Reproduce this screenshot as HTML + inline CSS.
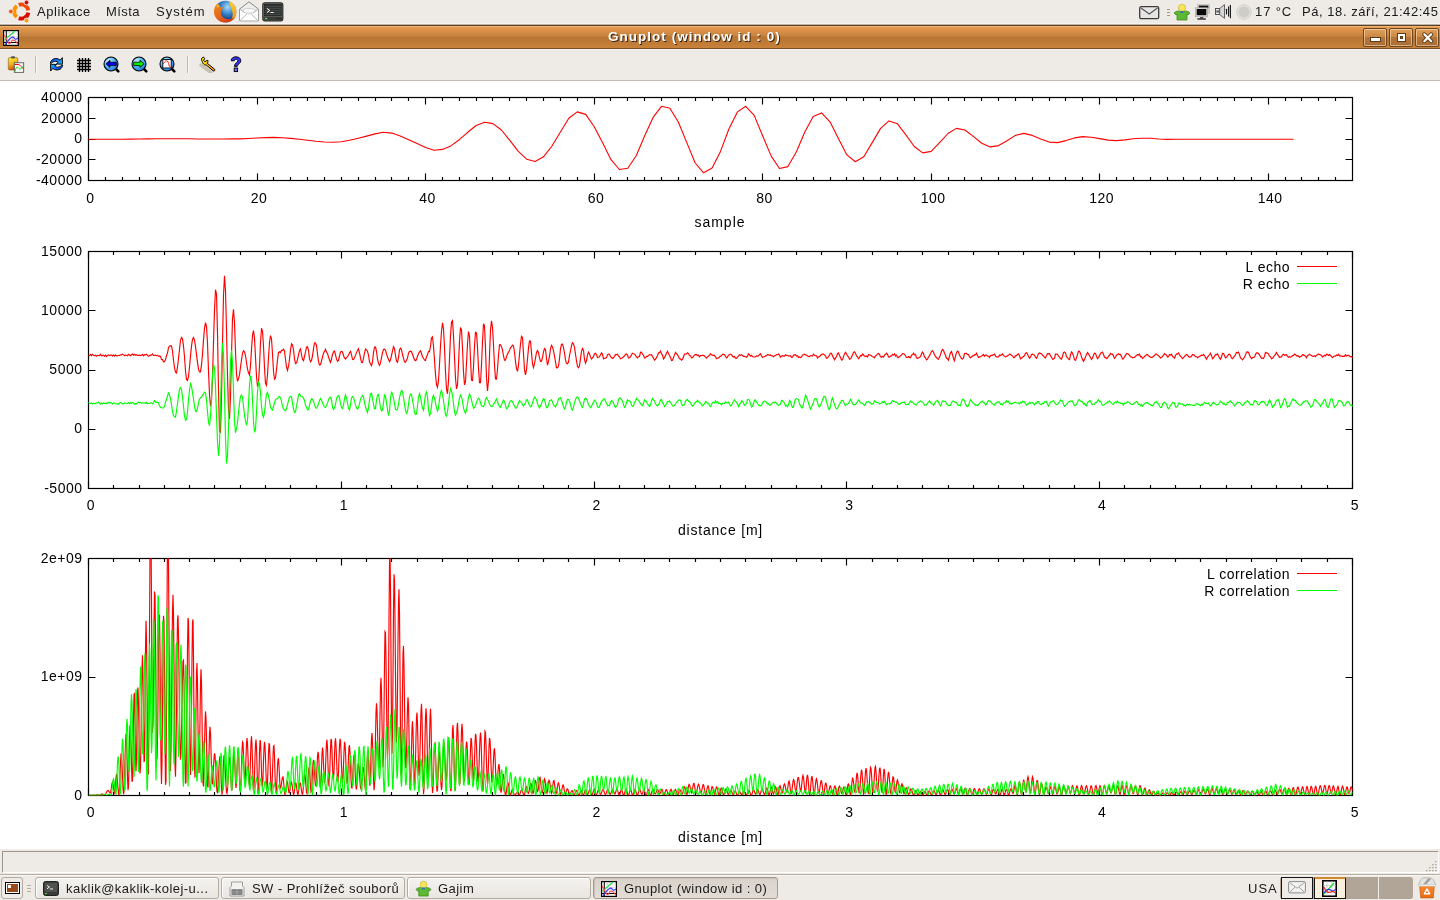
<!DOCTYPE html>
<html><head><meta charset="utf-8"><title>Gnuplot</title>
<style>html,body{margin:0;padding:0;} body{width:1440px;height:900px;overflow:hidden;position:relative;background:#fff;font-family:'Liberation Sans',sans-serif;-webkit-font-smoothing:antialiased;} #toppanel,#titlebar,#toolbar,#statusbar,#bottompanel{will-change:transform;}</style>
</head><body>
<div style="position:absolute;left:0;top:81px;width:1440px;height:768px;background:#fff"></div>
<svg style="position:absolute;left:0;top:0;will-change:transform" width="1440" height="900" viewBox="0 0 1440 900" font-family="Liberation Sans" font-size="14" letter-spacing="0.5" fill="#000">
<defs><clipPath id="clip3"><rect x="88.5" y="558.5" width="1264" height="237"/></clipPath></defs>
<rect x="88.5" y="97.5" width="1264.0" height="83.0" fill="none" stroke="#000" stroke-width="1.2"/>
<path d="M88.5 97.5v7M88.5 180.5v-7M257.5 97.5v7M257.5 180.5v-7M425.5 97.5v7M425.5 180.5v-7M594.5 97.5v7M594.5 180.5v-7M762.5 97.5v7M762.5 180.5v-7M931.5 97.5v7M931.5 180.5v-7M1099.5 97.5v7M1099.5 180.5v-7M1268.5 97.5v7M1268.5 180.5v-7M105.5 97.5v3.5M105.5 180.5v-3.5M122.5 97.5v3.5M122.5 180.5v-3.5M139.5 97.5v3.5M139.5 180.5v-3.5M155.5 97.5v3.5M155.5 180.5v-3.5M172.5 97.5v3.5M172.5 180.5v-3.5M189.5 97.5v3.5M189.5 180.5v-3.5M206.5 97.5v3.5M206.5 180.5v-3.5M223.5 97.5v3.5M223.5 180.5v-3.5M240.5 97.5v3.5M240.5 180.5v-3.5M273.5 97.5v3.5M273.5 180.5v-3.5M290.5 97.5v3.5M290.5 180.5v-3.5M307.5 97.5v3.5M307.5 180.5v-3.5M324.5 97.5v3.5M324.5 180.5v-3.5M341.5 97.5v3.5M341.5 180.5v-3.5M358.5 97.5v3.5M358.5 180.5v-3.5M375.5 97.5v3.5M375.5 180.5v-3.5M391.5 97.5v3.5M391.5 180.5v-3.5M408.5 97.5v3.5M408.5 180.5v-3.5M442.5 97.5v3.5M442.5 180.5v-3.5M459.5 97.5v3.5M459.5 180.5v-3.5M476.5 97.5v3.5M476.5 180.5v-3.5M492.5 97.5v3.5M492.5 180.5v-3.5M509.5 97.5v3.5M509.5 180.5v-3.5M526.5 97.5v3.5M526.5 180.5v-3.5M543.5 97.5v3.5M543.5 180.5v-3.5M560.5 97.5v3.5M560.5 180.5v-3.5M577.5 97.5v3.5M577.5 180.5v-3.5M610.5 97.5v3.5M610.5 180.5v-3.5M627.5 97.5v3.5M627.5 180.5v-3.5M644.5 97.5v3.5M644.5 180.5v-3.5M661.5 97.5v3.5M661.5 180.5v-3.5M678.5 97.5v3.5M678.5 180.5v-3.5M695.5 97.5v3.5M695.5 180.5v-3.5M712.5 97.5v3.5M712.5 180.5v-3.5M728.5 97.5v3.5M728.5 180.5v-3.5M745.5 97.5v3.5M745.5 180.5v-3.5M779.5 97.5v3.5M779.5 180.5v-3.5M796.5 97.5v3.5M796.5 180.5v-3.5M813.5 97.5v3.5M813.5 180.5v-3.5M830.5 97.5v3.5M830.5 180.5v-3.5M846.5 97.5v3.5M846.5 180.5v-3.5M863.5 97.5v3.5M863.5 180.5v-3.5M880.5 97.5v3.5M880.5 180.5v-3.5M897.5 97.5v3.5M897.5 180.5v-3.5M914.5 97.5v3.5M914.5 180.5v-3.5M948.5 97.5v3.5M948.5 180.5v-3.5M964.5 97.5v3.5M964.5 180.5v-3.5M981.5 97.5v3.5M981.5 180.5v-3.5M998.5 97.5v3.5M998.5 180.5v-3.5M1015.5 97.5v3.5M1015.5 180.5v-3.5M1032.5 97.5v3.5M1032.5 180.5v-3.5M1049.5 97.5v3.5M1049.5 180.5v-3.5M1065.5 97.5v3.5M1065.5 180.5v-3.5M1082.5 97.5v3.5M1082.5 180.5v-3.5M1116.5 97.5v3.5M1116.5 180.5v-3.5M1133.5 97.5v3.5M1133.5 180.5v-3.5M1150.5 97.5v3.5M1150.5 180.5v-3.5M1167.5 97.5v3.5M1167.5 180.5v-3.5M1183.5 97.5v3.5M1183.5 180.5v-3.5M1200.5 97.5v3.5M1200.5 180.5v-3.5M1217.5 97.5v3.5M1217.5 180.5v-3.5M1234.5 97.5v3.5M1234.5 180.5v-3.5M1251.5 97.5v3.5M1251.5 180.5v-3.5M1285.5 97.5v3.5M1285.5 180.5v-3.5M1301.5 97.5v3.5M1301.5 180.5v-3.5M1318.5 97.5v3.5M1318.5 180.5v-3.5M1335.5 97.5v3.5M1335.5 180.5v-3.5M88.5 97.5h7M1352.5 97.5h-7M88.5 118.5h7M1352.5 118.5h-7M88.5 139.5h7M1352.5 139.5h-7M88.5 159.5h7M1352.5 159.5h-7M88.5 180.5h7M1352.5 180.5h-7" stroke="#000" stroke-width="1.15" fill="none"/>
<text x="90.5" y="203" text-anchor="middle">0</text>
<text x="259" y="203" text-anchor="middle">20</text>
<text x="427.6" y="203" text-anchor="middle">40</text>
<text x="596.1" y="203" text-anchor="middle">60</text>
<text x="764.6" y="203" text-anchor="middle">80</text>
<text x="933.2" y="203" text-anchor="middle">100</text>
<text x="1101.7" y="203" text-anchor="middle">120</text>
<text x="1270.2" y="203" text-anchor="middle">140</text>
<text x="82.5" y="101.7" text-anchor="end">40000</text>
<text x="82.5" y="122.5" text-anchor="end">20000</text>
<text x="82.5" y="143.2" text-anchor="end">0</text>
<text x="82.5" y="163.9" text-anchor="end">-20000</text>
<text x="82.5" y="184.7" text-anchor="end">-40000</text>
<text x="720" y="227" text-anchor="middle" letter-spacing="1">sample</text>
<path d="M88.5 139.2 L96.9 139.2 L105.4 139.2 L113.8 139.2 L122.2 139.2 L130.6 139.1 L139.1 139 L147.5 138.9 L155.9 138.8 L164.3 138.7 L172.8 138.7 L181.2 138.7 L189.6 138.8 L198 139 L206.5 139 L214.9 139 L223.3 139 L231.8 138.9 L240.2 138.9 L248.6 138.5 L257 138 L265.5 137.6 L273.9 137.4 L282.3 137.7 L290.7 138.4 L299.2 139.3 L307.6 140.3 L316 141.3 L324.4 142 L332.9 142.2 L341.3 141.7 L349.7 140.2 L358.2 138.2 L366.6 136.1 L375 133.9 L383.4 132.3 L391.9 133.1 L400.3 136.1 L408.7 139.7 L417.1 143.6 L425.6 147.5 L434 150.2 L442.4 149.4 L450.8 145.9 L459.3 139.7 L467.7 132.3 L476.1 125.5 L484.6 122.2 L493 123.6 L501.4 130 L509.8 140.3 L518.3 151.4 L526.7 159.2 L535.1 161.5 L543.5 156.8 L552 146 L560.4 132 L568.8 118.3 L577.2 111.9 L585.7 114.4 L594.1 126.5 L602.5 142.6 L611 159.7 L619.4 169.5 L627.8 168.3 L636.2 155.7 L644.7 135.8 L653.1 117.4 L661.5 106.3 L669.9 108.2 L678.4 122.2 L686.8 142.6 L695.2 163 L703.6 172.8 L712.1 168.1 L720.5 151.4 L728.9 129 L737.4 111.9 L745.8 106.3 L754.2 115.4 L762.6 135.8 L771.1 155.9 L779.5 168.5 L787.9 166.6 L796.3 152 L804.8 132 L813.2 116.4 L821.6 112.9 L830 121.8 L838.5 138.7 L846.9 154.9 L855.3 161.7 L863.8 156.8 L872.2 142.6 L880.6 128.4 L889 120.9 L897.5 123.8 L905.9 134.9 L914.3 146.5 L922.7 152.9 L931.2 151.4 L939.6 142.6 L948 133.5 L956.4 128.4 L964.9 130 L973.3 136.4 L981.7 143.2 L990.2 146.9 L998.6 145.6 L1007 140.7 L1015.4 135.4 L1023.9 133.4 L1032.3 135.4 L1040.7 139 L1049.1 142.1 L1057.6 142.6 L1066 140.6 L1074.4 137.9 L1082.8 136.6 L1091.3 137.2 L1099.7 138.6 L1108.1 140.1 L1116.6 140.6 L1125 139.9 L1133.4 138.8 L1141.8 138.3 L1150.3 138.3 L1158.7 139 L1167.1 139.4 L1175.5 139.3 L1184 139.2 L1192.4 139.2 L1200.8 139.2 L1209.2 139.2 L1217.7 139.2 L1226.1 139.2 L1234.5 139.2 L1243 139.2 L1251.4 139.2 L1259.8 139.2 L1268.2 139.2 L1276.7 139.2 L1285.1 139.2 L1293.5 139.2" stroke="#FF0000" stroke-width="1.1" fill="none" stroke-linejoin="round"/>
<rect x="88.5" y="251.5" width="1264.0" height="237.0" fill="none" stroke="#000" stroke-width="1.2"/>
<path d="M88.5 251.5v7M88.5 488.5v-7M341.5 251.5v7M341.5 488.5v-7M594.5 251.5v7M594.5 488.5v-7M846.5 251.5v7M846.5 488.5v-7M1099.5 251.5v7M1099.5 488.5v-7M1352.5 251.5v7M1352.5 488.5v-7M113.5 251.5v3.5M113.5 488.5v-3.5M139.5 251.5v3.5M139.5 488.5v-3.5M164.5 251.5v3.5M164.5 488.5v-3.5M189.5 251.5v3.5M189.5 488.5v-3.5M214.5 251.5v3.5M214.5 488.5v-3.5M240.5 251.5v3.5M240.5 488.5v-3.5M265.5 251.5v3.5M265.5 488.5v-3.5M290.5 251.5v3.5M290.5 488.5v-3.5M316.5 251.5v3.5M316.5 488.5v-3.5M366.5 251.5v3.5M366.5 488.5v-3.5M391.5 251.5v3.5M391.5 488.5v-3.5M417.5 251.5v3.5M417.5 488.5v-3.5M442.5 251.5v3.5M442.5 488.5v-3.5M467.5 251.5v3.5M467.5 488.5v-3.5M492.5 251.5v3.5M492.5 488.5v-3.5M518.5 251.5v3.5M518.5 488.5v-3.5M543.5 251.5v3.5M543.5 488.5v-3.5M568.5 251.5v3.5M568.5 488.5v-3.5M619.5 251.5v3.5M619.5 488.5v-3.5M644.5 251.5v3.5M644.5 488.5v-3.5M669.5 251.5v3.5M669.5 488.5v-3.5M695.5 251.5v3.5M695.5 488.5v-3.5M720.5 251.5v3.5M720.5 488.5v-3.5M745.5 251.5v3.5M745.5 488.5v-3.5M771.5 251.5v3.5M771.5 488.5v-3.5M796.5 251.5v3.5M796.5 488.5v-3.5M821.5 251.5v3.5M821.5 488.5v-3.5M872.5 251.5v3.5M872.5 488.5v-3.5M897.5 251.5v3.5M897.5 488.5v-3.5M922.5 251.5v3.5M922.5 488.5v-3.5M948.5 251.5v3.5M948.5 488.5v-3.5M973.5 251.5v3.5M973.5 488.5v-3.5M998.5 251.5v3.5M998.5 488.5v-3.5M1023.5 251.5v3.5M1023.5 488.5v-3.5M1049.5 251.5v3.5M1049.5 488.5v-3.5M1074.5 251.5v3.5M1074.5 488.5v-3.5M1124.5 251.5v3.5M1124.5 488.5v-3.5M1150.5 251.5v3.5M1150.5 488.5v-3.5M1175.5 251.5v3.5M1175.5 488.5v-3.5M1200.5 251.5v3.5M1200.5 488.5v-3.5M1226.5 251.5v3.5M1226.5 488.5v-3.5M1251.5 251.5v3.5M1251.5 488.5v-3.5M1276.5 251.5v3.5M1276.5 488.5v-3.5M1301.5 251.5v3.5M1301.5 488.5v-3.5M1327.5 251.5v3.5M1327.5 488.5v-3.5M88.5 251.5h7M1352.5 251.5h-7M88.5 310.5h7M1352.5 310.5h-7M88.5 370.5h7M1352.5 370.5h-7M88.5 429.5h7M1352.5 429.5h-7M88.5 488.5h7M1352.5 488.5h-7" stroke="#000" stroke-width="1.15" fill="none"/>
<text x="91" y="510" text-anchor="middle">0</text>
<text x="343.8" y="510" text-anchor="middle">1</text>
<text x="596.6" y="510" text-anchor="middle">2</text>
<text x="849.4" y="510" text-anchor="middle">3</text>
<text x="1102.2" y="510" text-anchor="middle">4</text>
<text x="1355" y="510" text-anchor="middle">5</text>
<text x="82.5" y="255.7" text-anchor="end">15000</text>
<text x="82.5" y="314.9" text-anchor="end">10000</text>
<text x="82.5" y="374.2" text-anchor="end">5000</text>
<text x="82.5" y="433.4" text-anchor="end">0</text>
<text x="82.5" y="492.7" text-anchor="end">-5000</text>
<text x="720.5" y="535" text-anchor="middle" letter-spacing="0.8">distance [m]</text>
<text x="1290" y="272" text-anchor="end">L echo</text><path d="M1297 266.5h40" stroke="#FF0000" stroke-width="1.1"/>
<text x="1290" y="289" text-anchor="end">R echo</text><path d="M1297 283.5h40" stroke="#00FF00" stroke-width="1.1"/>
<path d="M88.5 355.8 L89.5 355.7 L90.5 354.4 L91.5 355.6 L92.5 354.3 L93.5 355.3 L94.5 355.7 L95.5 355.2 L96.5 356.3 L97.5 355.4 L98.5 355.5 L99.5 355.7 L100.5 354.3 L101.5 355.8 L102.5 355.6 L103.5 355.2 L104.5 356.1 L105.5 355.1 L106.5 356.6 L107.5 355.4 L108.5 354.9 L109.5 355.6 L110.5 355.1 L111.5 355 L112.5 355.9 L113.5 354.8 L114.5 356.1 L115.5 355 L116.5 355.7 L117.5 355.8 L118.5 355.5 L119.5 355.5 L120.5 354.8 L121.5 354.8 L122.5 354.1 L123.5 354.9 L124.5 355.6 L125.5 355.2 L126.5 355.3 L127.5 355.7 L128.5 354.3 L129.5 355 L130.5 355.7 L131.5 354.8 L132.5 354 L133.5 355.1 L134.5 354.3 L135.5 355.2 L136.5 354.6 L137.5 355.4 L138.5 355.5 L139.5 355 L140.5 355.6 L141.5 355.3 L142.5 354.4 L143.5 355.8 L144.5 354.6 L145.5 354.9 L146.5 354.2 L147.5 355.4 L148.5 356.3 L149.5 355.6 L150.5 355 L151.5 355.1 L152.5 354 L153.5 355.5 L154.5 355.5 L155.5 355.1 L156.5 355.7 L157.5 355.2 L158.5 356.4 L159.5 355.9 L160.5 356.4 L161.5 359.4 L162.5 359.6 L163.5 361.9 L164.5 361.5 L165.5 359.7 L166.5 355.6 L167.5 353 L168.5 347.6 L169.5 346.1 L170.5 345.9 L171.5 345.9 L172.5 351.2 L173.5 360.1 L174.5 367.5 L175.5 372.2 L176.5 372.9 L177.5 366.9 L178.5 358.5 L179.5 349.3 L180.5 340.3 L181.5 337.5 L182.5 338.8 L183.5 346.1 L184.5 356.8 L185.5 370.8 L186.5 379.5 L187.5 380.4 L188.5 376.7 L189.5 367.3 L190.5 355.9 L191.5 346.1 L192.5 339.1 L193.5 337.6 L194.5 340.2 L195.5 346.7 L196.5 354.6 L197.5 362.4 L198.5 369.1 L199.5 372 L200.5 371.9 L201.5 365 L202.5 354.1 L203.5 340.1 L204.5 328.1 L205.5 322.7 L206.5 326.5 L207.5 343 L208.5 371.2 L209.5 394.3 L210.5 406.3 L211.5 400.4 L212.5 376.9 L213.5 342.4 L214.5 310.1 L215.5 289.7 L216.5 294 L217.5 333.2 L218.5 389.9 L219.5 431.4 L220.5 432.2 L221.5 396.7 L222.5 342.8 L223.5 295.3 L224.5 275.9 L225.5 291.2 L226.5 329.6 L227.5 375.4 L228.5 409.5 L229.5 418.9 L230.5 396.7 L231.5 355.1 L232.5 318.5 L233.5 309.3 L234.5 322.7 L235.5 351.5 L236.5 374.1 L237.5 381.4 L238.5 378.6 L239.5 374.9 L240.5 367.1 L241.5 360 L242.5 353.3 L243.5 350.8 L244.5 351.8 L245.5 355.5 L246.5 362.5 L247.5 369.2 L248.5 372.8 L249.5 375.1 L250.5 365.6 L251.5 349.4 L252.5 335.2 L253.5 330.7 L254.5 338 L255.5 357.1 L256.5 376.2 L257.5 386.7 L258.5 383 L259.5 366.3 L260.5 342.7 L261.5 328.3 L262.5 331.1 L263.5 346.3 L264.5 367.7 L265.5 383.4 L266.5 385.4 L267.5 374.9 L268.5 357.6 L269.5 342.5 L270.5 335.7 L271.5 338.9 L272.5 353.7 L273.5 371.2 L274.5 379.2 L275.5 378.1 L276.5 369.4 L277.5 360 L278.5 352.6 L279.5 351.7 L280.5 352.5 L281.5 350.4 L282.5 350.4 L283.5 349.3 L284.5 351 L285.5 359.5 L286.5 366.8 L287.5 370.3 L288.5 366.5 L289.5 359.2 L290.5 350.1 L291.5 343.8 L292.5 345.1 L293.5 349.5 L294.5 358.9 L295.5 363.5 L296.5 362.8 L297.5 359.7 L298.5 354.9 L299.5 350.6 L300.5 348.9 L301.5 354.5 L302.5 359.3 L303.5 360.7 L304.5 356.5 L305.5 352 L306.5 347.2 L307.5 346.8 L308.5 350.3 L309.5 358.7 L310.5 361.8 L311.5 360.4 L312.5 356 L313.5 348.9 L314.5 342.9 L315.5 343 L316.5 345.5 L317.5 354 L318.5 361.4 L319.5 365 L320.5 364.5 L321.5 361.2 L322.5 357 L323.5 353.1 L324.5 351.4 L325.5 349.2 L326.5 352.1 L327.5 353.6 L328.5 356.8 L329.5 360 L330.5 362.3 L331.5 359.3 L332.5 354.5 L333.5 351.9 L334.5 351.1 L335.5 354.9 L336.5 358.9 L337.5 361.3 L338.5 360.5 L339.5 356.1 L340.5 351.9 L341.5 351.4 L342.5 352 L343.5 355.5 L344.5 357.9 L345.5 359 L346.5 357.6 L347.5 356.7 L348.5 355.2 L349.5 352.8 L350.5 351.4 L351.5 354.7 L352.5 359.3 L353.5 359.5 L354.5 357.7 L355.5 355.4 L356.5 352.9 L357.5 350.4 L358.5 348.8 L359.5 352.8 L360.5 357.9 L361.5 362.3 L362.5 362.6 L363.5 358.5 L364.5 353 L365.5 349 L366.5 349.8 L367.5 351.4 L368.5 355 L369.5 361.8 L370.5 364 L371.5 365.6 L372.5 361.9 L373.5 352.7 L374.5 347.2 L375.5 347 L376.5 351.3 L377.5 359.2 L378.5 363.4 L379.5 365.4 L380.5 362.9 L381.5 357.7 L382.5 352.6 L383.5 349.5 L384.5 349.1 L385.5 350.3 L386.5 353.8 L387.5 357.1 L388.5 359.2 L389.5 361.6 L390.5 359.8 L391.5 355.5 L392.5 350.9 L393.5 346.6 L394.5 348.6 L395.5 355.3 L396.5 361.3 L397.5 362.3 L398.5 357.5 L399.5 350 L400.5 348.1 L401.5 349.7 L402.5 354.5 L403.5 358.4 L404.5 361.9 L405.5 362.3 L406.5 360.3 L407.5 357.9 L408.5 353.3 L409.5 351.4 L410.5 351.2 L411.5 351.7 L412.5 354.5 L413.5 357.2 L414.5 359.8 L415.5 360.7 L416.5 359.6 L417.5 356.2 L418.5 353.7 L419.5 351.9 L420.5 350.8 L421.5 353.5 L422.5 356.7 L423.5 358.3 L424.5 360 L425.5 360.4 L426.5 356.6 L427.5 354.8 L428.5 351.4 L429.5 351.6 L430.5 346.4 L431.5 337.9 L432.5 336.8 L433.5 346.1 L434.5 359.9 L435.5 374.4 L436.5 384.5 L437.5 387.2 L438.5 380.7 L439.5 364.5 L440.5 345.9 L441.5 331.3 L442.5 322.8 L443.5 328.9 L444.5 347.4 L445.5 372.2 L446.5 388.9 L447.5 393.8 L448.5 381 L449.5 359 L450.5 335.9 L451.5 321.9 L452.5 320.6 L453.5 335.5 L454.5 357.1 L455.5 378.3 L456.5 388.9 L457.5 385 L458.5 364.6 L459.5 341.2 L460.5 327.5 L461.5 330 L462.5 348 L463.5 371.9 L464.5 384.9 L465.5 381.6 L466.5 363.6 L467.5 343.7 L468.5 331.6 L469.5 336.2 L470.5 359.2 L471.5 380.2 L472.5 380.6 L473.5 367.3 L474.5 346.1 L475.5 332.2 L476.5 332.9 L477.5 347.3 L478.5 367.9 L479.5 382.7 L480.5 382.7 L481.5 365 L482.5 342 L483.5 323.8 L484.5 325.9 L485.5 348.4 L486.5 377.8 L487.5 391 L488.5 380.8 L489.5 355.7 L490.5 329.7 L491.5 320.9 L492.5 327.1 L493.5 345.2 L494.5 365.2 L495.5 378.9 L496.5 379.1 L497.5 369.3 L498.5 355.3 L499.5 344.6 L500.5 344.8 L501.5 346.8 L502.5 349.8 L503.5 356 L504.5 360.1 L505.5 360.2 L506.5 356.6 L507.5 354.1 L508.5 352.3 L509.5 350.6 L510.5 347.5 L511.5 346.7 L512.5 345.2 L513.5 346 L514.5 352 L515.5 361.7 L516.5 368.6 L517.5 371.4 L518.5 365.2 L519.5 354.2 L520.5 344 L521.5 336.3 L522.5 337.4 L523.5 353.6 L524.5 369.9 L525.5 374.9 L526.5 369.7 L527.5 359 L528.5 348.1 L529.5 341 L530.5 341.3 L531.5 352.6 L532.5 363.8 L533.5 367.5 L534.5 363.7 L535.5 358.2 L536.5 352.5 L537.5 350.6 L538.5 352.8 L539.5 357.7 L540.5 361.5 L541.5 361 L542.5 357.6 L543.5 352 L544.5 348.6 L545.5 349.5 L546.5 358.3 L547.5 365.1 L548.5 361.4 L549.5 356.3 L550.5 348.6 L551.5 345.3 L552.5 346.9 L553.5 350.9 L554.5 355.9 L555.5 362 L556.5 367.7 L557.5 367.9 L558.5 366.2 L559.5 358.7 L560.5 348.8 L561.5 344.3 L562.5 344.1 L563.5 347.7 L564.5 352.8 L565.5 359.9 L566.5 363.4 L567.5 363.7 L568.5 362 L569.5 355.6 L570.5 351 L571.5 345.7 L572.5 342.6 L573.5 343.9 L574.5 347.3 L575.5 354 L576.5 361 L577.5 366.6 L578.5 367.7 L579.5 365.9 L580.5 358.6 L581.5 351.3 L582.5 348.4 L583.5 350.5 L584.5 359.3 L585.5 363 L586.5 360.8 L587.5 354.8 L588.5 352.2 L589.5 354.1 L590.5 356.9 L591.5 359 L592.5 358 L593.5 356.4 L594.5 353.9 L595.5 353.3 L596.5 354.7 L597.5 357.6 L598.5 357.3 L599.5 356.8 L600.5 354.8 L601.5 352.9 L602.5 354.3 L603.5 358.8 L604.5 358.2 L605.5 358.1 L606.5 357.6 L607.5 354.9 L608.5 354.1 L609.5 354.3 L610.5 356.7 L611.5 357.5 L612.5 358.4 L613.5 357.5 L614.5 356.3 L615.5 354.6 L616.5 354.6 L617.5 354.3 L618.5 356.1 L619.5 356.9 L620.5 358.8 L621.5 358.3 L622.5 357.7 L623.5 356.7 L624.5 356 L625.5 354.3 L626.5 354 L627.5 355 L628.5 358 L629.5 357.8 L630.5 356.7 L631.5 354.7 L632.5 353.3 L633.5 353.7 L634.5 353.9 L635.5 355.4 L636.5 356.9 L637.5 357.9 L638.5 356.7 L639.5 356.5 L640.5 352.3 L641.5 352.1 L642.5 354.2 L643.5 355.2 L644.5 358 L645.5 357.8 L646.5 356.4 L647.5 356.5 L648.5 355.4 L649.5 354.6 L650.5 355 L651.5 354.7 L652.5 356.4 L653.5 358.2 L654.5 360.1 L655.5 359.3 L656.5 357.4 L657.5 355.8 L658.5 352.9 L659.5 352.8 L660.5 351.1 L661.5 353.8 L662.5 355.1 L663.5 359 L664.5 357.7 L665.5 355.4 L666.5 353.2 L667.5 351.3 L668.5 353.6 L669.5 355.4 L670.5 357.4 L671.5 360.5 L672.5 360.3 L673.5 357.6 L674.5 354.9 L675.5 352.4 L676.5 353.6 L677.5 354.9 L678.5 356.5 L679.5 358.8 L680.5 358.9 L681.5 360.2 L682.5 359.4 L683.5 356.7 L684.5 354.1 L685.5 354 L686.5 353.9 L687.5 352.8 L688.5 353.6 L689.5 355.6 L690.5 355.8 L691.5 357.9 L692.5 357.7 L693.5 356.4 L694.5 355 L695.5 354.6 L696.5 354.5 L697.5 355.5 L698.5 355.2 L699.5 356.8 L700.5 355.8 L701.5 355.5 L702.5 355.4 L703.5 355.4 L704.5 356 L705.5 357.2 L706.5 358.1 L707.5 356.9 L708.5 356.2 L709.5 355.2 L710.5 353.7 L711.5 355 L712.5 355.1 L713.5 355.4 L714.5 355.4 L715.5 356.8 L716.5 358.7 L717.5 358.1 L718.5 358 L719.5 357 L720.5 356.1 L721.5 355.8 L722.5 354.3 L723.5 354.4 L724.5 354.7 L725.5 356.1 L726.5 357.8 L727.5 357.1 L728.5 355.1 L729.5 354.8 L730.5 354.1 L731.5 354.7 L732.5 356.3 L733.5 357 L734.5 356.4 L735.5 358.2 L736.5 358.4 L737.5 357.2 L738.5 356 L739.5 354.8 L740.5 355.4 L741.5 354.8 L742.5 355.5 L743.5 356.3 L744.5 356.3 L745.5 356.8 L746.5 357.2 L747.5 356.1 L748.5 353.8 L749.5 354.8 L750.5 356.1 L751.5 355.3 L752.5 356.6 L753.5 357 L754.5 357 L755.5 356.7 L756.5 355.9 L757.5 356.1 L758.5 355.9 L759.5 354.7 L760.5 353.7 L761.5 356 L762.5 357.4 L763.5 356.8 L764.5 356.7 L765.5 355.9 L766.5 355.7 L767.5 354.6 L768.5 354.8 L769.5 355.4 L770.5 355 L771.5 356 L772.5 355.8 L773.5 356.8 L774.5 355.8 L775.5 355.5 L776.5 354.6 L777.5 354.7 L778.5 354 L779.5 355 L780.5 357.3 L781.5 356.2 L782.5 355.5 L783.5 356.2 L784.5 356.2 L785.5 354.8 L786.5 355.5 L787.5 355.4 L788.5 356.1 L789.5 356 L790.5 355.6 L791.5 357.4 L792.5 357.2 L793.5 355.2 L794.5 354.9 L795.5 354.6 L796.5 356 L797.5 355.7 L798.5 357.4 L799.5 356.9 L800.5 357.6 L801.5 357 L802.5 355.2 L803.5 354.7 L804.5 354.1 L805.5 355 L806.5 355 L807.5 356 L808.5 356.5 L809.5 356.4 L810.5 355.5 L811.5 355.7 L812.5 356 L813.5 354.3 L814.5 355.3 L815.5 355.7 L816.5 355.8 L817.5 357.9 L818.5 356.8 L819.5 356.6 L820.5 355.5 L821.5 354.4 L822.5 354.1 L823.5 354 L824.5 354.9 L825.5 355.8 L826.5 358.3 L827.5 358.1 L828.5 356.5 L829.5 355.2 L830.5 353.4 L831.5 353.4 L832.5 355.9 L833.5 357.7 L834.5 359.7 L835.5 357.9 L836.5 356.8 L837.5 353.7 L838.5 353 L839.5 355.4 L840.5 357.5 L841.5 360 L842.5 359.8 L843.5 356.6 L844.5 353.9 L845.5 352.3 L846.5 353.7 L847.5 355.8 L848.5 356.8 L849.5 359.2 L850.5 358.8 L851.5 357.2 L852.5 354.9 L853.5 352.5 L854.5 351.8 L855.5 353.2 L856.5 356 L857.5 356.8 L858.5 358.7 L859.5 357.4 L860.5 355.5 L861.5 355.9 L862.5 353.9 L863.5 355 L864.5 356.1 L865.5 356.5 L866.5 355.9 L867.5 356.9 L868.5 354.7 L869.5 354.8 L870.5 355.3 L871.5 355.8 L872.5 356.8 L873.5 357 L874.5 357.6 L875.5 355.9 L876.5 355.4 L877.5 354 L878.5 353.5 L879.5 354.4 L880.5 356.7 L881.5 357.2 L882.5 356.4 L883.5 357.1 L884.5 355 L885.5 354.5 L886.5 353.1 L887.5 354.3 L888.5 357 L889.5 357.1 L890.5 356.1 L891.5 355.9 L892.5 354.4 L893.5 355.1 L894.5 353.9 L895.5 356 L896.5 355.1 L897.5 357.2 L898.5 357.5 L899.5 356.5 L900.5 355.9 L901.5 354.8 L902.5 353.7 L903.5 353.8 L904.5 354.2 L905.5 355.8 L906.5 357.5 L907.5 357.5 L908.5 356.5 L909.5 357.4 L910.5 357.8 L911.5 355 L912.5 354.8 L913.5 353.2 L914.5 354.9 L915.5 354.5 L916.5 357.8 L917.5 358.3 L918.5 358 L919.5 357.3 L920.5 356.6 L921.5 353.7 L922.5 352 L923.5 353.6 L924.5 356.9 L925.5 357.9 L926.5 359.9 L927.5 359.1 L928.5 357 L929.5 355.7 L930.5 353.6 L931.5 351.3 L932.5 350.5 L933.5 352.2 L934.5 354.7 L935.5 356.4 L936.5 357.6 L937.5 358.8 L938.5 359.2 L939.5 357.1 L940.5 354.7 L941.5 351.3 L942.5 349.4 L943.5 350.4 L944.5 353.3 L945.5 355.2 L946.5 358.3 L947.5 358.8 L948.5 360.1 L949.5 355.8 L950.5 352.8 L951.5 351.5 L952.5 354.6 L953.5 358.5 L954.5 360.6 L955.5 355.8 L956.5 352.8 L957.5 351.1 L958.5 351.8 L959.5 355.2 L960.5 356.8 L961.5 358.5 L962.5 359.1 L963.5 357.9 L964.5 353.5 L965.5 353.3 L966.5 353.4 L967.5 354.5 L968.5 354.6 L969.5 356.8 L970.5 357.7 L971.5 357.1 L972.5 355.8 L973.5 355.8 L974.5 354.7 L975.5 354.8 L976.5 353.3 L977.5 355.5 L978.5 357.4 L979.5 356.9 L980.5 356.7 L981.5 356.1 L982.5 355.5 L983.5 354.5 L984.5 356.2 L985.5 355.1 L986.5 355 L987.5 356 L988.5 356.2 L989.5 357.4 L990.5 355.6 L991.5 355.4 L992.5 355.4 L993.5 354.4 L994.5 354 L995.5 356.1 L996.5 356.9 L997.5 357 L998.5 357 L999.5 355 L1000.5 355.5 L1001.5 354.8 L1002.5 353.9 L1003.5 355.4 L1004.5 356.4 L1005.5 356.9 L1006.5 356.3 L1007.5 355.9 L1008.5 355.1 L1009.5 354.1 L1010.5 354.3 L1011.5 355.2 L1012.5 355.8 L1013.5 357.5 L1014.5 357.6 L1015.5 355.6 L1016.5 355.7 L1017.5 354.5 L1018.5 353.8 L1019.5 355.8 L1020.5 358.8 L1021.5 358.2 L1022.5 357.2 L1023.5 356.6 L1024.5 355.4 L1025.5 353.4 L1026.5 352.6 L1027.5 354.2 L1028.5 356.4 L1029.5 358 L1030.5 357.1 L1031.5 354.5 L1032.5 354.2 L1033.5 354.8 L1034.5 355 L1035.5 357.4 L1036.5 358.3 L1037.5 356.3 L1038.5 353.6 L1039.5 353 L1040.5 353.4 L1041.5 353.7 L1042.5 355.2 L1043.5 356 L1044.5 357.3 L1045.5 357.9 L1046.5 355.4 L1047.5 353.7 L1048.5 353.8 L1049.5 353.4 L1050.5 355.9 L1051.5 357 L1052.5 359.2 L1053.5 359.2 L1054.5 358.1 L1055.5 354 L1056.5 354.1 L1057.5 354.2 L1058.5 356.2 L1059.5 357.1 L1060.5 358.5 L1061.5 359.1 L1062.5 356.5 L1063.5 352.5 L1064.5 351.9 L1065.5 353 L1066.5 356.6 L1067.5 357.7 L1068.5 359.1 L1069.5 359.6 L1070.5 354.8 L1071.5 351.9 L1072.5 353 L1073.5 356.2 L1074.5 359.8 L1075.5 360.3 L1076.5 358 L1077.5 354.3 L1078.5 351.2 L1079.5 351.5 L1080.5 353.2 L1081.5 356.8 L1082.5 359.4 L1083.5 361.2 L1084.5 359.4 L1085.5 357.1 L1086.5 354.4 L1087.5 352.6 L1088.5 353.8 L1089.5 355.9 L1090.5 357.2 L1091.5 359.4 L1092.5 358.3 L1093.5 355.3 L1094.5 353.1 L1095.5 353.4 L1096.5 356.2 L1097.5 358.6 L1098.5 357.4 L1099.5 355.9 L1100.5 353.2 L1101.5 352.8 L1102.5 352.1 L1103.5 354.5 L1104.5 357.2 L1105.5 357.4 L1106.5 358.5 L1107.5 358 L1108.5 356.1 L1109.5 355.6 L1110.5 353.4 L1111.5 354.1 L1112.5 354 L1113.5 356 L1114.5 358.5 L1115.5 357.3 L1116.5 355 L1117.5 354.5 L1118.5 353.8 L1119.5 354.6 L1120.5 354.4 L1121.5 356.5 L1122.5 359.1 L1123.5 358.7 L1124.5 356.8 L1125.5 355.4 L1126.5 353.4 L1127.5 353.7 L1128.5 354.3 L1129.5 355.3 L1130.5 356.8 L1131.5 356.9 L1132.5 357.9 L1133.5 357.5 L1134.5 357.4 L1135.5 355.9 L1136.5 355.7 L1137.5 354.5 L1138.5 355.1 L1139.5 354.2 L1140.5 356.7 L1141.5 356.4 L1142.5 358.4 L1143.5 357.6 L1144.5 356.5 L1145.5 355.7 L1146.5 354.7 L1147.5 354.4 L1148.5 355.9 L1149.5 356.5 L1150.5 357.2 L1151.5 357.3 L1152.5 357.2 L1153.5 356.3 L1154.5 355.5 L1155.5 354 L1156.5 354 L1157.5 355 L1158.5 355.6 L1159.5 356.6 L1160.5 358.1 L1161.5 357.6 L1162.5 356.4 L1163.5 355.2 L1164.5 353.7 L1165.5 354.5 L1166.5 355 L1167.5 357 L1168.5 356.8 L1169.5 354.6 L1170.5 355.1 L1171.5 354.2 L1172.5 356.5 L1173.5 357.1 L1174.5 358.2 L1175.5 355.5 L1176.5 354 L1177.5 354.2 L1178.5 353 L1179.5 354.7 L1180.5 356.4 L1181.5 357.1 L1182.5 358.7 L1183.5 357.7 L1184.5 356.4 L1185.5 355.5 L1186.5 354.5 L1187.5 354.9 L1188.5 356.6 L1189.5 357.1 L1190.5 357 L1191.5 356.3 L1192.5 354.4 L1193.5 354.7 L1194.5 355.5 L1195.5 356.7 L1196.5 356.7 L1197.5 357.7 L1198.5 357.1 L1199.5 356.5 L1200.5 355.7 L1201.5 355.1 L1202.5 355.4 L1203.5 354.3 L1204.5 355.5 L1205.5 357.4 L1206.5 359.3 L1207.5 357.1 L1208.5 355.9 L1209.5 354.8 L1210.5 353.3 L1211.5 355.6 L1212.5 358.7 L1213.5 357.8 L1214.5 356.4 L1215.5 354.5 L1216.5 354.8 L1217.5 353.8 L1218.5 356 L1219.5 357.8 L1220.5 359.3 L1221.5 356.8 L1222.5 353.4 L1223.5 353.5 L1224.5 355.6 L1225.5 357.9 L1226.5 357.4 L1227.5 355.8 L1228.5 354.4 L1229.5 354.1 L1230.5 355.2 L1231.5 357.9 L1232.5 358.7 L1233.5 357.4 L1234.5 356.2 L1235.5 354.8 L1236.5 352.5 L1237.5 352.8 L1238.5 352.1 L1239.5 354.8 L1240.5 357.9 L1241.5 358.7 L1242.5 359.8 L1243.5 358.5 L1244.5 357.1 L1245.5 354.9 L1246.5 352.2 L1247.5 351.9 L1248.5 352.3 L1249.5 355 L1250.5 357.3 L1251.5 358.6 L1252.5 357.6 L1253.5 357.4 L1254.5 357.1 L1255.5 354.6 L1256.5 352.8 L1257.5 352.9 L1258.5 353.4 L1259.5 354.8 L1260.5 356.6 L1261.5 358.3 L1262.5 358 L1263.5 358.4 L1264.5 356.4 L1265.5 352.3 L1266.5 352.9 L1267.5 353.1 L1268.5 354 L1269.5 356.2 L1270.5 356.7 L1271.5 358.8 L1272.5 358.3 L1273.5 356.9 L1274.5 355.5 L1275.5 354.3 L1276.5 352.5 L1277.5 354.4 L1278.5 355.8 L1279.5 357.6 L1280.5 357.1 L1281.5 356.7 L1282.5 354.9 L1283.5 354.2 L1284.5 355.4 L1285.5 354.9 L1286.5 354.6 L1287.5 356.3 L1288.5 357.3 L1289.5 356.7 L1290.5 357.1 L1291.5 356.8 L1292.5 355.6 L1293.5 355.4 L1294.5 354 L1295.5 354.7 L1296.5 355.9 L1297.5 355.7 L1298.5 356.1 L1299.5 357.2 L1300.5 356.6 L1301.5 356.2 L1302.5 354.6 L1303.5 354.9 L1304.5 355.4 L1305.5 356.2 L1306.5 357.8 L1307.5 355.6 L1308.5 355.1 L1309.5 354.3 L1310.5 355.1 L1311.5 355.6 L1312.5 356.2 L1313.5 356.4 L1314.5 355.8 L1315.5 356.6 L1316.5 355.2 L1317.5 354.7 L1318.5 353.9 L1319.5 354.6 L1320.5 354.7 L1321.5 355.5 L1322.5 356.9 L1323.5 356.3 L1324.5 355.3 L1325.5 355.9 L1326.5 354.1 L1327.5 354.5 L1328.5 355.5 L1329.5 354.5 L1330.5 355.5 L1331.5 356.7 L1332.5 357.6 L1333.5 356.4 L1334.5 356 L1335.5 356.1 L1336.5 355 L1337.5 355.5 L1338.5 354.3 L1339.5 355.9 L1340.5 355.9 L1341.5 356.1 L1342.5 356.6 L1343.5 356.2 L1344.5 356.3 L1345.5 354.7 L1346.5 355.9 L1347.5 355.3 L1348.5 355.4 L1349.5 356 L1350.5 356.9 L1351.5 356.4 L1352.5 357.7" stroke="#FF0000" stroke-width="1.15" fill="none"/>
<path d="M88.5 402.3 L89.5 403.3 L90.5 403.4 L91.5 403.1 L92.5 404 L93.5 403.2 L94.5 403.7 L95.5 403.4 L96.5 402.8 L97.5 403.2 L98.5 402.2 L99.5 403 L100.5 404.2 L101.5 403.1 L102.5 403.7 L103.5 402.9 L104.5 403.5 L105.5 403.2 L106.5 403.3 L107.5 403.1 L108.5 402.2 L109.5 403.1 L110.5 402.6 L111.5 402.9 L112.5 403.9 L113.5 403.1 L114.5 403 L115.5 403.7 L116.5 404 L117.5 403.7 L118.5 404.2 L119.5 402.9 L120.5 402.7 L121.5 402.8 L122.5 403.8 L123.5 403.5 L124.5 402.9 L125.5 403.2 L126.5 403.7 L127.5 403.5 L128.5 402.6 L129.5 403.7 L130.5 402.9 L131.5 403.4 L132.5 402.5 L133.5 402.9 L134.5 404.4 L135.5 403.5 L136.5 403.9 L137.5 402.8 L138.5 402.1 L139.5 402.9 L140.5 402.5 L141.5 403.1 L142.5 403 L143.5 402.8 L144.5 402.8 L145.5 403.4 L146.5 402.5 L147.5 403.7 L148.5 403.5 L149.5 403.5 L150.5 402.7 L151.5 403.2 L152.5 403.7 L153.5 402.6 L154.5 400.8 L155.5 401.9 L156.5 402.3 L157.5 402.1 L158.5 402.5 L159.5 405.7 L160.5 407.2 L161.5 407.7 L162.5 408 L163.5 407.7 L164.5 406.5 L165.5 402 L166.5 399.7 L167.5 395.8 L168.5 393 L169.5 395 L170.5 398.3 L171.5 404.7 L172.5 411.5 L173.5 415.4 L174.5 416.9 L175.5 417 L176.5 411 L177.5 403.7 L178.5 395.6 L179.5 389.3 L180.5 387.7 L181.5 389.7 L182.5 396.9 L183.5 406.2 L184.5 415.9 L185.5 420.2 L186.5 419.4 L187.5 412.1 L188.5 399.4 L189.5 390.2 L190.5 383.7 L191.5 386.4 L192.5 392.4 L193.5 398.9 L194.5 406.5 L195.5 411.2 L196.5 411.3 L197.5 408 L198.5 402.8 L199.5 399.1 L200.5 397.6 L201.5 397.4 L202.5 395.3 L203.5 394.1 L204.5 392.1 L205.5 393.1 L206.5 400 L207.5 411.7 L208.5 422.1 L209.5 425.7 L210.5 415.9 L211.5 397.2 L212.5 376.2 L213.5 364.3 L214.5 367.8 L215.5 385.9 L216.5 415.5 L217.5 441.7 L218.5 455.7 L219.5 444.5 L220.5 408.2 L221.5 365 L222.5 343.1 L223.5 353.7 L224.5 393.1 L225.5 438.6 L226.5 463.4 L227.5 455.4 L228.5 428 L229.5 392.3 L230.5 361.7 L231.5 350.3 L232.5 362.2 L233.5 391.4 L234.5 421.2 L235.5 432.6 L236.5 429 L237.5 422.6 L238.5 412.9 L239.5 403.4 L240.5 396.2 L241.5 395 L242.5 397.5 L243.5 406.3 L244.5 414.9 L245.5 420.8 L246.5 425.2 L247.5 420.5 L248.5 404 L249.5 385.1 L250.5 375.6 L251.5 380.8 L252.5 399.3 L253.5 421.9 L254.5 432.4 L255.5 429.3 L256.5 411.9 L257.5 391.8 L258.5 382.2 L259.5 383.7 L260.5 392.9 L261.5 406.1 L262.5 414.9 L263.5 417.2 L264.5 412.7 L265.5 402.8 L266.5 394 L267.5 392.5 L268.5 396 L269.5 401.1 L270.5 407.3 L271.5 409.2 L272.5 410.2 L273.5 406.5 L274.5 402.5 L275.5 399.8 L276.5 398.7 L277.5 398.7 L278.5 396.7 L279.5 396.6 L280.5 398.1 L281.5 401.1 L282.5 406.4 L283.5 409 L284.5 410 L285.5 410.8 L286.5 408.6 L287.5 404.7 L288.5 400.7 L289.5 397.3 L290.5 396.5 L291.5 397 L292.5 402.8 L293.5 409 L294.5 412.4 L295.5 411.8 L296.5 406 L297.5 401.2 L298.5 395.1 L299.5 393.9 L300.5 396 L301.5 396.2 L302.5 396.9 L303.5 398.6 L304.5 400.3 L305.5 405.2 L306.5 407 L307.5 410 L308.5 409.4 L309.5 405.5 L310.5 401.3 L311.5 398.7 L312.5 399.2 L313.5 401.2 L314.5 404.7 L315.5 407.7 L316.5 408.3 L317.5 406.5 L318.5 403.7 L319.5 400.4 L320.5 398.5 L321.5 400.3 L322.5 402.7 L323.5 405.5 L324.5 406.9 L325.5 407.4 L326.5 405.2 L327.5 403.2 L328.5 399.9 L329.5 397.7 L330.5 397.2 L331.5 399.5 L332.5 407 L333.5 409.4 L334.5 407.8 L335.5 404.3 L336.5 398.6 L337.5 396.7 L338.5 395.8 L339.5 397.8 L340.5 403 L341.5 407.7 L342.5 408.5 L343.5 405.2 L344.5 398.4 L345.5 395 L346.5 398 L347.5 402.8 L348.5 408.3 L349.5 410 L350.5 404.6 L351.5 398 L352.5 396.7 L353.5 397.6 L354.5 401.2 L355.5 404.7 L356.5 407.9 L357.5 409.1 L358.5 407.5 L359.5 403.9 L360.5 399.2 L361.5 397 L362.5 395.5 L363.5 396.8 L364.5 402.5 L365.5 406.6 L366.5 410 L367.5 412.6 L368.5 407.9 L369.5 399.9 L370.5 393.6 L371.5 393.2 L372.5 398.4 L373.5 404.1 L374.5 408.9 L375.5 408.4 L376.5 400.3 L377.5 395 L378.5 394.4 L379.5 400.5 L380.5 407.9 L381.5 411 L382.5 410.2 L383.5 402.9 L384.5 395.1 L385.5 396.1 L386.5 402.3 L387.5 409.6 L388.5 415.7 L389.5 410.8 L390.5 398.2 L391.5 392.3 L392.5 393.6 L393.5 398.5 L394.5 403.3 L395.5 409.5 L396.5 410.1 L397.5 409.1 L398.5 404.2 L399.5 397.9 L400.5 393.4 L401.5 390.4 L402.5 391.6 L403.5 397.3 L404.5 403.7 L405.5 410.3 L406.5 413.2 L407.5 411.6 L408.5 404.4 L409.5 396.9 L410.5 394 L411.5 394.4 L412.5 400.1 L413.5 405.5 L414.5 412 L415.5 414.5 L416.5 414 L417.5 405.7 L418.5 397.3 L419.5 393.6 L420.5 397 L421.5 403 L422.5 408 L423.5 410.2 L424.5 402.1 L425.5 394.1 L426.5 392.1 L427.5 397.1 L428.5 409.1 L429.5 415.4 L430.5 413.5 L431.5 406 L432.5 397.7 L433.5 395.4 L434.5 398.1 L435.5 403.2 L436.5 407.8 L437.5 410.8 L438.5 408.4 L439.5 399.4 L440.5 392.6 L441.5 390.4 L442.5 394.5 L443.5 400.8 L444.5 407.7 L445.5 414.7 L446.5 415.9 L447.5 411.6 L448.5 403.6 L449.5 394.6 L450.5 388.3 L451.5 390.7 L452.5 395.3 L453.5 403.7 L454.5 411.8 L455.5 415.1 L456.5 413.2 L457.5 409.7 L458.5 404.2 L459.5 397.8 L460.5 394.9 L461.5 396.9 L462.5 400.9 L463.5 408 L464.5 411.6 L465.5 413.2 L466.5 410 L467.5 403.5 L468.5 397.6 L469.5 394.1 L470.5 395.9 L471.5 399.9 L472.5 404.7 L473.5 408.3 L474.5 407.4 L475.5 405.4 L476.5 402.6 L477.5 399.8 L478.5 398.3 L479.5 399.1 L480.5 402.8 L481.5 405.7 L482.5 406.4 L483.5 406.6 L484.5 404.4 L485.5 399.2 L486.5 397.7 L487.5 399.8 L488.5 401 L489.5 403.8 L490.5 405.9 L491.5 406.5 L492.5 406.2 L493.5 404.1 L494.5 403 L495.5 400.7 L496.5 398.9 L497.5 401.8 L498.5 404.8 L499.5 406.5 L500.5 407.3 L501.5 404.9 L502.5 402.3 L503.5 400.3 L504.5 401.2 L505.5 405.3 L506.5 408.6 L507.5 408.1 L508.5 406 L509.5 402.4 L510.5 401.2 L511.5 400.6 L512.5 401.7 L513.5 404.2 L514.5 406 L515.5 408.1 L516.5 408 L517.5 405.8 L518.5 402.7 L519.5 400.6 L520.5 401.7 L521.5 402.4 L522.5 404.8 L523.5 406 L524.5 404.5 L525.5 402.7 L526.5 399.8 L527.5 399.8 L528.5 403.3 L529.5 405.2 L530.5 406.7 L531.5 406.1 L532.5 402.8 L533.5 399.8 L534.5 397 L535.5 398.1 L536.5 399.8 L537.5 403.6 L538.5 406.2 L539.5 407.8 L540.5 405.9 L541.5 403.8 L542.5 400.5 L543.5 398.6 L544.5 399.5 L545.5 403.6 L546.5 407.7 L547.5 407.2 L548.5 405.4 L549.5 400.6 L550.5 400.2 L551.5 399.7 L552.5 402.1 L553.5 404.9 L554.5 405.8 L555.5 406.9 L556.5 404.8 L557.5 402.6 L558.5 398.9 L559.5 397.9 L560.5 397.6 L561.5 400.5 L562.5 403 L563.5 406.7 L564.5 408.9 L565.5 406.9 L566.5 402.1 L567.5 399.4 L568.5 399.5 L569.5 401 L570.5 404.2 L571.5 409 L572.5 410.1 L573.5 406.9 L574.5 402.7 L575.5 399.6 L576.5 397.3 L577.5 396.9 L578.5 398.2 L579.5 401.1 L580.5 403.1 L581.5 406 L582.5 407.4 L583.5 403.9 L584.5 399.1 L585.5 398.2 L586.5 398.9 L587.5 401.4 L588.5 404.4 L589.5 406.3 L590.5 407.7 L591.5 406.1 L592.5 404 L593.5 402 L594.5 400.2 L595.5 401.5 L596.5 402.7 L597.5 406.8 L598.5 407.6 L599.5 407.1 L600.5 403.3 L601.5 401.9 L602.5 400.4 L603.5 399 L604.5 398.9 L605.5 401.3 L606.5 402.9 L607.5 405.8 L608.5 405.3 L609.5 405.7 L610.5 402.3 L611.5 400.5 L612.5 401.1 L613.5 403 L614.5 405.9 L615.5 407.3 L616.5 406.4 L617.5 404.4 L618.5 399.7 L619.5 398 L620.5 398.3 L621.5 399.4 L622.5 401.2 L623.5 404.6 L624.5 407.3 L625.5 406 L626.5 402.3 L627.5 399.8 L628.5 400.9 L629.5 400.8 L630.5 401.9 L631.5 405 L632.5 406.5 L633.5 405.9 L634.5 402.7 L635.5 400.8 L636.5 398.5 L637.5 400 L638.5 400 L639.5 402.2 L640.5 403.4 L641.5 405 L642.5 405.6 L643.5 403.5 L644.5 399.8 L645.5 400.8 L646.5 401.5 L647.5 403.8 L648.5 405.2 L649.5 406.5 L650.5 405.1 L651.5 400.6 L652.5 398.3 L653.5 400.3 L654.5 400.8 L655.5 403.8 L656.5 405 L657.5 405.9 L658.5 404.7 L659.5 402.8 L660.5 399.9 L661.5 399.5 L662.5 402.6 L663.5 403.8 L664.5 406.6 L665.5 405.2 L666.5 404 L667.5 401.4 L668.5 401.7 L669.5 400.9 L670.5 402.6 L671.5 403.7 L672.5 406 L673.5 405.9 L674.5 405.5 L675.5 404 L676.5 402.3 L677.5 401.3 L678.5 400.3 L679.5 399.8 L680.5 400.2 L681.5 403.7 L682.5 405.7 L683.5 405 L684.5 404.8 L685.5 401 L686.5 400 L687.5 399.3 L688.5 401.3 L689.5 402.1 L690.5 402.7 L691.5 404.9 L692.5 406.2 L693.5 405.1 L694.5 403.6 L695.5 402.1 L696.5 401.8 L697.5 400.3 L698.5 401.7 L699.5 402.3 L700.5 403.1 L701.5 404.3 L702.5 405.8 L703.5 404.4 L704.5 404.1 L705.5 401.4 L706.5 402.3 L707.5 403.1 L708.5 403.5 L709.5 405.7 L710.5 406.6 L711.5 404.5 L712.5 402.5 L713.5 402.2 L714.5 402.9 L715.5 400.8 L716.5 402.5 L717.5 401.6 L718.5 403.4 L719.5 403.2 L720.5 403.5 L721.5 404.9 L722.5 403.4 L723.5 403.3 L724.5 403.3 L725.5 401.9 L726.5 402.8 L727.5 403 L728.5 402.2 L729.5 404.1 L730.5 405.9 L731.5 405.6 L732.5 403 L733.5 401.5 L734.5 399.8 L735.5 401.4 L736.5 402.2 L737.5 404.3 L738.5 406.5 L739.5 404 L740.5 403.5 L741.5 400.7 L742.5 401.1 L743.5 403 L744.5 405.3 L745.5 404.6 L746.5 403.2 L747.5 399.7 L748.5 399.3 L749.5 400.3 L750.5 403.3 L751.5 406.9 L752.5 406.3 L753.5 403.8 L754.5 400.3 L755.5 400 L756.5 402.4 L757.5 403.1 L758.5 405 L759.5 405.6 L760.5 405.6 L761.5 405.6 L762.5 403 L763.5 401.8 L764.5 401.2 L765.5 401.3 L766.5 402.7 L767.5 403.8 L768.5 403.7 L769.5 405.3 L770.5 405.1 L771.5 403.8 L772.5 402.9 L773.5 402.1 L774.5 402.7 L775.5 402 L776.5 403.4 L777.5 404.5 L778.5 405.3 L779.5 405.1 L780.5 403.7 L781.5 400.4 L782.5 400.6 L783.5 402.1 L784.5 403 L785.5 406.1 L786.5 405.4 L787.5 406.7 L788.5 404.8 L789.5 400.5 L790.5 401.5 L791.5 404.9 L792.5 407.4 L793.5 406.8 L794.5 402.1 L795.5 399.3 L796.5 398.4 L797.5 399.1 L798.5 399.7 L799.5 403.8 L800.5 405.6 L801.5 407.8 L802.5 407.7 L803.5 403.8 L804.5 399.9 L805.5 395.1 L806.5 397 L807.5 399.7 L808.5 403.2 L809.5 406.6 L810.5 409.1 L811.5 406.7 L812.5 405.1 L813.5 402 L814.5 399 L815.5 398.3 L816.5 398.8 L817.5 402.5 L818.5 406.1 L819.5 406.9 L820.5 405 L821.5 403 L822.5 399.9 L823.5 397 L824.5 396.5 L825.5 397.1 L826.5 401.7 L827.5 404.9 L828.5 408.9 L829.5 409.6 L830.5 406.2 L831.5 400.2 L832.5 398 L833.5 401.3 L834.5 404.4 L835.5 407.5 L836.5 408.9 L837.5 408.5 L838.5 405.9 L839.5 404 L840.5 403 L841.5 400.5 L842.5 400.3 L843.5 401.3 L844.5 404.3 L845.5 405.6 L846.5 404.2 L847.5 404.1 L848.5 403.4 L849.5 401.3 L850.5 399.5 L851.5 401.3 L852.5 403.2 L853.5 404.8 L854.5 404.6 L855.5 404.4 L856.5 402.9 L857.5 401.7 L858.5 400 L859.5 401 L860.5 403 L861.5 402.9 L862.5 403.6 L863.5 404.4 L864.5 405.4 L865.5 404.2 L866.5 401.9 L867.5 402 L868.5 401.4 L869.5 402.6 L870.5 403 L871.5 404.4 L872.5 404 L873.5 403.1 L874.5 400.8 L875.5 401.7 L876.5 402.5 L877.5 402.5 L878.5 402.7 L879.5 404.2 L880.5 403.4 L881.5 403.1 L882.5 401.7 L883.5 402.5 L884.5 401.5 L885.5 403.3 L886.5 404.6 L887.5 403.7 L888.5 403.7 L889.5 403.8 L890.5 403.2 L891.5 402.1 L892.5 400.6 L893.5 401.5 L894.5 401.3 L895.5 402.2 L896.5 402.1 L897.5 403.2 L898.5 404.2 L899.5 404.4 L900.5 403.5 L901.5 402.8 L902.5 402.3 L903.5 402.6 L904.5 402 L905.5 404.2 L906.5 404.9 L907.5 404.4 L908.5 404.4 L909.5 402.8 L910.5 401 L911.5 402.1 L912.5 402 L913.5 403.3 L914.5 404.2 L915.5 405 L916.5 404.9 L917.5 402.9 L918.5 402.6 L919.5 401.4 L920.5 401 L921.5 401.7 L922.5 402 L923.5 403.2 L924.5 405.3 L925.5 404.9 L926.5 404.9 L927.5 403.3 L928.5 402 L929.5 400.8 L930.5 402.4 L931.5 403.7 L932.5 404 L933.5 405.2 L934.5 403.6 L935.5 401.9 L936.5 401.1 L937.5 400.3 L938.5 401.9 L939.5 404.2 L940.5 405.8 L941.5 403.4 L942.5 400.9 L943.5 401.2 L944.5 401.3 L945.5 401.6 L946.5 403.8 L947.5 404.8 L948.5 405.5 L949.5 405.4 L950.5 405.4 L951.5 402.7 L952.5 401.2 L953.5 401 L954.5 401.8 L955.5 402.4 L956.5 402.5 L957.5 404.5 L958.5 405.6 L959.5 405.2 L960.5 405.6 L961.5 401.4 L962.5 399.2 L963.5 399.8 L964.5 400.9 L965.5 404 L966.5 405.8 L967.5 406.7 L968.5 405.6 L969.5 402.2 L970.5 399.8 L971.5 400.8 L972.5 402.3 L973.5 403.5 L974.5 404.1 L975.5 405.5 L976.5 404.9 L977.5 405.7 L978.5 404.3 L979.5 403.4 L980.5 402.3 L981.5 401.7 L982.5 401.2 L983.5 402.7 L984.5 402.8 L985.5 404.9 L986.5 404.3 L987.5 402.1 L988.5 400.6 L989.5 400.8 L990.5 401.3 L991.5 402.9 L992.5 403.6 L993.5 404.6 L994.5 405.4 L995.5 403.3 L996.5 402.9 L997.5 401.9 L998.5 401.9 L999.5 402.3 L1000.5 404.4 L1001.5 403.7 L1002.5 404.8 L1003.5 403 L1004.5 402.7 L1005.5 402.4 L1006.5 400.7 L1007.5 402.1 L1008.5 401.3 L1009.5 403.7 L1010.5 403.2 L1011.5 404.3 L1012.5 403.5 L1013.5 403 L1014.5 402.3 L1015.5 402.4 L1016.5 403 L1017.5 403 L1018.5 402.9 L1019.5 404 L1020.5 402.3 L1021.5 402.9 L1022.5 401.4 L1023.5 402 L1024.5 401.8 L1025.5 403.8 L1026.5 405.1 L1027.5 403.9 L1028.5 403.9 L1029.5 402.4 L1030.5 403.3 L1031.5 402.7 L1032.5 402.4 L1033.5 403.6 L1034.5 404.9 L1035.5 403.2 L1036.5 403.4 L1037.5 401.6 L1038.5 401.5 L1039.5 403.6 L1040.5 404.2 L1041.5 404.8 L1042.5 403.2 L1043.5 403.5 L1044.5 401.7 L1045.5 402.1 L1046.5 401.4 L1047.5 404.2 L1048.5 406.1 L1049.5 404.3 L1050.5 402.1 L1051.5 401.8 L1052.5 401.2 L1053.5 400.5 L1054.5 402.5 L1055.5 403.9 L1056.5 404.7 L1057.5 404.4 L1058.5 402.9 L1059.5 402 L1060.5 400 L1061.5 401.2 L1062.5 401 L1063.5 404.2 L1064.5 406.3 L1065.5 405.4 L1066.5 404.4 L1067.5 403.2 L1068.5 401.9 L1069.5 401.6 L1070.5 400.9 L1071.5 401.5 L1072.5 401 L1073.5 403.5 L1074.5 405.7 L1075.5 405.3 L1076.5 404.6 L1077.5 402.3 L1078.5 399.9 L1079.5 399.7 L1080.5 401.3 L1081.5 401.5 L1082.5 401.7 L1083.5 404.1 L1084.5 403.5 L1085.5 405.3 L1086.5 405.9 L1087.5 402.4 L1088.5 401.8 L1089.5 400.6 L1090.5 400.7 L1091.5 403.6 L1092.5 404.5 L1093.5 404.1 L1094.5 404.2 L1095.5 402.3 L1096.5 402.5 L1097.5 400.9 L1098.5 399.8 L1099.5 401.5 L1100.5 401.3 L1101.5 403.6 L1102.5 405.2 L1103.5 405.1 L1104.5 404.8 L1105.5 403.7 L1106.5 403.3 L1107.5 401.8 L1108.5 401.9 L1109.5 400.8 L1110.5 402.1 L1111.5 403.2 L1112.5 404.1 L1113.5 404.4 L1114.5 402.5 L1115.5 402 L1116.5 402.6 L1117.5 401.1 L1118.5 402.5 L1119.5 402.7 L1120.5 403.1 L1121.5 403.6 L1122.5 403.4 L1123.5 405 L1124.5 403.1 L1125.5 403.4 L1126.5 402.7 L1127.5 401.7 L1128.5 402 L1129.5 402.4 L1130.5 403.8 L1131.5 404.5 L1132.5 404.5 L1133.5 404 L1134.5 403 L1135.5 402.1 L1136.5 401.4 L1137.5 402.4 L1138.5 404.3 L1139.5 404.1 L1140.5 405.8 L1141.5 404.6 L1142.5 406.2 L1143.5 404.3 L1144.5 404.1 L1145.5 402.6 L1146.5 402.8 L1147.5 402.4 L1148.5 404 L1149.5 404 L1150.5 404.7 L1151.5 405.4 L1152.5 405.8 L1153.5 404.9 L1154.5 402.4 L1155.5 402.5 L1156.5 401.4 L1157.5 403.5 L1158.5 403.9 L1159.5 406 L1160.5 407.5 L1161.5 407.4 L1162.5 404.6 L1163.5 402.7 L1164.5 402.2 L1165.5 403.6 L1166.5 404.2 L1167.5 407.6 L1168.5 408.7 L1169.5 407.7 L1170.5 405.3 L1171.5 404.2 L1172.5 402.5 L1173.5 402.9 L1174.5 402.9 L1175.5 406.9 L1176.5 407.1 L1177.5 406.2 L1178.5 403.4 L1179.5 403 L1180.5 403.9 L1181.5 404 L1182.5 403.8 L1183.5 405.4 L1184.5 405.2 L1185.5 406 L1186.5 404.9 L1187.5 404.2 L1188.5 404.8 L1189.5 404.2 L1190.5 405 L1191.5 404.9 L1192.5 405.2 L1193.5 405.4 L1194.5 405.6 L1195.5 404.2 L1196.5 403.9 L1197.5 403.4 L1198.5 404.6 L1199.5 405.1 L1200.5 405.7 L1201.5 404.3 L1202.5 404.9 L1203.5 403.6 L1204.5 402.4 L1205.5 403.5 L1206.5 403.4 L1207.5 403.6 L1208.5 403.1 L1209.5 405 L1210.5 406 L1211.5 404.7 L1212.5 403.3 L1213.5 402.2 L1214.5 403.4 L1215.5 404.2 L1216.5 404.6 L1217.5 404.8 L1218.5 404.3 L1219.5 402.8 L1220.5 401.2 L1221.5 402.2 L1222.5 402.7 L1223.5 404.3 L1224.5 403.7 L1225.5 405 L1226.5 404.5 L1227.5 402.4 L1228.5 402.7 L1229.5 401.2 L1230.5 401 L1231.5 402.6 L1232.5 403 L1233.5 404.5 L1234.5 405.9 L1235.5 404.5 L1236.5 403.9 L1237.5 402.1 L1238.5 402.5 L1239.5 402.3 L1240.5 403.3 L1241.5 404.3 L1242.5 405.5 L1243.5 404.9 L1244.5 403 L1245.5 402.3 L1246.5 401.7 L1247.5 400.6 L1248.5 401.8 L1249.5 403.1 L1250.5 404.7 L1251.5 404.3 L1252.5 405 L1253.5 403.3 L1254.5 400.8 L1255.5 401.1 L1256.5 401.4 L1257.5 403.8 L1258.5 404.8 L1259.5 404.3 L1260.5 402.4 L1261.5 401.6 L1262.5 401.9 L1263.5 401.5 L1264.5 402.3 L1265.5 404.2 L1266.5 405.2 L1267.5 405.6 L1268.5 402 L1269.5 399.9 L1270.5 401.6 L1271.5 404 L1272.5 407.2 L1273.5 405.8 L1274.5 405.6 L1275.5 402.4 L1276.5 400.2 L1277.5 400.1 L1278.5 399.6 L1279.5 403 L1280.5 407.4 L1281.5 406.2 L1282.5 404.7 L1283.5 400.5 L1284.5 398.7 L1285.5 399.9 L1286.5 403.3 L1287.5 407.2 L1288.5 406.2 L1289.5 406.3 L1290.5 403.4 L1291.5 402.3 L1292.5 399.3 L1293.5 399.2 L1294.5 400.6 L1295.5 400.2 L1296.5 402.6 L1297.5 403.2 L1298.5 404.4 L1299.5 405 L1300.5 405.3 L1301.5 404.6 L1302.5 403.1 L1303.5 401.6 L1304.5 401.8 L1305.5 400.7 L1306.5 401 L1307.5 401.1 L1308.5 403.4 L1309.5 404.6 L1310.5 407.1 L1311.5 406.3 L1312.5 405.9 L1313.5 402.6 L1314.5 399.6 L1315.5 399.8 L1316.5 401 L1317.5 402.3 L1318.5 403.3 L1319.5 404.4 L1320.5 406.4 L1321.5 404.3 L1322.5 403.8 L1323.5 400.9 L1324.5 399.6 L1325.5 400.4 L1326.5 404.5 L1327.5 407.1 L1328.5 407.1 L1329.5 404 L1330.5 399.3 L1331.5 398.9 L1332.5 399.7 L1333.5 404.6 L1334.5 407.4 L1335.5 405.7 L1336.5 405.3 L1337.5 403.6 L1338.5 400.8 L1339.5 400.7 L1340.5 401 L1341.5 401.5 L1342.5 403.1 L1343.5 405.9 L1344.5 405.4 L1345.5 404.6 L1346.5 402.3 L1347.5 401.6 L1348.5 401.7 L1349.5 403.3 L1350.5 405.2 L1351.5 405 L1352.5 406.4" stroke="#00FF00" stroke-width="1.15" fill="none"/>
<rect x="88.5" y="558.5" width="1264.0" height="237.0" fill="none" stroke="#000" stroke-width="1.2"/>
<path d="M88.5 558.5v7M88.5 795.5v-7M341.5 558.5v7M341.5 795.5v-7M594.5 558.5v7M594.5 795.5v-7M846.5 558.5v7M846.5 795.5v-7M1099.5 558.5v7M1099.5 795.5v-7M1352.5 558.5v7M1352.5 795.5v-7M113.5 558.5v3.5M113.5 795.5v-3.5M139.5 558.5v3.5M139.5 795.5v-3.5M164.5 558.5v3.5M164.5 795.5v-3.5M189.5 558.5v3.5M189.5 795.5v-3.5M214.5 558.5v3.5M214.5 795.5v-3.5M240.5 558.5v3.5M240.5 795.5v-3.5M265.5 558.5v3.5M265.5 795.5v-3.5M290.5 558.5v3.5M290.5 795.5v-3.5M316.5 558.5v3.5M316.5 795.5v-3.5M366.5 558.5v3.5M366.5 795.5v-3.5M391.5 558.5v3.5M391.5 795.5v-3.5M417.5 558.5v3.5M417.5 795.5v-3.5M442.5 558.5v3.5M442.5 795.5v-3.5M467.5 558.5v3.5M467.5 795.5v-3.5M492.5 558.5v3.5M492.5 795.5v-3.5M518.5 558.5v3.5M518.5 795.5v-3.5M543.5 558.5v3.5M543.5 795.5v-3.5M568.5 558.5v3.5M568.5 795.5v-3.5M619.5 558.5v3.5M619.5 795.5v-3.5M644.5 558.5v3.5M644.5 795.5v-3.5M669.5 558.5v3.5M669.5 795.5v-3.5M695.5 558.5v3.5M695.5 795.5v-3.5M720.5 558.5v3.5M720.5 795.5v-3.5M745.5 558.5v3.5M745.5 795.5v-3.5M771.5 558.5v3.5M771.5 795.5v-3.5M796.5 558.5v3.5M796.5 795.5v-3.5M821.5 558.5v3.5M821.5 795.5v-3.5M872.5 558.5v3.5M872.5 795.5v-3.5M897.5 558.5v3.5M897.5 795.5v-3.5M922.5 558.5v3.5M922.5 795.5v-3.5M948.5 558.5v3.5M948.5 795.5v-3.5M973.5 558.5v3.5M973.5 795.5v-3.5M998.5 558.5v3.5M998.5 795.5v-3.5M1023.5 558.5v3.5M1023.5 795.5v-3.5M1049.5 558.5v3.5M1049.5 795.5v-3.5M1074.5 558.5v3.5M1074.5 795.5v-3.5M1124.5 558.5v3.5M1124.5 795.5v-3.5M1150.5 558.5v3.5M1150.5 795.5v-3.5M1175.5 558.5v3.5M1175.5 795.5v-3.5M1200.5 558.5v3.5M1200.5 795.5v-3.5M1226.5 558.5v3.5M1226.5 795.5v-3.5M1251.5 558.5v3.5M1251.5 795.5v-3.5M1276.5 558.5v3.5M1276.5 795.5v-3.5M1301.5 558.5v3.5M1301.5 795.5v-3.5M1327.5 558.5v3.5M1327.5 795.5v-3.5M88.5 558.5h7M1352.5 558.5h-7M88.5 677.5h7M1352.5 677.5h-7M88.5 795.5h7M1352.5 795.5h-7" stroke="#000" stroke-width="1.15" fill="none"/>
<text x="91" y="817" text-anchor="middle">0</text>
<text x="343.8" y="817" text-anchor="middle">1</text>
<text x="596.6" y="817" text-anchor="middle">2</text>
<text x="849.4" y="817" text-anchor="middle">3</text>
<text x="1102.2" y="817" text-anchor="middle">4</text>
<text x="1355" y="817" text-anchor="middle">5</text>
<text x="82.5" y="562.7" text-anchor="end">2e+09</text>
<text x="82.5" y="681.2" text-anchor="end">1e+09</text>
<text x="82.5" y="799.7" text-anchor="end">0</text>
<text x="720.5" y="842" text-anchor="middle" letter-spacing="0.8">distance [m]</text>
<text x="1290" y="579" text-anchor="end">L correlation</text><path d="M1297 573.5h40" stroke="#FF0000" stroke-width="1.1"/>
<text x="1290" y="596" text-anchor="end">R correlation</text><path d="M1297 590.5h40" stroke="#00FF00" stroke-width="1.1"/>
<g clip-path="url(#clip3)"><path d="M88.5 795.2 L89 795.3 L89.5 795.3 L90 795.4 L90.5 795.4 L91 795.4 L91.5 795.3 L92 795.2 L92.5 795.1 L93 795.1 L93.5 795.1 L94 795.2 L94.5 795.4 L95 795.5 L95.5 795.5 L96 795.3 L96.5 795.1 L97 794.9 L97.5 794.8 L98 794.9 L98.5 795.1 L99 795.3 L99.5 795.4 L100 795.5 L100.5 795.2 L101 794.7 L101.5 794.2 L102 793.9 L102.5 794 L103 794.3 L103.5 794.6 L104 794.9 L104.5 795 L105 794.8 L105.5 794.1 L106 793.2 L106.5 792.2 L107 791.3 L107.5 790.6 L108 790.4 L108.5 790.7 L109 791.6 L109.5 792.5 L110 793.1 L110.5 792.9 L111 790.5 L111.5 786.7 L112 783.5 L112.5 782.2 L113 783.7 L113.5 787.3 L114 791 L114.5 792.7 L115 790.6 L115.5 784.5 L116 777.8 L116.5 774.2 L117 775.7 L117.5 781.2 L118 788.3 L118.5 793.8 L119 795.2 L119.5 788.8 L120 776 L120.5 762.6 L121 754.6 L121.5 755.4 L122 763.7 L122.5 776.2 L123 788 L123.5 794.3 L124 791.6 L124.5 778.3 L125 759.3 L125.5 742.2 L126 733.9 L126.5 738.8 L127 756.8 L127.5 777.8 L128 790.1 L128.5 786.2 L129 766.2 L129.5 741.2 L130 725.2 L130.5 726.8 L131 743.6 L131.5 766.1 L132 781.8 L132.5 780.6 L133 756.3 L133.5 721.3 L134 695.1 L134.5 692.8 L135 718.3 L135.5 753.2 L136 771.3 L136.5 758.3 L137 723 L137.5 692 L138 687.5 L138.5 703.9 L139 731.6 L139.5 758.7 L140 773.5 L140.5 768 L141 739.9 L141.5 701 L142 668 L142.5 655.2 L143 676.4 L143.5 724 L144 762.2 L144.5 760.5 L145 710.6 L145.5 648.4 L146 620.8 L146.5 638.6 L147 684 L147.5 736.6 L148 772.9 L148.5 774.4 L149 722.2 L149.5 635 L150 552 L150.5 510.4 L151 529.7 L151.5 600.8 L152 683.9 L152.5 732.7 L153 725.3 L153.5 681.4 L154 626.6 L154.5 591.5 L155 595.1 L155.5 634.3 L156 691.1 L156.5 740.2 L157 759.4 L157.5 742.8 L158 700.4 L158.5 651.2 L159 617.4 L159.5 614.7 L160 650.9 L160.5 709.8 L161 762.8 L161.5 783.9 L162 762.9 L162.5 710.3 L163 651.7 L163.5 615.7 L164 621.5 L164.5 671.5 L165 738.4 L165.5 784.8 L166 781.5 L166.5 711.5 L167 610.6 L167.5 535.2 L168 524.9 L168.5 563.4 L169 631.4 L169.5 704.7 L170 757.4 L170.5 771.1 L171 749.5 L171.5 704.5 L172 651.9 L172.5 610.5 L173 594.8 L173.5 613.7 L174 662.5 L174.5 721 L175 765.2 L175.5 776.7 L176 753.4 L176.5 706.1 L177 654.4 L177.5 619.7 L178 615.3 L178.5 635.6 L179 672.1 L179.5 713.3 L180 746 L180.5 759.8 L181 753.4 L181.5 732.8 L182 704.7 L182.5 678 L183 661.2 L183.5 660.3 L184 682.4 L184.5 720.4 L185 759.2 L185.5 783.4 L186 782.3 L186.5 749.9 L187 698.1 L187.5 647.4 L188 617.9 L188.5 621.7 L189 658.2 L189.5 711.3 L190 757 L190.5 774.9 L191 757.1 L191.5 711.5 L192 658.6 L192.5 622.2 L193 619.4 L193.5 658.3 L194 719.1 L194.5 767.7 L195 777.6 L195.5 752.5 L196 709.7 L196.5 673.1 L197 663.1 L197.5 684.3 L198 724.3 L198.5 760.7 L199 773.3 L199.5 756 L200 719.3 L200.5 683.8 L201 669.3 L201.5 682.6 L202 716.5 L202.5 755.9 L203 783 L203.5 786.5 L204 771.7 L204.5 746.9 L205 723.2 L205.5 711.4 L206 717.2 L206.5 738.9 L207 766 L207.5 785.2 L208 787.4 L208.5 774.5 L209 753.3 L209.5 734.4 L210 726.8 L210.5 733.3 L211 750 L211.5 769.3 L212 782.6 L212.5 784.4 L213 778.3 L213.5 768.1 L214 758.3 L214.5 753.4 L215 755.4 L215.5 763.2 L216 774.2 L216.5 784.9 L217 791.7 L217.5 792.4 L218 787.1 L218.5 777.7 L219 767.3 L219.5 759.2 L220 756.2 L220.5 761.6 L221 774.8 L221.5 788.4 L222 794.8 L222.5 790.3 L223 777.2 L223.5 762.9 L224 755.3 L224.5 757 L225 764.4 L225.5 774.9 L226 785.3 L226.5 792.2 L227 793.4 L227.5 788.9 L228 780 L228.5 769.6 L229 761 L229.5 756.9 L230 759.4 L230.5 768.6 L231 780.2 L231.5 788.8 L232 790.3 L232.5 782.4 L233 768.6 L233.5 756.2 L234 751.8 L234.5 757.4 L235 769.8 L235.5 782.3 L236 788 L236.5 783.5 L237 770.7 L237.5 756.6 L238 748.8 L238.5 751.8 L239 764.4 L239.5 780.1 L240 790.7 L240.5 790.7 L241 781.1 L241.5 765.8 L242 750.8 L242.5 742 L243 743 L243.5 753.5 L244 768.3 L244.5 779.8 L245 782.3 L245.5 773.6 L246 758 L246.5 743.6 L247 738.1 L247.5 743.2 L248 756.1 L248.5 771.4 L249 782.9 L249.5 785.7 L250 776.3 L250.5 758.5 L251 742.2 L251.5 736.3 L252 744.5 L252.5 762.9 L253 781.9 L253.5 791.5 L254 787.9 L254.5 774.9 L255 757.9 L255.5 744.3 L256 739.6 L256.5 747.6 L257 765.4 L257.5 784.1 L258 794 L258.5 789.9 L259 773.1 L259.5 752.8 L260 740.3 L260.5 741.7 L261 754.5 L261.5 771.7 L262 784.4 L262.5 786.3 L263 777 L263.5 761.6 L264 747.5 L264.5 741.7 L265 746.2 L265.5 758.2 L266 773.1 L266.5 784.8 L267 788.9 L267.5 782.9 L268 769.1 L268.5 753.7 L269 743.7 L269.5 744 L270 756.7 L270.5 775.3 L271 789.9 L271.5 793.1 L272 785.6 L272.5 771.4 L273 756.3 L273.5 746.3 L274 745.7 L274.5 756.6 L275 773.9 L275.5 788.6 L276 793.2 L276.5 788.4 L277 778.1 L277.5 766.8 L278 759.2 L278.5 758.7 L279 765.8 L279.5 776.8 L280 786 L280.5 788.6 L281 786.9 L281.5 783.5 L282 779.7 L282.5 777.1 L283 776.9 L283.5 780.6 L284 786.8 L284.5 792.6 L285 795.1 L285.5 793.4 L286 788.8 L286.5 783.9 L287 781.3 L287.5 782.4 L288 785.9 L288.5 790.1 L289 792.8 L289.5 792.6 L290 789.7 L290.5 785.8 L291 782.7 L291.5 782.1 L292 784.3 L292.5 788.2 L293 792.2 L293.5 794.4 L294 793.7 L294.5 790.3 L295 786 L295.5 783 L296 783 L296.5 786.2 L297 790.7 L297.5 794.1 L298 794.6 L298.5 792.2 L299 788.3 L299.5 784.7 L300 782.9 L300.5 783.8 L301 786.8 L301.5 790.6 L302 793.5 L302.5 794.2 L303 791.4 L303.5 785.8 L304 779.7 L304.5 775.6 L305 775.1 L305.5 779.5 L306 786.6 L306.5 792.4 L307 793.5 L307.5 788.6 L308 779.9 L308.5 771.5 L309 767.3 L309.5 769.7 L310 777.4 L310.5 786.4 L311 791.9 L311.5 790.9 L312 783.1 L312.5 772.2 L313 763 L313.5 759.8 L314 763.5 L314.5 771.9 L315 780.9 L315.5 786.1 L316 784.7 L316.5 777.3 L317 766.6 L317.5 756.8 L318 751.9 L318.5 754 L319 763.1 L319.5 775.3 L320 785.1 L320.5 788.5 L321 782 L321.5 768 L322 754 L322.5 747.6 L323 751.8 L323.5 763.7 L324 776.6 L324.5 783.1 L325 779.8 L325.5 768.5 L326 754.1 L326.5 742.9 L327 739.7 L327.5 748.4 L328 765.4 L328.5 781 L329 786.4 L329.5 779.7 L330 764.8 L330.5 748.7 L331 739 L331.5 740.2 L332 751.1 L332.5 766.1 L333 777.9 L333.5 780.3 L334 771.4 L334.5 755.9 L335 742.4 L335.5 738.2 L336 744.3 L336.5 757.2 L337 771.3 L337.5 780.7 L338 781.2 L338.5 772.8 L339 759.1 L339.5 745.9 L340 738.9 L340.5 741.1 L341 751.4 L341.5 765.7 L342 777.8 L342.5 782.7 L343 778 L343.5 765.5 L344 751.4 L344.5 742.7 L345 743.4 L345.5 752.2 L346 765.3 L346.5 777.4 L347 783.8 L347.5 781.4 L348 770.9 L348.5 757.3 L349 747.1 L349.5 745.2 L350 752.3 L350.5 765.3 L351 778.9 L351.5 787.6 L352 787.9 L352.5 780.8 L353 769.8 L353.5 759.6 L354 754.9 L354.5 757.9 L355 767.4 L355.5 779.2 L356 787.8 L356.5 789.5 L357 783.8 L357.5 774 L358 765.6 L358.5 763.1 L359 766.5 L359.5 773.7 L360 781.9 L360.5 787.8 L361 789.2 L361.5 785.8 L362 779.1 L362.5 772.1 L363 767.7 L363.5 767.8 L364 772.6 L364.5 779.9 L365 786.8 L365.5 790.1 L366 787.1 L366.5 776.5 L367 763.2 L367.5 753.8 L368 752.6 L368.5 760.4 L369 772.9 L369.5 783.3 L370 785.6 L370.5 774.8 L371 755.3 L371.5 738.2 L372 733.1 L372.5 742.1 L373 760.4 L373.5 779.3 L374 790.1 L374.5 786.3 L375 765.7 L375.5 736.9 L376 712.6 L376.5 703.2 L377 710.7 L377.5 729.6 L378 751.5 L378.5 766.6 L379 767.3 L379.5 747.1 L380 714.6 L380.5 686.7 L381 677.7 L381.5 691.7 L382 721.4 L382.5 751.7 L383 767.3 L383.5 755.7 L384 714 L384.5 663.8 L385 631.5 L385.5 632.3 L386 658.9 L386.5 699.5 L387 737.8 L387.5 758.3 L388 746.9 L388.5 692.6 L389 620.3 L389.5 564.7 L390 552.3 L390.5 589.7 L391 658.2 L391.5 723.7 L392 753.4 L392.5 733.5 L393 676.3 L393.5 611.8 L394 574.2 L394.5 580.2 L395 619 L395.5 673.7 L396 721.6 L396.5 742.6 L397 729.8 L397.5 691 L398 642.1 L398.5 602.8 L399 589.2 L399.5 613.6 L400 670.2 L400.5 733.5 L401 774.6 L401.5 775.8 L402 741.9 L402.5 692.1 L403 653.3 L403.5 645.9 L404 666.5 L404.5 703.9 L405 742.7 L405.5 766.9 L406 767.9 L406.5 752.8 L407 729.4 L407.5 707.8 L408 697.3 L408.5 705.4 L409 733.2 L409.5 766.8 L410 788.9 L410.5 789.3 L411 773.3 L411.5 749.2 L412 728.6 L412.5 721.4 L413 731.2 L413.5 753 L414 775.6 L414.5 787 L415 781.4 L415.5 761.7 L416 736.6 L416.5 717.4 L417 712.5 L417.5 723.7 L418 745 L418.5 765.8 L419 775.6 L419.5 770.2 L420 752.8 L420.5 730.3 L421 711.5 L421.5 703.7 L422 715 L422.5 745.3 L423 777.7 L423.5 794.3 L424 788.6 L424.5 767.7 L425 740.2 L425.5 717.3 L426 708.4 L426.5 716.3 L427 736.7 L427.5 760.8 L428 778.1 L428.5 781.1 L429 766.8 L429.5 741.7 L430 718.5 L430.5 708.9 L431 720.3 L431.5 749.1 L432 778.9 L432.5 792.9 L433 787.9 L433.5 773.2 L434 755.7 L434.5 743.9 L435 743.1 L435.5 752.6 L436 768 L436.5 783.1 L437 791.6 L437.5 789.8 L438 778.3 L438.5 763.2 L439 752.7 L439.5 752.1 L440 760.2 L440.5 772.9 L441 784.5 L441.5 790 L442 786.1 L442.5 773.3 L443 757.4 L443.5 745.3 L444 742.5 L444.5 748.4 L445 759.9 L445.5 772.1 L446 780 L446.5 780.1 L447 771.3 L447.5 757.2 L448 744 L448.5 737.4 L449 741.5 L449.5 756.5 L450 775.4 L450.5 789.3 L451 791.3 L451.5 776 L452 750.8 L452.5 729.9 L453 725.1 L453.5 735.9 L454 756.4 L454.5 777.6 L455 790.5 L455.5 788.9 L456 771.3 L456.5 746.5 L457 727 L457.5 722.8 L458 733.2 L458.5 752.5 L459 772.4 L459.5 784.2 L460 782.8 L460.5 768.8 L461 748.3 L461.5 730.6 L462 723.7 L462.5 730.8 L463 748.7 L463.5 768.7 L464 781.1 L464.5 780.8 L465 772.4 L465.5 759.7 L466 747.9 L466.5 741.6 L467 743.6 L467.5 753.4 L468 766.9 L468.5 778.9 L469 784.6 L469.5 780.2 L470 765.4 L470.5 748.2 L471 738 L471.5 739.5 L472 750 L472.5 764.6 L473 776.8 L473.5 781.2 L474 774.7 L474.5 759.6 L475 743.4 L475.5 733.9 L476 735.5 L476.5 746.2 L477 761.6 L477.5 775.4 L478 782 L478.5 778.7 L479 767 L479.5 751.4 L480 738.2 L480.5 732.6 L481 738.3 L481.5 754.5 L482 774.3 L482.5 788.7 L483 791.5 L483.5 781.3 L484 762.3 L484.5 742.9 L485 731.3 L485.5 732.3 L486 744.4 L486.5 762.2 L487 777.7 L487.5 784.1 L488 778.4 L488.5 763.6 L489 747.2 L489.5 738.1 L490 739.9 L490.5 749.9 L491 763.9 L491.5 776.5 L492 782.7 L492.5 780.3 L493 771.1 L493.5 759.2 L494 750.2 L494.5 748.3 L495 755.3 L495.5 768.1 L496 780.4 L496.5 785.9 L497 784 L497.5 778.4 L498 771.4 L498.5 765.9 L499 764.1 L499.5 768.7 L500 778.7 L500.5 788.4 L501 792.6 L501.5 790.6 L502 785.4 L502.5 779.2 L503 775.1 L503.5 774.8 L504 779.2 L504.5 786.2 L505 792.6 L505.5 795.4 L506 794.2 L506.5 790.9 L507 786.9 L507.5 783.8 L508 782.9 L508.5 784.5 L509 788.1 L509.5 792 L510 794.6 L510.5 795 L511 793.8 L511.5 791.8 L512 790 L512.5 789.4 L513 790.2 L513.5 792.3 L514 794.3 L514.5 795.3 L515 795.2 L515.5 794.5 L516 793.6 L516.5 793 L517 792.9 L517.5 793.3 L518 793.8 L518.5 794.4 L519 794.8 L519.5 794.7 L520 793.7 L520.5 792.3 L521 790.8 L521.5 790.1 L522 790.2 L522.5 791.3 L523 793 L523.5 794.5 L524 795.3 L524.5 794.7 L525 792.1 L525.5 788.9 L526 786.7 L526.5 786.6 L527 788.2 L527.5 790.7 L528 792.8 L528.5 793.4 L529 791.9 L529.5 788.8 L530 785.4 L530.5 783.3 L531 783.4 L531.5 785.5 L532 788.8 L532.5 791.8 L533 793.4 L533.5 792.6 L534 789 L534.5 784.3 L535 781 L535.5 780.7 L536 782.7 L536.5 786.1 L537 789.5 L537.5 791.5 L538 791 L538.5 787.1 L539 781.8 L539.5 777.9 L540 777.3 L540.5 780 L541 784.6 L541.5 789.5 L542 792.6 L542.5 792.8 L543 789.9 L543.5 785.2 L544 780.9 L544.5 778.9 L545 780.2 L545.5 784.2 L546 789.1 L546.5 792.6 L547 793.2 L547.5 790.8 L548 786.5 L548.5 782.4 L549 780.2 L549.5 780.8 L550 783.8 L550.5 788 L551 791.7 L551.5 793.4 L552 792.4 L552.5 788.6 L553 784.1 L553.5 780.9 L554 780.6 L554.5 783.2 L555 787.6 L555.5 791.7 L556 793.7 L556.5 792.8 L557 789.9 L557.5 786.2 L558 783.4 L558.5 782.7 L559 784.5 L559.5 788.1 L560 791.9 L560.5 794.1 L561 793.8 L561.5 791.9 L562 789 L562.5 786.3 L563 784.9 L563.5 785.6 L564 788.3 L564.5 791.7 L565 794.1 L565.5 794.3 L566 792.9 L566.5 790.8 L567 789.2 L567.5 788.8 L568 789.7 L568.5 791.3 L569 793.1 L569.5 794.2 L570 794.2 L570.5 793.4 L571 792.1 L571.5 791 L572 790.6 L572.5 791.1 L573 792.5 L573.5 793.9 L574 794.7 L574.5 794.4 L575 793.4 L575.5 792.1 L576 791 L576.5 790.5 L577 790.9 L577.5 792.2 L578 793.9 L578.5 795.1 L579 795.4 L579.5 794.6 L580 792.8 L580.5 791.1 L581 790.3 L581.5 790.8 L582 792 L582.5 793.6 L583 794.8 L583.5 795 L584 794.1 L584.5 792.4 L585 790.7 L585.5 790 L586 790.5 L586.5 791.9 L587 793.5 L587.5 794.4 L588 794.1 L588.5 792.7 L589 791 L589.5 790 L590 790.1 L590.5 791.5 L591 793.4 L591.5 794.9 L592 795.1 L592.5 794.1 L593 792.4 L593.5 790.6 L594 789.7 L594.5 790.1 L595 791.6 L595.5 793.4 L596 794.6 L596.5 794.8 L597 793.7 L597.5 792 L598 790.4 L598.5 789.7 L599 790.2 L599.5 791.7 L600 793.4 L600.5 794.4 L601 794.3 L601.5 793.1 L602 791.4 L602.5 790 L603 789.5 L603.5 790 L604 791.4 L604.5 793 L605 794.2 L605.5 794.5 L606 793.8 L606.5 792.4 L607 790.8 L607.5 789.8 L608 789.7 L608.5 790.5 L609 792 L609.5 793.4 L610 794.2 L610.5 794 L611 793 L611.5 791.5 L612 790.2 L612.5 789.6 L613 789.9 L613.5 791.2 L614 792.8 L614.5 793.9 L615 793.9 L615.5 792.8 L616 791 L616.5 789.6 L617 789.3 L617.5 790.2 L618 791.9 L618.5 793.8 L619 795 L619.5 795.2 L620 793.9 L620.5 791.8 L621 790 L621.5 789.4 L622 790.3 L622.5 792.3 L623 794.3 L623.5 795.3 L624 794.9 L624.5 793.5 L625 791.6 L625.5 790.1 L626 789.5 L626.5 790.1 L627 791.7 L627.5 793.6 L628 795 L628.5 795.3 L629 794.2 L629.5 792.2 L630 790.3 L630.5 789.4 L631 790 L631.5 791.9 L632 794 L632.5 795.2 L633 794.8 L633.5 793.3 L634 791.3 L634.5 789.8 L635 789.3 L635.5 790 L636 791.7 L636.5 793.5 L637 794.9 L637.5 795.3 L638 794.3 L638.5 792.4 L639 790.5 L639.5 789.4 L640 789.7 L640.5 790.9 L641 792.7 L641.5 794 L642 794.4 L642.5 793.6 L643 791.9 L643.5 790.3 L644 789.7 L644.5 790.4 L645 792.3 L645.5 794.4 L646 795.4 L646.5 795 L647 793.4 L647.5 791.3 L648 789.8 L648.5 789.5 L649 790.5 L649.5 792.4 L650 794.2 L650.5 795.2 L651 794.9 L651.5 793.2 L652 791.2 L652.5 789.8 L653 789.7 L653.5 790.6 L654 791.9 L654.5 793.2 L655 793.9 L655.5 793.8 L656 792.8 L656.5 791.4 L657 790.2 L657.5 789.7 L658 790.1 L658.5 791.4 L659 793 L659.5 794 L660 793.7 L660.5 792.5 L661 790.9 L661.5 789.7 L662 789.4 L662.5 790.4 L663 792.2 L663.5 794 L664 794.8 L664.5 794.3 L665 792.8 L665.5 791 L666 789.7 L666.5 789.6 L667 790.7 L667.5 792.7 L668 794.5 L668.5 795.5 L669 795.1 L669.5 793.5 L670 791.5 L670.5 789.8 L671 789.3 L671.5 790.2 L672 792.1 L672.5 793.9 L673 794.8 L673.5 794.3 L674 792.9 L674.5 791.2 L675 789.9 L675.5 789.5 L676 790.6 L676.5 792.5 L677 794.4 L677.5 795.2 L678 794.6 L678.5 793 L679 791.1 L679.5 789.9 L680 789.8 L680.5 790.6 L681 791.9 L681.5 793.2 L682 793.9 L682.5 793.7 L683 792.1 L683.5 789.8 L684 787.7 L684.5 786.8 L685 787.5 L685.5 789.6 L686 792.2 L686.5 794 L687 794.4 L687.5 792.6 L688 789.4 L688.5 786.2 L689 784.4 L689.5 784.8 L690 786.6 L690.5 789.3 L691 791.7 L691.5 792.9 L692 792.2 L692.5 789.4 L693 785.9 L693.5 783.6 L694 783.5 L694.5 785.5 L695 788.6 L695.5 791.6 L696 793.1 L696.5 792.6 L697 790.5 L697.5 787.6 L698 785.2 L698.5 784.2 L699 785.1 L699.5 787.4 L700 790.2 L700.5 792.3 L701 793 L701.5 791.8 L702 789.4 L702.5 786.6 L703 784.8 L703.5 784.7 L704 786.6 L704.5 789.7 L705 792.7 L705.5 794.3 L706 793.9 L706.5 791.9 L707 789.1 L707.5 786.7 L708 785.8 L708.5 786.9 L709 789.6 L709.5 792.5 L710 794.2 L710.5 793.8 L711 791.5 L711.5 788.5 L712 786.6 L712.5 786.7 L713 788.4 L713.5 791 L714 793.2 L714.5 794.1 L715 793.2 L715.5 790.9 L716 788.3 L716.5 786.9 L717 787.3 L717.5 789.2 L718 791.8 L718.5 794 L719 794.8 L719.5 794 L720 792 L720.5 789.8 L721 788.3 L721.5 788.2 L722 789.6 L722.5 791.8 L723 793.9 L723.5 794.8 L724 794.4 L724.5 793 L725 791.2 L725.5 789.6 L726 789 L726.5 789.5 L727 791 L727.5 792.7 L728 794 L728.5 794.3 L729 793.7 L729.5 792.5 L730 791.3 L730.5 790.4 L731 790.3 L731.5 791 L732 792.4 L732.5 793.8 L733 794.5 L733.5 794.3 L734 793.3 L734.5 791.9 L735 791 L735.5 791 L736 792.1 L736.5 793.7 L737 795 L737.5 795.2 L738 794.5 L738.5 793.3 L739 792.1 L739.5 791.6 L740 792 L740.5 792.9 L741 793.9 L741.5 794.5 L742 794.4 L742.5 793.5 L743 792.4 L743.5 791.4 L744 791.1 L744.5 791.6 L745 792.6 L745.5 793.7 L746 794.6 L746.5 794.8 L747 794.2 L747.5 793 L748 791.6 L748.5 790.7 L749 790.5 L749.5 791.3 L750 792.7 L750.5 794.3 L751 795.3 L751.5 795.2 L752 794 L752.5 792.2 L753 790.5 L753.5 789.8 L754 790.3 L754.5 791.7 L755 793.3 L755.5 794.1 L756 793.7 L756.5 792.2 L757 790.5 L757.5 789.4 L758 789.6 L758.5 791 L759 793 L759.5 794.4 L760 794.6 L760.5 793.4 L761 791.5 L761.5 789.7 L762 788.9 L762.5 789.2 L763 790.6 L763.5 792.5 L764 794 L764.5 794.7 L765 794 L765.5 792.1 L766 789.8 L766.5 788.2 L767 788 L767.5 789.5 L768 791.9 L768.5 794.1 L769 794.9 L769.5 794 L770 791.8 L770.5 789.3 L771 787.5 L771.5 787.3 L772 788.7 L772.5 791.1 L773 793.2 L773.5 793.9 L774 792.9 L774.5 790.6 L775 788.1 L775.5 786.8 L776 787.4 L776.5 789.9 L777 793 L777.5 795.1 L778 795.1 L778.5 792.7 L779 789.1 L779.5 786.2 L780 785.6 L780.5 787 L781 789.5 L781.5 791.9 L782 793 L782.5 792.3 L783 789.9 L783.5 787 L784 784.7 L784.5 784 L785 785.1 L785.5 787.4 L786 790 L786.5 791.8 L787 792.3 L787.5 790 L788 786 L788.5 782.3 L789 781.1 L789.5 782.9 L790 786.9 L790.5 791.1 L791 793.5 L791.5 793 L792 790 L792.5 785.7 L793 781.7 L793.5 779.6 L794 780.3 L794.5 783.4 L795 787.4 L795.5 790.5 L796 791.3 L796.5 789.1 L797 784.8 L797.5 780.3 L798 777.5 L798.5 777.5 L799 780.2 L799.5 784.5 L800 788.7 L800.5 791.2 L801 790.7 L801.5 787.1 L802 781.8 L802.5 777.2 L803 775.4 L803.5 777.3 L804 782.4 L804.5 788.2 L805 792.2 L805.5 792.6 L806 788.5 L806.5 782 L807 776.5 L807.5 774.8 L808 777.8 L808.5 784.1 L809 790.7 L809.5 794.5 L810 793.9 L810.5 789.3 L811 782.8 L811.5 777.6 L812 776.1 L812.5 779.1 L813 784.9 L813.5 790.8 L814 794.1 L814.5 793.3 L815 789.4 L815.5 784.1 L816 779.9 L816.5 778.7 L817 780.7 L817.5 784.9 L818 789.6 L818.5 792.8 L819 793.1 L819.5 791 L820 787.2 L820.5 783.3 L821 780.9 L821.5 780.8 L822 783.5 L822.5 788 L823 792.3 L823.5 794.6 L824 793.8 L824.5 790.2 L825 785.9 L825.5 783.1 L826 783.2 L826.5 785.5 L827 789 L827.5 792.2 L828 793.7 L828.5 793 L829 790.7 L829.5 787.9 L830 786 L830.5 785.9 L831 787.6 L831.5 790.3 L832 792.8 L832.5 794 L833 793.5 L833.5 791.4 L834 788.6 L834.5 786.5 L835 785.9 L835.5 787.3 L836 790 L836.5 792.9 L837 794.8 L837.5 794.8 L838 792.6 L838.5 789.4 L839 786.8 L839.5 786.1 L840 787.1 L840.5 789.2 L841 791.5 L841.5 793.2 L842 793.4 L842.5 791.9 L843 789.5 L843.5 787.6 L844 787.1 L844.5 788.5 L845 791.1 L845.5 793.5 L846 794.6 L846.5 793.5 L847 790.4 L847.5 786.8 L848 784.3 L848.5 783.9 L849 786.1 L849.5 789.8 L850 793.4 L850.5 795.2 L851 793.6 L851.5 788.3 L852 781.9 L852.5 778.2 L853 778.7 L853.5 782.2 L854 787.1 L854.5 791 L855 792.2 L855.5 789.2 L856 782.9 L856.5 776.4 L857 772.9 L857.5 774.3 L858 780.2 L858.5 787.7 L859 792.7 L859.5 792.7 L860 787.9 L860.5 780.3 L861 773.2 L861.5 769.7 L862 771.8 L862.5 779.5 L863 788.8 L863.5 794.3 L864 793.4 L864.5 787.5 L865 779 L865.5 771.5 L866 768.2 L866.5 770.4 L867 777 L867.5 785.4 L868 792 L868.5 793.9 L869 789.7 L869.5 781.2 L870 772.3 L870.5 767.4 L871 768.5 L871.5 774.4 L872 782.7 L872.5 789.8 L873 792.8 L873.5 790.2 L874 782.9 L874.5 774 L875 767.6 L875.5 766.5 L876 771.4 L876.5 780.1 L877 788.1 L877.5 791.6 L878 789.2 L878.5 782.7 L879 774.8 L879.5 768.9 L880 767.6 L880.5 772 L881 780.4 L881.5 788.6 L882 792.8 L882.5 790.8 L883 783.2 L883.5 774.3 L884 768.9 L884.5 770.2 L885 777.8 L885.5 787.6 L886 794.2 L886.5 794.2 L887 789 L887.5 781.3 L888 774.6 L888.5 771.9 L889 774.2 L889.5 780.3 L890 787.5 L890.5 792.7 L891 793.7 L891.5 790.8 L892 785.5 L892.5 780.1 L893 776.9 L893.5 777.3 L894 781.4 L894.5 787.1 L895 791.5 L895.5 792.3 L896 789.5 L896.5 784.9 L897 781 L897.5 779.9 L898 781.9 L898.5 785.8 L899 790 L899.5 792.7 L900 792.7 L900.5 790.5 L901 787.3 L901.5 784.6 L902 783.9 L902.5 785.6 L903 788.8 L903.5 792 L904 793.7 L904.5 793.2 L905 791.4 L905.5 789.3 L906 787.9 L906.5 787.8 L907 789.1 L907.5 791.3 L908 793.3 L908.5 794.4 L909 794.1 L909.5 792.8 L910 791 L910.5 789.5 L911 788.8 L911.5 789.3 L912 790.8 L912.5 792.7 L913 794.3 L913.5 794.9 L914 794.4 L914.5 793.2 L915 791.8 L915.5 790.8 L916 790.6 L916.5 791.4 L917 792.9 L917.5 794.4 L918 795 L918.5 794.8 L919 793.9 L919.5 792.7 L920 791.8 L920.5 791.5 L921 791.9 L921.5 793.1 L922 794.4 L922.5 795.1 L923 794.9 L923.5 793.8 L924 792.5 L924.5 791.5 L925 791.4 L925.5 792.1 L926 793.4 L926.5 794.6 L927 795.1 L927.5 794.6 L928 793.2 L928.5 791.8 L929 790.9 L929.5 791.1 L930 792 L930.5 793.3 L931 794.4 L931.5 794.8 L932 794.4 L932.5 793.3 L933 791.9 L933.5 790.8 L934 790.5 L934.5 791.2 L935 792.6 L935.5 793.9 L936 794.5 L936.5 794.1 L937 793 L937.5 791.7 L938 790.6 L938.5 790.3 L939 791 L939.5 792.6 L940 794.2 L940.5 794.8 L941 794.2 L941.5 792.7 L942 791 L942.5 789.9 L943 789.9 L943.5 790.8 L944 792.2 L944.5 793.6 L945 794.4 L945.5 794.3 L946 793.3 L946.5 791.7 L947 790.3 L947.5 789.6 L948 789.9 L948.5 791.2 L949 792.7 L949.5 793.9 L950 794.2 L950.5 793.2 L951 791.3 L951.5 789.7 L952 789.2 L952.5 789.8 L953 791.2 L953.5 792.7 L954 793.8 L954.5 793.8 L955 792.5 L955.5 790.5 L956 788.9 L956.5 788.6 L957 789.8 L957.5 791.8 L958 793.5 L958.5 794.1 L959 793.4 L959.5 791.7 L960 789.8 L960.5 788.6 L961 788.6 L961.5 789.9 L962 792 L962.5 793.6 L963 794.1 L963.5 793.1 L964 791.2 L964.5 789.3 L965 788.3 L965.5 788.7 L966 790.4 L966.5 792.7 L967 794.5 L967.5 794.8 L968 793.8 L968.5 792 L969 790 L969.5 788.7 L970 788.5 L970.5 789.7 L971 791.8 L971.5 793.7 L972 794.5 L972.5 794 L973 792.4 L973.5 790.5 L974 788.9 L974.5 788.5 L975 789.4 L975.5 791.2 L976 793.1 L976.5 794.5 L977 794.7 L977.5 793.7 L978 791.9 L978.5 790 L979 788.8 L979.5 788.8 L980 789.9 L980.5 791.6 L981 793.2 L981.5 794.1 L982 793.8 L982.5 792.6 L983 790.8 L983.5 789.3 L984 788.7 L984.5 789.1 L985 790.5 L985.5 792.4 L986 793.8 L986.5 794.4 L987 793.8 L987.5 792.2 L988 790.3 L988.5 789 L989 789 L989.5 790.2 L990 792 L990.5 793.8 L991 794.7 L991.5 794.5 L992 793 L992.5 791.1 L993 789.6 L993.5 789.3 L994 790 L994.5 791.4 L995 792.9 L995.5 793.8 L996 793.7 L996.5 792.6 L997 791 L997.5 789.7 L998 789.4 L998.5 790.3 L999 792.2 L999.5 794 L1000 794.8 L1000.5 794.2 L1001 792.4 L1001.5 790.4 L1002 789.2 L1002.5 789.4 L1003 791.1 L1003.5 793.3 L1004 794.8 L1004.5 794.8 L1005 793.3 L1005.5 791.2 L1006 789.6 L1006.5 789.4 L1007 790.4 L1007.5 792.2 L1008 794.1 L1008.5 795.1 L1009 794.9 L1009.5 793.1 L1010 790.7 L1010.5 789.1 L1011 789 L1011.5 790 L1012 791.6 L1012.5 792.9 L1013 793.5 L1013.5 792.5 L1014 789.8 L1014.5 786.9 L1015 785.4 L1015.5 786.3 L1016 789.2 L1016.5 792.6 L1017 794.7 L1017.5 794.2 L1018 790.7 L1018.5 786.1 L1019 782.7 L1019.5 782.3 L1020 784.7 L1020.5 788.7 L1021 792.6 L1021.5 794.6 L1022 793.4 L1022.5 789 L1023 783.6 L1023.5 780.1 L1024 780.3 L1024.5 783.5 L1025 788.1 L1025.5 791.5 L1026 791.9 L1026.5 788.6 L1027 783.3 L1027.5 778.5 L1028 776.7 L1028.5 778.5 L1029 783 L1029.5 788.3 L1030 792.1 L1030.5 792.9 L1031 789.9 L1031.5 784.3 L1032 779 L1032.5 776.8 L1033 778.4 L1033.5 782.9 L1034 788.3 L1034.5 792.6 L1035 794 L1035.5 792.2 L1036 788 L1036.5 783.4 L1037 780.5 L1037.5 780.7 L1038 784.1 L1038.5 789 L1039 793.2 L1039.5 794.7 L1040 793 L1040.5 789 L1041 785 L1041.5 783.4 L1042 784.5 L1042.5 787.4 L1043 791.1 L1043.5 793.8 L1044 794.5 L1044.5 793.3 L1045 790.9 L1045.5 788.4 L1046 787 L1046.5 787.3 L1047 789 L1047.5 791.3 L1048 793 L1048.5 793.2 L1049 792 L1049.5 790 L1050 788 L1050.5 786.9 L1051 787.5 L1051.5 789.8 L1052 792.6 L1052.5 794.3 L1053 794 L1053.5 791.9 L1054 789 L1054.5 786.9 L1055 786.4 L1055.5 787.7 L1056 790.1 L1056.5 792.5 L1057 794 L1057.5 793.7 L1058 791.7 L1058.5 789 L1059 787 L1059.5 786.8 L1060 788.6 L1060.5 791.5 L1061 794 L1061.5 794.9 L1062 793.9 L1062.5 791.5 L1063 788.8 L1063.5 786.7 L1064 786.3 L1064.5 787.4 L1065 789.5 L1065.5 791.7 L1066 793 L1066.5 792.8 L1067 790.9 L1067.5 788.4 L1068 786.5 L1068.5 786.1 L1069 787.8 L1069.5 790.5 L1070 792.9 L1070.5 793.6 L1071 792.2 L1071.5 789.3 L1072 786.6 L1072.5 785.7 L1073 786.6 L1073.5 788.8 L1074 791.2 L1074.5 793 L1075 793.4 L1075.5 791.8 L1076 789.1 L1076.5 786.6 L1077 785.9 L1077.5 787.2 L1078 790 L1078.5 793 L1079 794.9 L1079.5 795 L1080 792.9 L1080.5 789.7 L1081 786.8 L1081.5 785.6 L1082 786.4 L1082.5 788.5 L1083 791.2 L1083.5 793.3 L1084 794 L1084.5 793 L1085 790.8 L1085.5 788.1 L1086 786.2 L1086.5 785.7 L1087 787.1 L1087.5 789.6 L1088 792.4 L1088.5 794.2 L1089 794.2 L1089.5 792.6 L1090 790 L1090.5 787.4 L1091 785.9 L1091.5 786.2 L1092 788.1 L1092.5 791 L1093 793.7 L1093.5 794.9 L1094 794.2 L1094.5 791.7 L1095 788.5 L1095.5 786.1 L1096 785.6 L1096.5 787.2 L1097 790 L1097.5 792.5 L1098 793.4 L1098.5 792.2 L1099 789.7 L1099.5 787.1 L1100 785.7 L1100.5 786.4 L1101 789.1 L1101.5 792.5 L1102 794.5 L1102.5 794.3 L1103 792 L1103.5 788.7 L1104 786.1 L1104.5 785.4 L1105 786.7 L1105.5 789.5 L1106 792.3 L1106.5 793.7 L1107 793 L1107.5 790.5 L1108 787.6 L1108.5 785.7 L1109 786 L1109.5 787.8 L1110 790.4 L1110.5 792.4 L1111 793 L1111.5 791.9 L1112 789.8 L1112.5 787.4 L1113 785.7 L1113.5 785.6 L1114 787.8 L1114.5 791.2 L1115 793.9 L1115.5 794.4 L1116 792.9 L1116.5 790.2 L1117 787.4 L1117.5 785.8 L1118 786.1 L1118.5 788.2 L1119 791.1 L1119.5 793.5 L1120 794.3 L1120.5 792.8 L1121 789.6 L1121.5 786.4 L1122 785.2 L1122.5 786.2 L1123 788.9 L1123.5 792 L1124 794.4 L1124.5 794.9 L1125 793.4 L1125.5 790.5 L1126 787.5 L1126.5 785.8 L1127 786.1 L1127.5 788.3 L1128 791.2 L1128.5 793.5 L1129 794 L1129.5 792.5 L1130 789.6 L1130.5 786.8 L1131 785.6 L1131.5 786.5 L1132 788.9 L1132.5 791.8 L1133 793.6 L1133.5 793.5 L1134 791.5 L1134.5 788.6 L1135 786.3 L1135.5 785.8 L1136 787.2 L1136.5 789.9 L1137 792.7 L1137.5 794.5 L1138 794.4 L1138.5 792.6 L1139 789.8 L1139.5 787.2 L1140 785.7 L1140.5 786 L1141 788.1 L1141.5 791 L1142 793.7 L1142.5 794.8 L1143 794.1 L1143.5 792.4 L1144 790.3 L1144.5 788.6 L1145 788.1 L1145.5 789.4 L1146 791.9 L1146.5 794.3 L1147 795.3 L1147.5 794.8 L1148 793.2 L1148.5 791.3 L1149 790 L1149.5 789.8 L1150 790.9 L1150.5 792.7 L1151 794.4 L1151.5 795 L1152 794.6 L1152.5 793.6 L1153 792.4 L1153.5 791.6 L1154 791.5 L1154.5 792.3 L1155 793.7 L1155.5 794.9 L1156 795.3 L1156.5 794.9 L1157 794 L1157.5 793.2 L1158 792.9 L1158.5 793.2 L1159 794 L1159.5 794.8 L1160 795.4 L1160.5 795.4 L1161 794.9 L1161.5 794.2 L1162 793.6 L1162.5 793.2 L1163 793.3 L1163.5 793.8 L1164 794.4 L1164.5 794.9 L1165 795.1 L1165.5 794.7 L1166 794.1 L1166.5 793.3 L1167 792.8 L1167.5 792.8 L1168 793.3 L1168.5 794.2 L1169 795 L1169.5 795.3 L1170 794.9 L1170.5 794.1 L1171 793.1 L1171.5 792.6 L1172 792.6 L1172.5 793.2 L1173 794.1 L1173.5 794.7 L1174 794.9 L1174.5 794.5 L1175 793.7 L1175.5 792.8 L1176 792.1 L1176.5 792 L1177 792.5 L1177.5 793.4 L1178 794.3 L1178.5 794.9 L1179 794.7 L1179.5 793.8 L1180 792.6 L1180.5 791.8 L1181 791.8 L1181.5 792.6 L1182 793.7 L1182.5 794.6 L1183 794.8 L1183.5 794.1 L1184 792.9 L1184.5 791.7 L1185 791.3 L1185.5 791.7 L1186 792.7 L1186.5 793.8 L1187 794.5 L1187.5 794.5 L1188 793.7 L1188.5 792.5 L1189 791.3 L1189.5 790.7 L1190 791 L1190.5 792.1 L1191 793.5 L1191.5 794.4 L1192 794.4 L1192.5 793.5 L1193 792.2 L1193.5 791 L1194 790.3 L1194.5 790.5 L1195 791.7 L1195.5 793.3 L1196 794.5 L1196.5 794.7 L1197 793.6 L1197.5 791.8 L1198 790.2 L1198.5 789.7 L1199 790.4 L1199.5 791.7 L1200 793.3 L1200.5 794.4 L1201 794.7 L1201.5 793.8 L1202 792.2 L1202.5 790.4 L1203 789.3 L1203.5 789.3 L1204 790.5 L1204.5 792.2 L1205 793.6 L1205.5 793.9 L1206 793 L1206.5 791.5 L1207 789.9 L1207.5 789 L1208 789.3 L1208.5 791.1 L1209 793.4 L1209.5 794.9 L1210 794.8 L1210.5 793.3 L1211 791 L1211.5 789 L1212 788.1 L1212.5 788.8 L1213 790.6 L1213.5 792.5 L1214 793.7 L1214.5 793.5 L1215 792.2 L1215.5 790.4 L1216 789 L1216.5 788.7 L1217 789.7 L1217.5 791.6 L1218 793.2 L1218.5 793.8 L1219 793 L1219.5 791.2 L1220 789.5 L1220.5 788.7 L1221 789.3 L1221.5 791 L1222 792.9 L1222.5 794.3 L1223 794.5 L1223.5 793.5 L1224 791.8 L1224.5 790.2 L1225 789.4 L1225.5 789.7 L1226 790.8 L1226.5 792.2 L1227 793.5 L1227.5 794 L1228 793.5 L1228.5 792.4 L1229 791 L1229.5 789.9 L1230 789.6 L1230.5 790.4 L1231 792.1 L1231.5 793.7 L1232 794.3 L1232.5 793.7 L1233 792.2 L1233.5 790.7 L1234 789.8 L1234.5 790.1 L1235 791.5 L1235.5 793.2 L1236 794.5 L1236.5 794.6 L1237 793.8 L1237.5 792.5 L1238 791.1 L1238.5 790.4 L1239 790.6 L1239.5 791.8 L1240 793.5 L1240.5 794.9 L1241 795.4 L1241.5 794.6 L1242 792.9 L1242.5 791.3 L1243 790.6 L1243.5 791 L1244 792 L1244.5 793.1 L1245 794 L1245.5 794.3 L1246 793.9 L1246.5 792.9 L1247 791.8 L1247.5 791 L1248 791 L1248.5 791.7 L1249 792.9 L1249.5 794.1 L1250 794.6 L1250.5 794.4 L1251 793.4 L1251.5 792.1 L1252 791.3 L1252.5 791.2 L1253 792 L1253.5 793.3 L1254 794.6 L1254.5 795.4 L1255 795.3 L1255.5 794.2 L1256 792.7 L1256.5 791.6 L1257 791.5 L1257.5 792.3 L1258 793.7 L1258.5 794.8 L1259 795.1 L1259.5 794.5 L1260 793.4 L1260.5 792.3 L1261 791.6 L1261.5 791.8 L1262 792.7 L1262.5 793.9 L1263 794.9 L1263.5 795.2 L1264 794.6 L1264.5 793.4 L1265 792 L1265.5 791.2 L1266 791.3 L1266.5 792.2 L1267 793.7 L1267.5 794.9 L1268 795.5 L1268.5 795 L1269 793.7 L1269.5 792.1 L1270 790.9 L1270.5 790.7 L1271 791.3 L1271.5 792.5 L1272 793.7 L1272.5 794.5 L1273 794.6 L1273.5 793.7 L1274 792.2 L1274.5 790.7 L1275 790.1 L1275.5 790.5 L1276 791.7 L1276.5 793.2 L1277 794.2 L1277.5 794.4 L1278 793.6 L1278.5 792.1 L1279 790.5 L1279.5 789.5 L1280 789.6 L1280.5 790.6 L1281 792.1 L1281.5 793.4 L1282 793.9 L1282.5 793.3 L1283 791.9 L1283.5 790.3 L1284 789.1 L1284.5 788.8 L1285 789.9 L1285.5 791.9 L1286 793.8 L1286.5 794.7 L1287 794.2 L1287.5 792.4 L1288 790.2 L1288.5 788.6 L1289 788.2 L1289.5 789.4 L1290 791.4 L1290.5 793.4 L1291 794.5 L1291.5 794 L1292 792.1 L1292.5 789.7 L1293 788 L1293.5 787.7 L1294 789.3 L1294.5 791.9 L1295 794.4 L1295.5 795.4 L1296 794.5 L1296.5 792.2 L1297 789.5 L1297.5 787.5 L1298 787 L1298.5 788.2 L1299 790.4 L1299.5 792.7 L1300 794 L1300.5 793.9 L1301 792.4 L1301.5 790 L1302 787.9 L1302.5 786.9 L1303 787.6 L1303.5 789.9 L1304 792.7 L1304.5 794.8 L1305 795.3 L1305.5 793.5 L1306 790.4 L1306.5 787.5 L1307 786.6 L1307.5 787.7 L1308 790.2 L1308.5 792.8 L1309 794.4 L1309.5 794.1 L1310 791.8 L1310.5 788.7 L1311 786.5 L1311.5 786.4 L1312 788.4 L1312.5 791.3 L1313 793.9 L1313.5 794.9 L1314 793.9 L1314.5 791.1 L1315 788.1 L1315.5 786.3 L1316 786.7 L1316.5 789.1 L1317 792.5 L1317.5 794.9 L1318 795.2 L1318.5 793.5 L1319 790.5 L1319.5 787.5 L1320 785.7 L1320.5 785.7 L1321 787.4 L1321.5 789.9 L1322 792.2 L1322.5 793.3 L1323 792.6 L1323.5 790.3 L1324 787.5 L1324.5 785.6 L1325 785.5 L1325.5 787.5 L1326 790.4 L1326.5 792.9 L1327 793.6 L1327.5 792.3 L1328 789.8 L1328.5 787.1 L1329 785.6 L1329.5 785.9 L1330 788.2 L1330.5 791.2 L1331 793.2 L1331.5 793.3 L1332 791.4 L1332.5 788.6 L1333 786.4 L1333.5 786 L1334 787.6 L1334.5 790.3 L1335 793.3 L1335.5 795.2 L1336 795.3 L1336.5 793.2 L1337 789.9 L1337.5 787.2 L1338 786.3 L1338.5 787.8 L1339 790.8 L1339.5 793.8 L1340 795.3 L1340.5 794.7 L1341 792.5 L1341.5 789.6 L1342 787.2 L1342.5 786.2 L1343 787.2 L1343.5 789.7 L1344 792.6 L1344.5 794.5 L1345 794.4 L1345.5 792.7 L1346 790.1 L1346.5 787.8 L1347 786.9 L1347.5 787.8 L1348 790 L1348.5 792.4 L1349 793.5 L1349.5 792.8 L1350 790.8 L1350.5 788.5 L1351 787 L1351.5 787.1 L1352 788.4 L1352.5 790.4" stroke="#FF0000" stroke-width="1.15" fill="none"/>
<path d="M88.5 795.1 L89 795.1 L89.5 795.1 L90 795.1 L90.5 795.1 L91 795.2 L91.5 795.2 L92 795.3 L92.5 795.4 L93 795.4 L93.5 795.3 L94 795.2 L94.5 795.1 L95 795 L95.5 794.9 L96 795 L96.5 795.2 L97 795.3 L97.5 795.4 L98 795.4 L98.5 795.3 L99 795 L99.5 794.8 L100 794.7 L100.5 794.7 L101 794.9 L101.5 795.1 L102 795.2 L102.5 795.2 L103 795.1 L103.5 794.8 L104 794.5 L104.5 794.4 L105 794.5 L105.5 794.7 L106 795 L106.5 795.2 L107 795.1 L107.5 794.9 L108 794.5 L108.5 794.2 L109 794.2 L109.5 794.4 L110 794.7 L110.5 794.9 L111 795 L111.5 793.8 L112 789.9 L112.5 784.8 L113 780.6 L113.5 779 L114 780.6 L114.5 784.9 L115 790 L115.5 793.6 L116 794.1 L116.5 787.6 L117 775.7 L117.5 763.6 L118 756.5 L118.5 757.8 L119 767.2 L119.5 780.5 L120 791.2 L120.5 794.1 L121 784.6 L121.5 765.6 L122 747.2 L122.5 738.9 L123 743.7 L123.5 757.8 L124 775.1 L124.5 788 L125 790.8 L125.5 777 L126 751.6 L126.5 727.9 L127 718.7 L127.5 725 L128 740.7 L128.5 758.8 L129 771.5 L129.5 772.5 L130 756.1 L130.5 728.8 L131 704.1 L131.5 694 L132 702.2 L132.5 724 L133 750.4 L133.5 770.9 L134 776.9 L134.5 762.3 L135 732.5 L135.5 702.9 L136 688.9 L136.5 695.3 L137 715.8 L137.5 742.1 L138 763.7 L138.5 772 L139 758.3 L139.5 724.4 L140 687.6 L140.5 666.7 L141 671.8 L141.5 698.6 L142 732.2 L142.5 754.2 L143 752.4 L143.5 727.9 L144 692.4 L144.5 662.9 L145 653.6 L145.5 673.6 L146 716.7 L146.5 762.8 L147 790.8 L147.5 787.3 L148 753 L148.5 703.1 L149 660.2 L149.5 643.5 L150 658 L150.5 693.6 L151 731.9 L151.5 753.1 L152 743.7 L152.5 702.3 L153 651.3 L153.5 618.9 L154 622.3 L154.5 658.3 L155 711.2 L155.5 758.6 L156 780.4 L156.5 762 L157 704.8 L157.5 637.8 L158 595.3 L158.5 597.4 L159 636.8 L159.5 691.8 L160 733.2 L160.5 740.2 L161 720.2 L161.5 684.4 L162 646.8 L162.5 622.1 L163 620.8 L163.5 649 L164 694.7 L164.5 736.4 L165 754.1 L165.5 737.5 L166 692.2 L166.5 640.4 L167 607.5 L167.5 610.4 L168 652.4 L168.5 714.3 L169 767.2 L169.5 786.4 L170 766.2 L170.5 718.6 L171 665.5 L171.5 631.1 L172 630.9 L172.5 662.9 L173 711.1 L173.5 751.6 L174 764.4 L174.5 748.1 L175 712.7 L175.5 673 L176 645.7 L176.5 642.5 L177 665.4 L177.5 703.9 L178 740 L178.5 757 L179 747.8 L179.5 717.9 L180 680.5 L180.5 651.8 L181 644.5 L181.5 664.2 L182 704.4 L182.5 749.1 L183 780.7 L183.5 786.6 L184 766 L184.5 728.1 L185 688.8 L185.5 664.7 L186 666.2 L186.5 693.6 L187 734.7 L187.5 771.1 L188 786.5 L188.5 774.5 L189 741.5 L189.5 703.3 L190 678.3 L190.5 677.6 L191 696.9 L191.5 727.4 L192 756.2 L192.5 771.3 L193 767.1 L193.5 748.3 L194 724.7 L194.5 708.5 L195 708.6 L195.5 726.8 L196 754 L196.5 776.1 L197 781.7 L197.5 773.5 L198 757.9 L198.5 742.2 L199 733.6 L199.5 736.3 L200 748.8 L200.5 765.5 L201 778.9 L201.5 783 L202 776.8 L202.5 763.9 L203 750.1 L203.5 741.6 L204 743.2 L204.5 757.1 L205 776.2 L205.5 790.6 L206 792.6 L206.5 783.3 L207 768.4 L207.5 756.4 L208 754 L208.5 761 L209 773.4 L209.5 785.2 L210 790.9 L210.5 788.4 L211 780.6 L211.5 771.4 L212 765.5 L212.5 766 L213 772.2 L213.5 780.6 L214 786.7 L214.5 786.9 L215 781.4 L215.5 772.5 L216 764.4 L216.5 760.7 L217 763.4 L217.5 771.7 L218 782.1 L218.5 790.3 L219 792.7 L219.5 785.9 L220 772.1 L220.5 758.5 L221 752.7 L221.5 757.6 L222 770.6 L222.5 784.4 L223 791.1 L223.5 787.4 L224 775.3 L224.5 760.3 L225 749 L225.5 746.5 L226 754.3 L226.5 768.4 L227 781.6 L227.5 787.2 L228 781.7 L228.5 767.7 L229 752.8 L229.5 745.3 L230 749.6 L230.5 763.9 L231 780.7 L231.5 791 L232 789.3 L232.5 776.6 L233 759.7 L233.5 747.6 L234 746.4 L234.5 753.6 L235 765.5 L235.5 777.2 L236 783.8 L236.5 782.1 L237 771.3 L237.5 757.2 L238 747.7 L238.5 748.3 L239 759.2 L239.5 775.2 L240 788.5 L240.5 792.4 L241 787.6 L241.5 777.2 L242 765.4 L242.5 756.9 L243 754.9 L243.5 760.4 L244 771 L244.5 781.6 L245 787.2 L245.5 786.3 L246 781.4 L246.5 774.6 L247 768.6 L247.5 765.6 L248 767.5 L248.5 774.2 L249 782.7 L249.5 788.8 L250 789.8 L250.5 786.5 L251 781.1 L251.5 776.7 L252 775.7 L252.5 778.6 L253 784.1 L253.5 790.1 L254 794 L254.5 794.4 L255 790.7 L255.5 784.8 L256 779.5 L256.5 777.5 L257 779.6 L257.5 785 L258 791 L258.5 794.7 L259 794.3 L259.5 789.6 L260 783.3 L260.5 778.9 L261 778.6 L261.5 781.4 L262 785.8 L262.5 789.9 L263 792.1 L263.5 791.3 L264 788 L264.5 783.9 L265 781.2 L265.5 781.2 L266 784.2 L266.5 788.7 L267 792.8 L267.5 794.5 L268 793.1 L268.5 789.4 L269 785.1 L269.5 782.2 L270 782.2 L270.5 785.1 L271 789.4 L271.5 793.1 L272 794.3 L272.5 793 L273 790.1 L273.5 786.7 L274 784.2 L274.5 783.5 L275 785.5 L275.5 789.4 L276 792.9 L276.5 794.2 L277 793 L277.5 790.3 L278 787.4 L278.5 785.4 L279 785.4 L279.5 787.2 L280 790.2 L280.5 792.7 L281 793.5 L281.5 792.7 L282 790.8 L282.5 788.6 L283 787 L283.5 786.7 L284 787.7 L284.5 789.7 L285 791.8 L285.5 793.2 L286 792.9 L286.5 788.1 L287 780.5 L287.5 773.7 L288 771.1 L288.5 773.3 L289 778.6 L289.5 784.5 L290 788 L290.5 786.7 L291 778.4 L291.5 767.1 L292 758.9 L292.5 757.9 L293 765 L293.5 776.5 L294 786.3 L294.5 789.1 L295 783.2 L295.5 771.6 L296 760.4 L296.5 755.7 L297 759.9 L297.5 770.9 L298 782.8 L298.5 789.5 L299 787.4 L299.5 777.4 L300 764.5 L300.5 755.2 L301 754.1 L301.5 759.8 L302 769.7 L302.5 779.9 L303 786.4 L303.5 786.7 L304 780.8 L304.5 771.2 L305 761.7 L305.5 756.3 L306 757.7 L306.5 767.6 L307 781.1 L307.5 791.8 L308 794.4 L308.5 788.5 L309 777 L309.5 765 L310 757.6 L310.5 758.4 L311 768.1 L311.5 781.8 L312 792.6 L312.5 795 L313 788.1 L313.5 775.9 L314 764.7 L314.5 760.6 L315 764.1 L315.5 772.3 L316 781.1 L316.5 786.4 L317 785.8 L317.5 781 L318 774.3 L318.5 768.4 L319 765.9 L319.5 769.1 L320 777.7 L320.5 787.5 L321 793.6 L321.5 793.5 L322 788.8 L322.5 781.8 L323 775.1 L323.5 771.5 L324 772.2 L324.5 776.7 L325 783.1 L325.5 788.5 L326 790.8 L326.5 789.3 L327 785.1 L327.5 779.8 L328 775.7 L328.5 774.3 L329 777 L329.5 783.1 L330 789.5 L330.5 793 L331 791.6 L331.5 785.9 L332 778.8 L332.5 774.4 L333 774.8 L333.5 779.2 L334 785.2 L334.5 789.9 L335 790.9 L335.5 788.3 L336 783.6 L336.5 778.9 L337 776.5 L337.5 777.6 L338 782.5 L338.5 788.7 L339 793.3 L339.5 793.8 L340 789.2 L340.5 781.8 L341 775.7 L341.5 774.3 L342 777.9 L342.5 784.5 L343 791.2 L343.5 795 L344 793.4 L344.5 785.1 L345 774.2 L345.5 766 L346 764.8 L346.5 770.4 L347 780 L347.5 789.3 L348 794 L348.5 791.3 L349 781.4 L349.5 768.6 L350 758.4 L350.5 755.2 L351 759.4 L351.5 768.6 L352 778.8 L352.5 785.7 L353 786 L353.5 777.3 L354 763.9 L354.5 752.8 L355 750.1 L355.5 756.7 L356 768.9 L356.5 780.5 L357 785.6 L357.5 781.4 L358 769.6 L358.5 755.9 L359 747 L359.5 747.2 L360 756.3 L360.5 770.6 L361 784.2 L361.5 791.7 L362 789.2 L362.5 776.4 L363 759.6 L363.5 747.3 L364 745.9 L364.5 756.9 L365 774.6 L365.5 790 L366 794.8 L366.5 786.2 L367 768.8 L367.5 752.5 L368 746.4 L368.5 751.3 L369 762.6 L369.5 775.2 L370 783.4 L370.5 783.6 L371 776.9 L371.5 766.2 L372 755.6 L372.5 749.4 L373 750 L373.5 757.3 L374 768.1 L374.5 777.8 L375 782 L375.5 777.3 L376 764.2 L376.5 749.5 L377 740.9 L377.5 742.3 L378 751.6 L378.5 764.5 L379 775.4 L379.5 779.5 L380 775.1 L380.5 763.9 L381 750.6 L381.5 740.6 L382 738 L382.5 746.5 L383 763.6 L383.5 781.6 L384 792.6 L384.5 791 L385 775 L385.5 752 L386 732.9 L386.5 727.1 L387 737.7 L387.5 759 L388 779.2 L388.5 787 L389 777.2 L389.5 753.9 L390 728.8 L390.5 714.4 L391 718.4 L391.5 739.6 L392 767.4 L392.5 787.6 L393 789.9 L393.5 772.8 L394 744.7 L394.5 719.2 L395 708.8 L395.5 717.7 L396 740.7 L396.5 765.3 L397 778.6 L397.5 774.8 L398 759.3 L398.5 740.3 L399 727.5 L399.5 727.8 L400 742.2 L400.5 763.5 L401 781.2 L401.5 786.6 L402 776.6 L402.5 756.7 L403 737.5 L403.5 729.3 L404 735.1 L404.5 750.6 L405 769.2 L405.5 782.7 L406 785.5 L406.5 778.7 L407 766.1 L407.5 753.1 L408 745.5 L408.5 746.9 L409 758.3 L409.5 774.2 L410 787 L410.5 790.4 L411 783.5 L411.5 770.5 L412 758.7 L412.5 754.6 L413 760.5 L413.5 773.1 L414 785.4 L414.5 790.4 L415 787 L415.5 778.3 L416 768.2 L416.5 761.3 L417 760.9 L417.5 768.1 L418 779.4 L418.5 789.3 L419 792.8 L419.5 787.3 L420 775.2 L420.5 763.4 L421 758.6 L421.5 761.7 L422 769.8 L422.5 779.5 L423 787 L423.5 789.1 L424 783.3 L424.5 771.6 L425 759.9 L425.5 754.3 L426 757.8 L426.5 768.8 L427 781.4 L427.5 789.1 L428 787.7 L428.5 777.8 L429 764 L429.5 752.3 L430 748.1 L430.5 753.4 L431 765.8 L431.5 779.2 L432 786.9 L432.5 785.5 L433 775.9 L433.5 762.2 L434 749.7 L434.5 743.5 L435 746.1 L435.5 757 L436 771.3 L436.5 782.6 L437 785.9 L437.5 778.9 L438 764.5 L438.5 749.6 L439 741.6 L439.5 744.1 L440 755.6 L440.5 770.2 L441 780.4 L441.5 781.2 L442 773.2 L442.5 759.8 L443 746.5 L443.5 738.7 L444 740.1 L444.5 751.8 L445 769.4 L445.5 785.8 L446 794.4 L446.5 790.5 L447 773.1 L447.5 751.5 L448 737.3 L448.5 737.8 L449 750.9 L449.5 769.8 L450 784.9 L450.5 788.7 L451 781.5 L451.5 767.1 L452 751.3 L452.5 740.1 L453 738.3 L453.5 749.3 L454 768.3 L454.5 785.3 L455 791.4 L455.5 784.9 L456 770.2 L456.5 753.5 L457 742.2 L457.5 741.5 L458 752.9 L458.5 770.3 L459 783.8 L459.5 785.8 L460 776.8 L460.5 761.7 L461 747.9 L461.5 742 L462 746.8 L462.5 759.6 L463 774.4 L463.5 784.4 L464 784.9 L464.5 777 L465 764.6 L465.5 753.3 L466 748.3 L466.5 751.9 L467 762.4 L467.5 774.9 L468 783.8 L468.5 785.1 L469 780.8 L469.5 773.2 L470 765.3 L470.5 760.2 L471 760.1 L471.5 766.3 L472 776 L472.5 784.4 L473 787.3 L473.5 784.1 L474 777.2 L474.5 769.9 L475 765.9 L475.5 767.3 L476 773.3 L476.5 781.4 L477 788 L477.5 790.3 L478 788.2 L478.5 783.4 L479 777.6 L479.5 773.3 L480 772.1 L480.5 775.5 L481 782.2 L481.5 788.8 L482 791.6 L482.5 789.6 L483 784.3 L483.5 778.2 L484 774.1 L484.5 774 L485 778.6 L485.5 785.6 L486 791.6 L486.5 793.7 L487 791.2 L487.5 785.4 L488 778.9 L488.5 774.4 L489 773.9 L489.5 778.3 L490 785.5 L490.5 791.8 L491 793.9 L491.5 790.9 L492 784.5 L492.5 777.8 L493 774.2 L493.5 775.5 L494 780.9 L494.5 787.9 L495 793.3 L495.5 794.5 L496 790 L496.5 781.9 L497 774.8 L497.5 772.5 L498 775.6 L498.5 781.9 L499 788 L499.5 790.5 L500 787.6 L500.5 780.6 L501 773.3 L501.5 769.6 L502 771.2 L502.5 776.9 L503 784.1 L503.5 789.8 L504 791.7 L504.5 787.6 L505 779 L505.5 770.3 L506 766.3 L506.5 768.7 L507 776 L507.5 785.2 L508 792.6 L508.5 795.1 L509 791.7 L509.5 784.2 L510 776.4 L510.5 772.3 L511 773.6 L511.5 778.7 L512 785.5 L512.5 791.2 L513 793.2 L513.5 791.4 L514 786.7 L514.5 781.3 L515 777.5 L515.5 776.9 L516 779.9 L516.5 785.1 L517 790.4 L517.5 793.5 L518 792.9 L518.5 788.5 L519 782.5 L519.5 777.9 L520 776.9 L520.5 779.2 L521 783.5 L521.5 788 L522 790.8 L522.5 790.9 L523 788.1 L523.5 783.8 L524 779.8 L524.5 778.1 L525 779.4 L525.5 783.3 L526 788 L526.5 791.5 L527 792.4 L527.5 790.2 L528 785.9 L528.5 781.4 L529 778.4 L529.5 778.3 L530 782.1 L530.5 787.8 L531 792.5 L531.5 793.5 L532 790.9 L532.5 786.2 L533 781.3 L533.5 778.4 L534 779.1 L534.5 783.7 L535 790 L535.5 794.6 L536 795.1 L536.5 791.5 L537 785.4 L537.5 779.8 L538 777 L538.5 778.2 L539 782.4 L539.5 788 L540 792.8 L540.5 794.8 L541 793.5 L541.5 789.6 L542 784.8 L542.5 781.2 L543 780.3 L543.5 782.5 L544 786.7 L544.5 791.1 L545 793.7 L545.5 793.4 L546 791 L546.5 787.5 L547 784.1 L547.5 782.4 L548 783.1 L548.5 786.4 L549 790.4 L549.5 792.9 L550 792.7 L550.5 790.6 L551 787.7 L551.5 785.8 L552 785.7 L552.5 787.6 L553 790.5 L553.5 793 L554 793.7 L554.5 793 L555 791.5 L555.5 789.8 L556 788.6 L556.5 788.3 L557 789.6 L557.5 792 L558 794.3 L558.5 795.4 L559 795 L559.5 793.5 L560 791.6 L560.5 790.3 L561 790.1 L561.5 791.1 L562 792.8 L562.5 794.4 L563 795.1 L563.5 794.8 L564 793.8 L564.5 792.7 L565 791.9 L565.5 791.7 L566 792.3 L566.5 793.4 L567 794.6 L567.5 795.2 L568 795 L568.5 794.4 L569 793.7 L569.5 793.2 L570 793.1 L570.5 793.4 L571 794 L571.5 794.6 L572 795 L572.5 795 L573 794.1 L573.5 792.4 L574 790.8 L574.5 789.8 L575 790 L575.5 791.2 L576 792.9 L576.5 794.5 L577 795.1 L577.5 794 L578 790.8 L578.5 787.1 L579 784.9 L579.5 785.2 L580 787.4 L580.5 790.4 L581 793.2 L581.5 794.5 L582 793.5 L582.5 789.8 L583 785 L583.5 781.5 L584 780.9 L584.5 783.7 L585 788.8 L585.5 793.4 L586 795.4 L586.5 793.5 L587 788.4 L587.5 782.4 L588 778.3 L588.5 777.9 L589 781.1 L589.5 786.4 L590 791.4 L590.5 793.9 L591 792.5 L591.5 787.2 L592 780.7 L592.5 776.5 L593 776.6 L593.5 780.9 L594 787.2 L594.5 792.4 L595 793.9 L595.5 790.6 L596 783.9 L596.5 777.7 L597 775.5 L597.5 777.5 L598 782.4 L598.5 788.2 L599 792.5 L599.5 793.6 L600 790.2 L600.5 783.8 L601 778 L601.5 776 L602 777.9 L602.5 782.2 L603 786.9 L603.5 789.7 L604 789.3 L604.5 785.7 L605 780.7 L605.5 777 L606 776.6 L606.5 780 L607 785.6 L607.5 790.9 L608 793.3 L608.5 792.1 L609 788.3 L609.5 783.4 L610 779.5 L610.5 778.3 L611 780.8 L611.5 785.9 L612 790.8 L612.5 792.8 L613 791.1 L613.5 786.8 L614 781.9 L614.5 778.4 L615 778 L615.5 780.7 L616 785.2 L616.5 789.2 L617 790.7 L617.5 789 L618 785.2 L618.5 780.7 L619 777.4 L619.5 776.7 L620 779.2 L620.5 783.9 L621 788.6 L621.5 791 L622 790.1 L622.5 786.6 L623 782 L623.5 778.2 L624 777 L624.5 779.9 L625 786.1 L625.5 792.1 L626 794.6 L626.5 792 L627 786 L627.5 779.7 L628 776.5 L628.5 777.8 L629 782.1 L629.5 787.2 L630 790.7 L630.5 790.7 L631 787.2 L631.5 781.9 L632 777.4 L632.5 776.1 L633 779.4 L633.5 786.1 L634 792.2 L634.5 794.3 L635 792.4 L635.5 788 L636 782.9 L636.5 779 L637 778 L637.5 780 L638 784.3 L638.5 788.7 L639 791.2 L639.5 790.8 L640 787.8 L640.5 783.6 L641 779.9 L641.5 778.2 L642 779.6 L642.5 783.5 L643 788.2 L643.5 791.3 L644 791.4 L644.5 789 L645 785.2 L645.5 781.6 L646 779.6 L646.5 780.2 L647 783.6 L647.5 788.4 L648 792.7 L648.5 795 L649 794.3 L649.5 791.1 L650 786.8 L650.5 783 L651 781.2 L651.5 782.3 L652 785.7 L652.5 790.1 L653 793.5 L653.5 794.5 L654 793.2 L654.5 790.5 L655 787.4 L655.5 785.2 L656 784.8 L656.5 786.6 L657 789.8 L657.5 793.1 L658 794.8 L658.5 794.5 L659 792.9 L659.5 790.9 L660 789.3 L660.5 789.1 L661 790 L661.5 791.7 L662 793.4 L662.5 794.4 L663 794.3 L663.5 793.8 L664 793.2 L664.5 792.7 L665 792.6 L665.5 793.1 L666 794.1 L666.5 794.9 L667 795.3 L667.5 795 L668 794.3 L668.5 793.3 L669 792.5 L669.5 792.3 L670 792.7 L670.5 793.7 L671 794.7 L671.5 795.1 L672 794.7 L672.5 793.5 L673 792 L673.5 790.9 L674 790.6 L674.5 791.2 L675 792.4 L675.5 793.7 L676 794.4 L676.5 794.4 L677 793.1 L677.5 791.2 L678 789.4 L678.5 788.6 L679 789.2 L679.5 791.3 L680 793.7 L680.5 795.1 L681 794.6 L681.5 792.2 L682 789.1 L682.5 786.7 L683 786.3 L683.5 788.1 L684 791.1 L684.5 793.5 L685 794 L685.5 792.8 L686 790.4 L686.5 788.1 L687 787 L687.5 787.5 L688 789.3 L688.5 791.5 L689 793.1 L689.5 793.3 L690 792.3 L690.5 790.6 L691 789 L691.5 788.5 L692 789.3 L692.5 791.2 L693 793.1 L693.5 794.1 L694 793.9 L694.5 792.6 L695 791.1 L695.5 790.1 L696 790.2 L696.5 791.2 L697 792.7 L697.5 793.9 L698 794.2 L698.5 793.8 L699 792.9 L699.5 792 L700 791.6 L700.5 792 L701 792.9 L701.5 794.1 L702 795 L702.5 795.3 L703 794.4 L703.5 792.9 L704 791.5 L704.5 790.9 L705 791.2 L705.5 792.3 L706 793.6 L706.5 794.7 L707 795 L707.5 794.4 L708 792.8 L708.5 791.1 L709 790.3 L709.5 790.6 L710 791.7 L710.5 793.3 L711 794.6 L711.5 795.2 L712 794.7 L712.5 793.2 L713 791.2 L713.5 789.8 L714 789.4 L714.5 790.4 L715 792.1 L715.5 794 L716 795 L716.5 794.8 L717 793.2 L717.5 791 L718 789 L718.5 788.3 L719 788.9 L719.5 790.5 L720 792.4 L720.5 793.8 L721 794.1 L721.5 793.1 L722 791 L722.5 788.8 L723 787.6 L723.5 788 L724 789.7 L724.5 791.9 L725 793.3 L725.5 793.3 L726 791.8 L726.5 789.6 L727 787.6 L727.5 786.7 L728 787.4 L728.5 789.4 L729 791.9 L729.5 793.9 L730 794.3 L730.5 792.9 L731 790.1 L731.5 787.3 L732 785.9 L732.5 786.5 L733 788.6 L733.5 791.2 L734 793.2 L734.5 793.6 L735 792 L735.5 788.8 L736 785.7 L736.5 784 L737 784.5 L737.5 786.9 L738 790.2 L738.5 792.9 L739 793.8 L739.5 792.1 L740 788.2 L740.5 784.1 L741 781.4 L741.5 781.5 L742 784.1 L742.5 788.3 L743 792.4 L743.5 794.6 L744 794 L744.5 789.9 L745 784.2 L745.5 779.7 L746 778.3 L746.5 780.5 L747 785.1 L747.5 790.1 L748 793.4 L748.5 793.5 L749 790 L749.5 784.3 L750 778.9 L750.5 776 L751 776.8 L751.5 780.8 L752 785.9 L752.5 789.7 L753 790.2 L753.5 786.6 L754 780.5 L754.5 775.3 L755 773.7 L755.5 776.8 L756 783.3 L756.5 789.9 L757 793.8 L757.5 793.1 L758 788.8 L758.5 782.7 L759 777.3 L759.5 774.8 L760 776 L760.5 779.9 L761 785 L761.5 789.3 L762 791 L762.5 789.7 L763 786.2 L763.5 782 L764 778.8 L764.5 778 L765 780.3 L765.5 785.1 L766 790.4 L766.5 794.3 L767 795.1 L767.5 792.9 L768 788.7 L768.5 784.2 L769 781.2 L769.5 781 L770 783.7 L770.5 787.8 L771 791.3 L771.5 792.4 L772 791.1 L772.5 788.3 L773 785.4 L773.5 783.7 L774 784.2 L774.5 786.7 L775 790.3 L775.5 793.4 L776 794.9 L776.5 794.2 L777 791.9 L777.5 789.1 L778 787.4 L778.5 787.5 L779 789.5 L779.5 792.2 L780 794.1 L780.5 794.3 L781 793.4 L781.5 791.9 L782 790.4 L782.5 789.6 L783 789.9 L783.5 791.1 L784 792.8 L784.5 794 L785 794.1 L785.5 793.3 L786 791.9 L786.5 790.6 L787 789.8 L787.5 789.9 L788 790.9 L788.5 792.4 L789 793.6 L789.5 794.1 L790 793.6 L790.5 792.6 L791 791.3 L791.5 790.4 L792 790.3 L792.5 791.3 L793 793 L793.5 794.6 L794 795.3 L794.5 794.8 L795 793.1 L795.5 791.3 L796 790.4 L796.5 790.7 L797 791.6 L797.5 792.9 L798 793.9 L798.5 794.3 L799 793.8 L799.5 792.6 L800 791.4 L800.5 790.7 L801 791 L801.5 792.1 L802 793.3 L802.5 794.2 L803 794.3 L803.5 793.5 L804 792.3 L804.5 791.2 L805 790.7 L805.5 791 L806 792.2 L806.5 793.4 L807 794.2 L807.5 794 L808 793.1 L808.5 791.9 L809 791.1 L809.5 791.1 L810 791.8 L810.5 792.9 L811 794 L811.5 794.6 L812 794.4 L812.5 793.5 L813 792.3 L813.5 791.4 L814 791.3 L814.5 792.2 L815 793.7 L815.5 795 L816 795.5 L816.5 795 L817 793.8 L817.5 792.5 L818 791.6 L818.5 791.7 L819 792.6 L819.5 793.8 L820 794.8 L820.5 795.2 L821 794.7 L821.5 793.5 L822 792.2 L822.5 791.2 L823 791.2 L823.5 792.2 L824 793.7 L824.5 795 L825 795.3 L825.5 794.6 L826 793.1 L826.5 791.5 L827 790.5 L827.5 790.6 L828 791.8 L828.5 793.7 L829 795 L829.5 795.2 L830 794.3 L830.5 792.6 L831 790.8 L831.5 789.6 L832 789.6 L832.5 790.9 L833 792.9 L833.5 794.6 L834 795.1 L834.5 794.4 L835 792.6 L835.5 790.5 L836 789 L836.5 788.5 L837 789.4 L837.5 791.2 L838 793.2 L838.5 794.5 L839 794.6 L839.5 793 L840 790.5 L840.5 788.4 L841 787.7 L841.5 788.7 L842 790.9 L842.5 793 L843 794 L843.5 793.2 L844 791 L844.5 788.4 L845 786.7 L845.5 786.7 L846 788.4 L846.5 791.1 L847 793.5 L847.5 794.3 L848 793.1 L848.5 790.3 L849 787.3 L849.5 785.5 L850 785.6 L850.5 787.6 L851 790.5 L851.5 792.8 L852 793.4 L852.5 791.8 L853 788.8 L853.5 785.9 L854 784.7 L854.5 785.6 L855 788.1 L855.5 790.9 L856 792.6 L856.5 792.3 L857 789.9 L857.5 786.7 L858 784.4 L858.5 784 L859 785.8 L859.5 788.9 L860 792.1 L860.5 793.9 L861 793.5 L861.5 791.3 L862 788 L862.5 785.1 L863 783.6 L863.5 784.2 L864 786.7 L864.5 789.8 L865 792.5 L865.5 793.4 L866 792 L866.5 788.9 L867 785.5 L867.5 783.5 L868 783.8 L868.5 786.5 L869 790.4 L869.5 793.5 L870 794.4 L870.5 792.4 L871 788.3 L871.5 784.2 L872 782 L872.5 782.6 L873 785.7 L873.5 789.6 L874 792.3 L874.5 792.6 L875 790.5 L875.5 787 L876 783.7 L876.5 782 L877 782.9 L877.5 786.4 L878 791 L878.5 794.3 L879 794.8 L879.5 792.7 L880 788.8 L880.5 784.8 L881 782.3 L881.5 782.4 L882 785.1 L882.5 789.3 L883 792.9 L883.5 794.2 L884 792.8 L884.5 789.5 L885 785.6 L885.5 782.8 L886 782.3 L886.5 784.2 L887 787.8 L887.5 791.4 L888 793.4 L888.5 792.8 L889 789.7 L889.5 785.8 L890 783.2 L890.5 783.4 L891 786.4 L891.5 790.6 L892 793.7 L892.5 794 L893 791.8 L893.5 788.1 L894 785 L894.5 783.8 L895 785 L895.5 788 L896 791.5 L896.5 793.9 L897 794.2 L897.5 792.5 L898 789.5 L898.5 786.5 L899 784.6 L899.5 784.8 L900 787.2 L900.5 790.7 L901 793.2 L901.5 793.4 L902 791.8 L902.5 789.2 L903 786.8 L903.5 785.9 L904 786.9 L904.5 789.5 L905 792.5 L905.5 794.4 L906 794.4 L906.5 792.8 L907 790.2 L907.5 787.9 L908 786.8 L908.5 787.3 L909 788.8 L909.5 790.8 L910 792.5 L910.5 793.2 L911 792.8 L911.5 791.5 L912 789.9 L912.5 788.6 L913 788.1 L913.5 788.7 L914 790.3 L914.5 792.3 L915 793.8 L915.5 794.2 L916 793.4 L916.5 791.7 L917 790 L917.5 788.9 L918 789 L918.5 790.6 L919 792.8 L919.5 794.4 L920 794.6 L920.5 793.4 L921 791.5 L921.5 789.7 L922 789 L922.5 789.6 L923 791.1 L923.5 792.7 L924 793.5 L924.5 793.2 L925 791.7 L925.5 789.8 L926 788.5 L926.5 788.6 L927 790.2 L927.5 792.5 L928 794.2 L928.5 794.5 L929 793.3 L929.5 791.2 L930 789 L930.5 787.7 L931 787.9 L931.5 789.6 L932 791.9 L932.5 793.6 L933 793.7 L933.5 792.3 L934 789.8 L934.5 787.4 L935 786.3 L935.5 786.8 L936 788.9 L936.5 791.4 L937 793.1 L937.5 793 L938 791.3 L938.5 788.8 L939 786.4 L939.5 785.2 L940 786 L940.5 788.8 L941 792 L941.5 793.9 L942 793.4 L942.5 790.6 L943 786.9 L943.5 784.5 L944 784.6 L944.5 786.3 L945 788.8 L945.5 791.2 L946 792.5 L946.5 792 L947 789.4 L947.5 786.2 L948 784.2 L948.5 784.4 L949 786.7 L949.5 790 L950 792.7 L950.5 793.6 L951 792 L951.5 788.4 L952 784.8 L952.5 783.3 L953 784.5 L953.5 787.7 L954 791.4 L954.5 793.6 L955 793.3 L955.5 790.7 L956 787.3 L956.5 784.9 L957 784.8 L957.5 787.4 L958 791.4 L958.5 794.5 L959 795.1 L959.5 793.5 L960 790.6 L960.5 787.7 L961 786.2 L961.5 786.7 L962 788.8 L962.5 791.7 L963 794 L963.5 794.9 L964 794 L964.5 791.8 L965 789.4 L965.5 787.9 L966 788.1 L966.5 789.9 L967 792.4 L967.5 794.2 L968 794.5 L968.5 793.4 L969 791.6 L969.5 789.8 L970 789 L970.5 789.4 L971 790.9 L971.5 793 L972 794.7 L972.5 795.3 L973 794.8 L973.5 793.5 L974 792 L974.5 790.8 L975 790.5 L975.5 791 L976 792.2 L976.5 793.6 L977 794.6 L977.5 794.8 L978 794.2 L978.5 793.1 L979 792 L979.5 791.5 L980 791.7 L980.5 792.3 L981 793.2 L981.5 793.9 L982 794.1 L982.5 793.6 L983 792.2 L983.5 790.6 L984 789.7 L984.5 789.8 L985 790.9 L985.5 792.4 L986 793.5 L986.5 793.6 L987 792.2 L987.5 789.9 L988 787.7 L988.5 786.4 L989 786.8 L989.5 789 L990 791.8 L990.5 793.6 L991 793.5 L991.5 791 L992 787.4 L992.5 784.7 L993 784.4 L993.5 786.1 L994 788.9 L994.5 791.2 L995 792 L995.5 790.7 L996 787.8 L996.5 784.6 L997 782.5 L997.5 782.6 L998 785.6 L998.5 790 L999 793.3 L999.5 793.7 L1000 791 L1000.5 786.7 L1001 783.2 L1001.5 782.4 L1002 784.3 L1002.5 787.8 L1003 790.8 L1003.5 791.9 L1004 790.3 L1004.5 786.9 L1005 783.5 L1005.5 781.6 L1006 782.2 L1006.5 784.8 L1007 788.3 L1007.5 791 L1008 791.9 L1008.5 790.6 L1009 787.7 L1009.5 784.4 L1010 781.9 L1010.5 781.4 L1011 783.1 L1011.5 786.5 L1012 789.9 L1012.5 791.7 L1013 791.2 L1013.5 788.4 L1014 784.8 L1014.5 782.2 L1015 781.7 L1015.5 783.9 L1016 787.9 L1016.5 791.9 L1017 794.2 L1017.5 793.8 L1018 790.6 L1018.5 786 L1019 782.4 L1019.5 781.5 L1020 783.6 L1020.5 787.7 L1021 791.8 L1021.5 794 L1022 793.2 L1022.5 789.9 L1023 785.5 L1023.5 782.3 L1024 781.7 L1024.5 784 L1025 787.9 L1025.5 791.2 L1026 792.1 L1026.5 790.1 L1027 786.3 L1027.5 782.8 L1028 781.7 L1028.5 783.4 L1029 787.1 L1029.5 791.1 L1030 793.7 L1030.5 793.4 L1031 790.4 L1031.5 786.2 L1032 783 L1032.5 782.4 L1033 784.7 L1033.5 788.8 L1034 792.6 L1034.5 794.3 L1035 793.1 L1035.5 789.6 L1036 785.5 L1036.5 782.8 L1037 782.6 L1037.5 784.7 L1038 788.3 L1038.5 791.7 L1039 793.5 L1039.5 792.8 L1040 789.3 L1040.5 785.1 L1041 782.5 L1041.5 782.9 L1042 785.7 L1042.5 789.8 L1043 793.5 L1043.5 795.4 L1044 794.6 L1044.5 791.2 L1045 786.7 L1045.5 783.1 L1046 782 L1046.5 783.8 L1047 787.5 L1047.5 791.2 L1048 793.2 L1048.5 792.5 L1049 789.6 L1049.5 785.9 L1050 783.3 L1050.5 783 L1051 785 L1051.5 788.4 L1052 791.7 L1052.5 793.3 L1053 792.5 L1053.5 789.5 L1054 785.8 L1054.5 783.2 L1055 783.1 L1055.5 785.2 L1056 788.6 L1056.5 791.6 L1057 792.8 L1057.5 791.7 L1058 788.8 L1058.5 785.6 L1059 784 L1059.5 785 L1060 788.2 L1060.5 792 L1061 794.4 L1061.5 794.3 L1062 792.2 L1062.5 789 L1063 786.1 L1063.5 784.7 L1064 785.3 L1064.5 787.7 L1065 790.7 L1065.5 793.3 L1066 794.3 L1066.5 793.3 L1067 790.6 L1067.5 787.7 L1068 786 L1068.5 786.3 L1069 788.4 L1069.5 791 L1070 792.8 L1070.5 792.8 L1071 791.7 L1071.5 789.9 L1072 788.3 L1072.5 787.4 L1073 787.9 L1073.5 789.6 L1074 791.9 L1074.5 793.4 L1075 793.6 L1075.5 792.7 L1076 791 L1076.5 789.5 L1077 788.6 L1077.5 788.8 L1078 790.5 L1078.5 792.6 L1079 793.9 L1079.5 793.9 L1080 792.7 L1080.5 791 L1081 789.8 L1081.5 789.7 L1082 790.6 L1082.5 792.1 L1083 793.5 L1083.5 794.1 L1084 793.8 L1084.5 792.9 L1085 791.8 L1085.5 791.1 L1086 790.9 L1086.5 791.5 L1087 792.5 L1087.5 793.7 L1088 794.4 L1088.5 794.5 L1089 793.9 L1089.5 793 L1090 792 L1090.5 791.6 L1091 791.8 L1091.5 792.7 L1092 793.8 L1092.5 794.6 L1093 794.9 L1093.5 794.2 L1094 792.6 L1094.5 790.9 L1095 789.7 L1095.5 789.7 L1096 790.7 L1096.5 792.5 L1097 794.2 L1097.5 795.2 L1098 795.1 L1098.5 793.5 L1099 791.1 L1099.5 788.9 L1100 787.8 L1100.5 788.3 L1101 790 L1101.5 792.2 L1102 794 L1102.5 794.5 L1103 793.3 L1103.5 790.5 L1104 787.6 L1104.5 785.9 L1105 786.2 L1105.5 788.7 L1106 791.9 L1106.5 794.2 L1107 794.2 L1107.5 792.2 L1108 788.9 L1108.5 785.9 L1109 784.3 L1109.5 785 L1110 787.5 L1110.5 790.5 L1111 792.4 L1111.5 792.1 L1112 789.8 L1112.5 786.5 L1113 783.6 L1113.5 782.5 L1114 784.1 L1114.5 788.3 L1115 792.7 L1115.5 795 L1116 793.8 L1116.5 789.6 L1117 784.5 L1117.5 781.1 L1118 781 L1118.5 783.3 L1119 786.9 L1119.5 790.1 L1120 791.5 L1120.5 790.3 L1121 787 L1121.5 783.4 L1122 781.3 L1122.5 781.8 L1123 784.6 L1123.5 788.3 L1124 791.3 L1124.5 792.2 L1125 790.4 L1125.5 786.8 L1126 783.5 L1126.5 782.2 L1127 783.7 L1127.5 787.7 L1128 792.2 L1128.5 795 L1129 795 L1129.5 792.4 L1130 788.5 L1130.5 785.2 L1131 784.1 L1131.5 785.2 L1132 787.7 L1132.5 790.5 L1133 792.3 L1133.5 792.5 L1134 791 L1134.5 788.7 L1135 786.6 L1135.5 785.6 L1136 786.5 L1136.5 788.9 L1137 791.6 L1137.5 793.3 L1138 793.3 L1138.5 791.7 L1139 789.5 L1139.5 787.9 L1140 787.7 L1140.5 789.3 L1141 791.7 L1141.5 793.8 L1142 794.3 L1142.5 793.5 L1143 791.8 L1143.5 790.2 L1144 789.5 L1144.5 790.2 L1145 792 L1145.5 793.9 L1146 794.9 L1146.5 794.7 L1147 793.7 L1147.5 792.4 L1148 791.4 L1148.5 791.1 L1149 791.7 L1149.5 792.9 L1150 794.2 L1150.5 794.8 L1151 794.6 L1151.5 793.8 L1152 792.6 L1152.5 791.6 L1153 791.2 L1153.5 791.6 L1154 792.7 L1154.5 793.9 L1155 794.7 L1155.5 794.8 L1156 794.1 L1156.5 792.8 L1157 791.5 L1157.5 790.7 L1158 790.7 L1158.5 791.6 L1159 793.1 L1159.5 794.4 L1160 795.1 L1160.5 794.7 L1161 793.1 L1161.5 791.2 L1162 789.9 L1162.5 789.9 L1163 791.1 L1163.5 792.8 L1164 794.4 L1164.5 795.1 L1165 794.3 L1165.5 792.3 L1166 790.1 L1166.5 789 L1167 789.5 L1167.5 790.9 L1168 792.7 L1168.5 793.9 L1169 794 L1169.5 792.7 L1170 790.8 L1170.5 789 L1171 788.4 L1171.5 788.9 L1172 790.4 L1172.5 792.1 L1173 793.3 L1173.5 793.3 L1174 792.4 L1174.5 790.7 L1175 789.1 L1175.5 788.2 L1176 788.4 L1176.5 790 L1177 792.3 L1177.5 794.3 L1178 795 L1178.5 794.1 L1179 792.1 L1179.5 789.9 L1180 788.3 L1180.5 788.1 L1181 789.3 L1181.5 791.2 L1182 792.9 L1182.5 793.6 L1183 792.7 L1183.5 790.5 L1184 788.4 L1184.5 787.5 L1185 788.2 L1185.5 790.1 L1186 792.4 L1186.5 793.9 L1187 794.1 L1187.5 792.7 L1188 790.3 L1188.5 788.3 L1189 787.5 L1189.5 788.2 L1190 789.8 L1190.5 791.7 L1191 793.2 L1191.5 793.7 L1192 792.8 L1192.5 791 L1193 789 L1193.5 787.6 L1194 787.4 L1194.5 788.8 L1195 791.1 L1195.5 793.5 L1196 794.8 L1196.5 794.5 L1197 792.4 L1197.5 789.4 L1198 787.2 L1198.5 786.9 L1199 788.5 L1199.5 791.2 L1200 793.8 L1200.5 795.1 L1201 794.6 L1201.5 792.5 L1202 789.7 L1202.5 787.3 L1203 786.5 L1203.5 787.2 L1204 789 L1204.5 791.1 L1205 792.6 L1205.5 793.1 L1206 792.1 L1206.5 790.1 L1207 787.9 L1207.5 786.5 L1208 786.5 L1208.5 787.9 L1209 790.1 L1209.5 792.2 L1210 793.4 L1210.5 793.2 L1211 791.2 L1211.5 788.4 L1212 786.2 L1212.5 785.8 L1213 787.3 L1213.5 790.1 L1214 792.9 L1214.5 794.6 L1215 794.4 L1215.5 792.1 L1216 789 L1216.5 786.6 L1217 786.2 L1217.5 787.7 L1218 790.6 L1218.5 793.3 L1219 794.7 L1219.5 794.1 L1220 791.6 L1220.5 788.4 L1221 786.3 L1221.5 786.3 L1222 788.3 L1222.5 791.3 L1223 793.7 L1223.5 794.1 L1224 792.7 L1224.5 790.2 L1225 787.9 L1225.5 787 L1226 787.9 L1226.5 790.2 L1227 792.8 L1227.5 794.2 L1228 794 L1228.5 792.6 L1229 790.6 L1229.5 788.8 L1230 788 L1230.5 788.5 L1231 789.9 L1231.5 791.7 L1232 793.2 L1232.5 793.7 L1233 793.1 L1233.5 791.7 L1234 790.1 L1234.5 789 L1235 788.9 L1235.5 790 L1236 791.9 L1236.5 793.6 L1237 794.5 L1237.5 794.2 L1238 793 L1238.5 791.4 L1239 790 L1239.5 789.6 L1240 790.3 L1240.5 791.8 L1241 793.6 L1241.5 794.8 L1242 795 L1242.5 794 L1243 792.2 L1243.5 790.8 L1244 790.4 L1244.5 791.2 L1245 792.5 L1245.5 793.8 L1246 794.5 L1246.5 794.2 L1247 793.2 L1247.5 792.1 L1248 791.4 L1248.5 791.5 L1249 792.3 L1249.5 793.5 L1250 794.4 L1250.5 794.6 L1251 794.1 L1251.5 793.1 L1252 791.9 L1252.5 791.1 L1253 791 L1253.5 791.7 L1254 793 L1254.5 794.3 L1255 795 L1255.5 794.6 L1256 793 L1256.5 791.1 L1257 789.8 L1257.5 789.7 L1258 790.8 L1258.5 792.4 L1259 793.6 L1259.5 793.7 L1260 792.8 L1260.5 791.2 L1261 789.6 L1261.5 788.8 L1262 789.1 L1262.5 790.5 L1263 792.6 L1263.5 794.4 L1264 795.3 L1264.5 794.6 L1265 792.4 L1265.5 789.7 L1266 787.7 L1266.5 787.3 L1267 788.5 L1267.5 790.6 L1268 792.8 L1268.5 794.4 L1269 794.6 L1269.5 793 L1270 790.4 L1270.5 787.6 L1271 785.9 L1271.5 786 L1272 788 L1272.5 791.1 L1273 794 L1273.5 795.3 L1274 794.1 L1274.5 790.5 L1275 786.5 L1275.5 784.4 L1276 784.9 L1276.5 787 L1277 789.9 L1277.5 792.3 L1278 793.4 L1278.5 792.9 L1279 790.9 L1279.5 788.4 L1280 786.4 L1280.5 785.7 L1281 786.9 L1281.5 789.8 L1282 793 L1282.5 795 L1283 795 L1283.5 793.3 L1284 790.7 L1284.5 788.4 L1285 787.5 L1285.5 788.3 L1286 790.5 L1286.5 792.9 L1287 794.5 L1287.5 794.6 L1288 793.3 L1288.5 791.3 L1289 789.5 L1289.5 788.8 L1290 789.4 L1290.5 791.1 L1291 793 L1291.5 794.4 L1292 794.7 L1292.5 793.9 L1293 792.3 L1293.5 790.8 L1294 790.1 L1294.5 790.4 L1295 791.7 L1295.5 793.3 L1296 794.4 L1296.5 794.7 L1297 794.1 L1297.5 793 L1298 791.9 L1298.5 791.2 L1299 791.1 L1299.5 792.1 L1300 793.6 L1300.5 794.8 L1301 795.1 L1301.5 794.6 L1302 793.5 L1302.5 792.5 L1303 792 L1303.5 792.2 L1304 792.8 L1304.5 793.7 L1305 794.4 L1305.5 794.7 L1306 794.5 L1306.5 794.1 L1307 793.5 L1307.5 793.1 L1308 792.9 L1308.5 793.2 L1309 793.7 L1309.5 794.3 L1310 794.8 L1310.5 794.9 L1311 794.6 L1311.5 793.9 L1312 793.4 L1312.5 793.2 L1313 793.5 L1313.5 794 L1314 794.6 L1314.5 795 L1315 794.9 L1315.5 794.4 L1316 793.7 L1316.5 793.1 L1317 792.9 L1317.5 793.1 L1318 793.8 L1318.5 794.6 L1319 795.2 L1319.5 795.4 L1320 795 L1320.5 794.1 L1321 793.1 L1321.5 792.5 L1322 792.6 L1322.5 793.4 L1323 794.5 L1323.5 795.3 L1324 795.3 L1324.5 794.7 L1325 793.6 L1325.5 792.7 L1326 792.1 L1326.5 792.3 L1327 793.3 L1327.5 794.6 L1328 795.4 L1328.5 795.3 L1329 794.5 L1329.5 793.4 L1330 792.3 L1330.5 791.8 L1331 792 L1331.5 792.8 L1332 793.9 L1332.5 794.7 L1333 794.8 L1333.5 794.3 L1334 793.2 L1334.5 792.1 L1335 791.4 L1335.5 791.6 L1336 792.7 L1336.5 794.2 L1337 795.3 L1337.5 795.3 L1338 794.4 L1338.5 793 L1339 791.7 L1339.5 791 L1340 791.2 L1340.5 792.1 L1341 793.4 L1341.5 794.5 L1342 795 L1342.5 794.5 L1343 793.2 L1343.5 791.7 L1344 790.8 L1344.5 790.9 L1345 792 L1345.5 793.4 L1346 794.3 L1346.5 794.3 L1347 793.5 L1347.5 792.2 L1348 791.3 L1348.5 791 L1349 791.7 L1349.5 793 L1350 794.3 L1350.5 795.1 L1351 794.9 L1351.5 794.1 L1352 792.9 L1352.5 792" stroke="#00FF00" stroke-width="1.15" fill="none"/></g>
</svg>

<div id="toppanel" style="position:absolute;left:0;top:0;width:1440px;height:25px;background:#EEEBE7;">
  <div style="position:absolute;left:0;top:23px;width:1440px;height:1px;background:#F6F4F2"></div>
  <div style="position:absolute;left:0;top:24px;width:1440px;height:1px;background:#BDB2A6"></div>
  <svg style="position:absolute;left:7px;top:0px" width="26" height="24" viewBox="0 0 26 24"><path d="M21.31 12.61 A7.1 7.1 0 0 1 11.76 18.13" fill="none" stroke="#D90B00" stroke-width="3.9"/><path d="M9.83 17.02 A7.1 7.1 0 0 1 9.83 5.98" fill="none" stroke="#FF9200" stroke-width="3.9"/><path d="M11.76 4.87 A7.1 7.1 0 0 1 21.31 10.39" fill="none" stroke="#F24B00" stroke-width="3.9"/><circle cx="3.90" cy="11.50" r="2.4" fill="#F25A10" stroke="#EEEBE7" stroke-width="0.9"/><circle cx="19.50" cy="2.49" r="2.4" fill="#DA0A0A" stroke="#EEEBE7" stroke-width="0.9"/><circle cx="19.50" cy="20.51" r="2.4" fill="#FF9A10" stroke="#EEEBE7" stroke-width="0.9"/></svg>
  <div style="position:absolute;left:37px;top:4px;font:13px 'Liberation Sans', sans-serif;letter-spacing:0.6px;color:#1A1A1A">Aplikace</div>
  <div style="position:absolute;left:106px;top:4px;font:13px 'Liberation Sans', sans-serif;letter-spacing:0.45px;color:#1A1A1A">Místa</div>
  <div style="position:absolute;left:156px;top:4px;font:13px 'Liberation Sans', sans-serif;letter-spacing:1.05px;color:#1A1A1A">Systém</div>
  <svg style="position:absolute;left:212px;top:0px" width="26" height="24" viewBox="0 0 26 24">
    <defs><radialGradient id="ffb" cx="0.6" cy="0.3" r="0.7"><stop offset="0" stop-color="#A8DCF8"/><stop offset="0.45" stop-color="#3A86CC"/><stop offset="1" stop-color="#0A2260"/></radialGradient>
    <linearGradient id="ffo" x1="0" y1="0" x2="0.8" y2="1"><stop offset="0" stop-color="#F08A1A"/><stop offset="0.55" stop-color="#E8641A"/><stop offset="1" stop-color="#D0321A"/></linearGradient>
    <linearGradient id="ffy" x1="0" y1="0" x2="0" y2="1"><stop offset="0" stop-color="#F8D030"/><stop offset="1" stop-color="#F09020"/></linearGradient></defs>
    <circle cx="13.5" cy="11.5" r="10.8" fill="url(#ffb)"/>
    <path d="M17 1.2 C22 2.8 25 7.5 24.3 13 C24 17 21.5 20.5 17.5 22 C20.5 19 21.5 14.5 20 10.5 C19 7 17.5 4 17 1.2 Z" fill="url(#ffy)"/>
    <path d="M5.5 3.5 C3.5 5 1.8 8.5 2 12.5 C2.4 18 7 22.6 13.5 22.5 C18 22.4 21.5 20 23.2 16.5 C21 19 17.5 19.8 14.5 19 C10.5 18 8 14.5 9 11 C9.5 9.3 11 8.2 12.2 7.8 C11 6.8 9 6.8 7.5 7.5 C7.2 6 6.5 4.5 5.5 3.5 Z" fill="url(#ffo)"/>
    <path d="M5.5 3.5 C6.8 4.3 7.8 5.8 8 7.2 C6.8 7.6 5.2 8 4.2 6.8 C4.3 5.6 4.8 4.5 5.5 3.5 Z" fill="#F5A030"/>
  </svg>
  <svg style="position:absolute;left:239px;top:1px" width="20" height="21" viewBox="0 0 20 21">
    <path d="M0.7 8 L10 0.8 L19.3 8 L19.3 19.8 L0.7 19.8 Z" fill="#EDEDEB" stroke="#8A8A88" stroke-width="1"/>
    <path d="M3.5 10 C4 8 6 7.5 10 7.5 C14 7.5 16 8 16.5 10 L16.5 12 L3.5 12 Z" fill="#FAFAFA" stroke="#BDBDBB" stroke-width="0.7"/>
    <path d="M1 8.5 L10 14.5 L19 8.5 L19 19.5 L1 19.5 Z" fill="#FFFFFF"/>
    <path d="M1.3 19.3 L8 12.8 M18.7 19.3 L12 12.8 M1.2 8.6 L6 11.8 M18.8 8.6 L14 11.8" stroke="#A8A8A6" stroke-width="0.9" fill="none"/>
  </svg>
  <svg style="position:absolute;left:262px;top:2px" width="22" height="20" viewBox="0 0 22 20">
    <rect x="0.8" y="0.8" width="20" height="18" rx="2" fill="#7A7C78" stroke="#2A2C2A" stroke-width="1.2"/>
    <rect x="2.3" y="2.3" width="17" height="11.5" fill="#2E3230" stroke="#1A1A1A" stroke-width="0.6"/>
    <path d="M3 4.5 H19 M3 6.5 H19 M3 8.5 H19 M3 10.5 H19 M3 12.5 H19" stroke="#4A4E4A" stroke-width="0.8"/>
    <path d="M5 6.5 L7.8 8.5 L5 10.5" stroke="#fff" stroke-width="1" fill="none"/>
    <rect x="8.5" y="10" width="3.2" height="1" fill="#fff"/>
    <rect x="1.5" y="14.5" width="19" height="4" fill="#3A3C3A"/>
    <rect x="3" y="16" width="2.3" height="1.2" fill="#5BE03A"/>
    <rect x="14" y="16.2" width="5" height="0.9" fill="#222"/>
  </svg>

  <svg style="position:absolute;left:1139px;top:6px" width="21" height="14" viewBox="0 0 21 14">
    <rect x="0.7" y="0.7" width="19" height="12" rx="1.5" fill="#E6E6E4" stroke="#3C3C3C" stroke-width="1.3"/>
    <path d="M2 2 L10.3 8 L18.5 2" stroke="#555" stroke-width="1.1" fill="none"/>
  </svg>
  <div style="position:absolute;left:1167px;top:9px;width:3px;height:1px;background:#A89888"></div>
  <div style="position:absolute;left:1167px;top:12px;width:3px;height:1px;background:#A89888"></div>
  <div style="position:absolute;left:1167px;top:15px;width:3px;height:1px;background:#A89888"></div>
  <svg style="position:absolute;left:1173px;top:3px" width="18" height="18" viewBox="0 0 18 18">
    <path d="M1 10 C3 8 5 8 7 8 L11 8 C13 8 15 8 17 10 L15 12 L14 11 L14 17 L4 17 L4 11 L3 12 Z" fill="#5DB832" stroke="#3F8A1E" stroke-width="0.8"/>
    <circle cx="9" cy="4.8" r="3.6" fill="#F6E45A" stroke="#C9B21E" stroke-width="0.6"/>
    <rect x="7.5" y="8" width="3" height="2" fill="#3A6FC0"/>
  </svg>
  <svg style="position:absolute;left:1195px;top:4px" width="15" height="16" viewBox="0 0 15 16">
    <rect x="2.5" y="0.5" width="12" height="9" fill="#D0D0CE" stroke="#BBB" stroke-width="0.6"/>
    <rect x="3.8" y="1.6" width="9.5" height="2.6" fill="#111"/>
    <rect x="0.5" y="3.8" width="12" height="9" fill="#D8D8D6" stroke="#A8A8A6" stroke-width="0.7"/>
    <rect x="1.7" y="5" width="9.6" height="6.2" fill="#0A0A0A"/>
    <rect x="5" y="13" width="3.2" height="1.5" fill="#444"/>
    <rect x="2.2" y="14.3" width="8.8" height="1.4" rx="0.6" fill="#333"/>
  </svg>
  <svg style="position:absolute;left:1215px;top:4px" width="17" height="16" viewBox="0 0 17 16">
    <rect x="0.5" y="4.5" width="4.2" height="6" fill="#E8E8E8" stroke="#444" stroke-width="0.9"/>
    <path d="M1.5 7.5 H3.8 M2 6 V9 M3.3 6 V9" stroke="#333" stroke-width="0.6"/>
    <path d="M4.7 4.5 L9.5 0.6 L9.5 14.4 L4.7 10.5 Z" fill="#D8D8D8" stroke="#555" stroke-width="0.9" stroke-linejoin="round"/>
    <path d="M11.5 5.3 V10" stroke="#111" stroke-width="1.1" stroke-linecap="round"/>
    <path d="M13.6 2.9 V12.1" stroke="#111" stroke-width="1.1" stroke-linecap="round"/>
    <path d="M15.4 1.2 V13.8" stroke="#111" stroke-width="1.1" stroke-linecap="round"/>
  </svg>
  <svg style="position:absolute;left:1236px;top:4px" width="16" height="16" viewBox="0 0 16 16">
    <circle cx="8" cy="8" r="7.3" fill="#E8E6E2" stroke="#C8C6C2" stroke-width="0.8"/>
    <circle cx="8" cy="8" r="5.8" fill="#CFCDC8"/>
  </svg>
  <div style="position:absolute;left:1255px;top:4px;font:13px 'Liberation Sans', sans-serif;letter-spacing:0.9px;color:#1A1A1A">17 °C</div>
  <div style="position:absolute;left:1302px;top:4px;font:13px 'Liberation Sans', sans-serif;letter-spacing:0.55px;color:#1A1A1A">Pá, 18. září, 21:42:45</div>
</div>

<div id="titlebar" style="position:absolute;left:0;top:25px;width:1440px;height:24px;background:linear-gradient(to bottom,#5A4028 0px,#5A4028 1px,#F2B271 1px,#F2B271 2px,#E49C52 2px,#D89048 6px,#C98540 10px,#C07A38 12px,#B67433 12px,#B87534 13px,#BC7835 16px,#C8823A 23px,#7A5022 23px,#7A5022 24px)">
  <svg style="position:absolute;left:3px;top:5px" width="16" height="16" viewBox="0 0 16 16">
    <rect x="0.6" y="0.6" width="14.8" height="14.8" fill="#fff" stroke="#000" stroke-width="1.2"/>
    <path d="M6.5 1 V15 M10 1 V15 M1 3 H15 M1 6.5 H15 M1 10 H15" stroke="#CFCFCF" stroke-width="0.7"/>
    <path d="M3.3 1 V15 M1 12.5 H15" stroke="#000" stroke-width="1"/>
    <path d="M1.2 10.4 L12 1" stroke="#22DD44" stroke-width="1.1"/>
    <path d="M2 15 C4 12 7 7.5 9.5 7.1 C11 6.9 11.8 9.4 12.8 9.2 C13.8 9 14.3 8.2 14.9 7.9" stroke="#3333FF" stroke-width="1.1" fill="none"/>
    <path d="M1.2 5 L3.25 8.75 C4.5 11 5.5 13.75 6.6 13.75 C8 13.75 8.5 10 9.5 10 C10.5 10 11 10.5 12 10.8 C13.5 11.5 14.5 14 14.9 14.6" stroke="#FF4444" stroke-width="1.1" fill="none"/>
  </svg>
  <div style="position:absolute;left:609px;top:5px;font:bold 13.5px 'Liberation Sans', sans-serif;letter-spacing:1.02px;color:#3A2410;">Gnuplot (window id : 0)</div>
  <div style="position:absolute;left:608px;top:4px;font:bold 13.5px 'Liberation Sans', sans-serif;letter-spacing:1.02px;color:#FFFFFF;">Gnuplot (window id : 0)</div>
  <div style="position:absolute;left:1363px;top:3px;width:22px;height:17px;border:1px solid #6B4722;border-radius:2px;background:linear-gradient(#E0A05A,#C98A46 45%,#B5743A 50%,#AC6E35);box-shadow:inset 0 0 0 1px rgba(255,230,190,0.55)"><div style="position:absolute;left:7px;top:9px;width:9px;height:3px;background:#fff;box-shadow:0 0 0 1px #5A3A18"></div></div><div style="position:absolute;left:1389px;top:3px;width:22px;height:17px;border:1px solid #6B4722;border-radius:2px;background:linear-gradient(#E0A05A,#C98A46 45%,#B5743A 50%,#AC6E35);box-shadow:inset 0 0 0 1px rgba(255,230,190,0.55)"><div style="position:absolute;left:8px;top:5px;width:3px;height:3px;border:2px solid #fff;background:#8A5A28;box-shadow:0 0 0 1px #5A3A18, inset 0 0 0 1px #5A3A18"></div></div><div style="position:absolute;left:1415px;top:3px;width:22px;height:17px;border:1px solid #6B4722;border-radius:2px;background:linear-gradient(#E0A05A,#C98A46 45%,#B5743A 50%,#AC6E35);box-shadow:inset 0 0 0 1px rgba(255,230,190,0.55)"><svg style="position:absolute;left:6px;top:3px" width="12" height="12" viewBox="0 0 12 12"><path d="M2.3 2.3 L9.2 9.2 M9.2 2.3 L2.3 9.2" stroke="#5A3A18" stroke-width="4" stroke-linecap="round"/><path d="M2.3 2.3 L9.2 9.2 M9.2 2.3 L2.3 9.2" stroke="#fff" stroke-width="2.2" stroke-linecap="round"/></svg></div>
</div>

<div id="toolbar" style="position:absolute;left:0;top:49px;width:1440px;height:32px;background:#EEEBE7">
  <div style="position:absolute;left:0;top:0;width:1440px;height:1px;background:#F6F4F2"></div>
  <div style="position:absolute;left:0;top:31px;width:1440px;height:1px;background:#C4BBB1"></div>
  <svg style="position:absolute;left:7px;top:7px" width="19" height="18" viewBox="0 0 19 18">
    <defs><linearGradient id="clip" x1="0" y1="0" x2="0.3" y2="1"><stop offset="0" stop-color="#FFF23A"/><stop offset="0.6" stop-color="#F0B020"/><stop offset="1" stop-color="#D0500A"/></linearGradient></defs>
    <rect x="1.3" y="1.5" width="9.5" height="12.5" rx="1.5" fill="url(#clip)" stroke="#7A5A10" stroke-width="0.6"/>
    <rect x="4" y="0.3" width="4" height="2.2" rx="1" fill="#555"/>
    <rect x="7.3" y="6.8" width="9.4" height="9.5" fill="#fff" stroke="#444" stroke-width="0.8"/>
    <path d="M8 8.5 L11 8.5 C12.5 8.5 14 10 16.5 13" stroke="#F00" stroke-width="1" fill="none"/>
    <path d="M8 15.5 C9 11 10 10 11.5 12 C13 14 14 13 16.5 10" stroke="#0D0" stroke-width="1" fill="none"/>
  </svg>
  <div style="position:absolute;left:35px;top:7px;width:1px;height:17px;background:#BFB5A9"></div>
  <div style="position:absolute;left:36px;top:7px;width:1px;height:17px;background:#FAF8F6"></div>
  <svg style="position:absolute;left:49px;top:7px" width="15" height="17" viewBox="0 0 15 17">
    <defs><linearGradient id="rfg" x1="0" y1="0" x2="1" y2="1"><stop offset="0" stop-color="#0030D0"/><stop offset="0.6" stop-color="#1A8CFF"/><stop offset="1" stop-color="#00C0FF"/></linearGradient>
    <linearGradient id="rfg2" x1="0" y1="0" x2="1" y2="1"><stop offset="0" stop-color="#00C0FF"/><stop offset="0.5" stop-color="#1A6CFF"/><stop offset="1" stop-color="#0010B0"/></linearGradient></defs>
    <path d="M1.3 7.3 C2 3.5 5 2.2 8 2.6 C9.5 2.9 10.5 3.5 11.2 4.2 L13.3 1.6 L13.5 8.2 L7.3 8 L9.3 6.3 C8 5.2 5.5 4.8 3.6 6.2 C3 6.6 2.6 7 2.2 7.4 Z" fill="url(#rfg)" stroke="#000" stroke-width="0.9" stroke-linejoin="round"/>
    <path d="M13.7 9.2 C13 13 10 14.3 7 13.9 C5.5 13.6 4.5 13 3.8 12.3 L1.7 15 L1.5 8.3 L7.7 8.5 L5.7 10.2 C7 11.3 9.5 11.7 11.4 10.3 C12 9.9 12.4 9.5 12.8 9.1 Z" fill="url(#rfg2)" stroke="#000" stroke-width="0.9" stroke-linejoin="round"/>
  </svg>
  <svg style="position:absolute;left:76px;top:8px" width="16" height="16" viewBox="0 0 16 16">
    <path d="M3.5 1 V15 M6.5 1 V15 M9.5 1 V15 M12.5 1 V15 M1 3.5 H15 M1 6.5 H15 M1 9.5 H15 M1 12.5 H15" stroke="#fff" stroke-width="2.6" opacity="0.6"/>
    <path d="M3.5 1 V15 M6.5 1 V15 M9.5 1 V15 M12.5 1 V15 M1 3.5 H15 M1 6.5 H15 M1 9.5 H15 M1 12.5 H15" stroke="#000" stroke-width="1.35"/>
  </svg>
  <svg style="position:absolute;left:103px;top:7px" width="17" height="17" viewBox="0 0 17 17">
    <defs><radialGradient id="zg1" cx="0.35" cy="0.3" r="0.75"><stop offset="0" stop-color="#C8F0FF"/><stop offset="0.5" stop-color="#5AB8F8"/><stop offset="1" stop-color="#1A78D8"/></radialGradient></defs>
    <path d="M12.5 12.5 L15.3 15.3" stroke="#000" stroke-width="2.6" stroke-linecap="round"/>
    <circle cx="8" cy="8" r="7" fill="url(#zg1)" stroke="#000" stroke-width="1.1"/>
    <path d="M3 7.8 L7 4.3 L7 6.2 L13.3 6.2 L13.3 9.6 L7 9.6 L7 11.4 Z" fill="#0000F0" stroke="#000" stroke-width="0.8" stroke-linejoin="round"/>
  </svg>
  <svg style="position:absolute;left:131px;top:7px" width="17" height="17" viewBox="0 0 17 17">
    <defs><radialGradient id="zg2" cx="0.35" cy="0.3" r="0.75"><stop offset="0" stop-color="#C8F0FF"/><stop offset="0.5" stop-color="#5AB8F8"/><stop offset="1" stop-color="#1A78D8"/></radialGradient></defs>
    <path d="M12.5 12.5 L15.3 15.3" stroke="#000" stroke-width="2.6" stroke-linecap="round"/>
    <circle cx="8" cy="8" r="7" fill="url(#zg2)" stroke="#000" stroke-width="1.1"/>
    <path d="M13 7.8 L9 4.3 L9 6.2 L2.7 6.2 L2.7 9.6 L9 9.6 L9 11.4 Z" fill="#00F000" stroke="#000" stroke-width="0.8" stroke-linejoin="round"/>
  </svg>
  <svg style="position:absolute;left:159px;top:7px" width="17" height="17" viewBox="0 0 17 17">
    <defs><radialGradient id="zg3" cx="0.35" cy="0.3" r="0.75"><stop offset="0" stop-color="#C8F0FF"/><stop offset="0.5" stop-color="#5AB8F8"/><stop offset="1" stop-color="#1A78D8"/></radialGradient></defs>
    <path d="M12.5 12.5 L15.3 15.3" stroke="#000" stroke-width="2.6" stroke-linecap="round"/>
    <circle cx="8" cy="8" r="7" fill="url(#zg3)" stroke="#000" stroke-width="1.1"/>
    <rect x="3.8" y="3.6" width="8.4" height="8.4" fill="#fff" stroke="#000" stroke-width="0.9"/>
    <path d="M4.3 7.8 C5.5 6.5 6 4.8 7.5 4.8 C9 4.8 9.5 7 10 9 C10.4 10.5 11 11 11.8 11.4" stroke="#F00" stroke-width="0.9" fill="none"/>
  </svg>
  <div style="position:absolute;left:187px;top:7px;width:1px;height:17px;background:#BFB5A9"></div>
  <div style="position:absolute;left:188px;top:7px;width:1px;height:17px;background:#FAF8F6"></div>
  <svg style="position:absolute;left:199px;top:7px" width="18" height="17" viewBox="0 0 18 17">
    <defs><linearGradient id="wrg" x1="0" y1="0" x2="1" y2="1"><stop offset="0" stop-color="#FFF000"/><stop offset="0.45" stop-color="#FFC800"/><stop offset="1" stop-color="#FF9000"/></linearGradient></defs>
    <path d="M2 9 L12 16.5" stroke="#B8AE9A" stroke-width="3.5" stroke-linecap="round" opacity="0.7"/>
    <path d="M2.8 4.5 C2 2.8 3 1.2 4.5 1 L5.6 2.6 L4.6 4.4 L6 5.6 L7.8 4.6 L8.8 4.2 C9.2 5.5 8.8 6.6 8.2 7.2 L15.6 13.2 C16.2 14 15.6 15.4 14.4 15 L7 8.8 C5.5 9.4 3.5 7.5 2.8 4.5 Z" fill="url(#wrg)" stroke="#000" stroke-width="1" stroke-linejoin="round"/>
  </svg>
  <svg style="position:absolute;left:230px;top:7px" width="12" height="17" viewBox="0 0 12 17">
    <path d="M1.2 4.8 C1.2 2 3.3 0.8 6 0.8 C9.2 0.8 10.8 2.6 10.8 4.8 C10.8 7.6 7.4 8 7.2 10.4 L4.4 10.4 C4.4 7 7.8 6.6 7.8 4.9 C7.8 3.9 7 3.3 6 3.3 C4.9 3.3 4.3 3.9 4.3 4.8 Z" fill="#3030F8" stroke="#000" stroke-width="0.9" stroke-linejoin="round"/>
    <rect x="4.2" y="12" width="3.4" height="3.6" fill="#6A6AF0" stroke="#000" stroke-width="0.9"/>
  </svg>
</div>

<div id="statusbar" style="position:absolute;left:0;top:849px;width:1440px;height:25px;background:#EEEBE7">
  <div style="position:absolute;left:2px;top:2px;width:1437px;height:22px;border-top:1px solid #9D958C;border-left:1px solid #9D958C;border-bottom:1px solid #FFFFFF;border-right:1px solid #FFFFFF;box-sizing:border-box"></div>
  <svg style="position:absolute;left:1425px;top:12px" width="14" height="14" viewBox="0 0 14 14"><rect x="11.2" y="1.0" width="1.2" height="1.2" fill="#FFFFFF"/><rect x="10.2" y="0.0" width="1.4" height="1.4" fill="#A89E93"/><rect x="11.2" y="4.0" width="1.2" height="1.2" fill="#FFFFFF"/><rect x="10.2" y="3.0" width="1.4" height="1.4" fill="#A89E93"/><rect x="8.2" y="4.0" width="1.2" height="1.2" fill="#FFFFFF"/><rect x="7.2" y="3.0" width="1.4" height="1.4" fill="#A89E93"/><rect x="11.2" y="7.0" width="1.2" height="1.2" fill="#FFFFFF"/><rect x="10.2" y="6.0" width="1.4" height="1.4" fill="#A89E93"/><rect x="8.2" y="7.0" width="1.2" height="1.2" fill="#FFFFFF"/><rect x="7.2" y="6.0" width="1.4" height="1.4" fill="#A89E93"/><rect x="5.2" y="7.0" width="1.2" height="1.2" fill="#FFFFFF"/><rect x="4.2" y="6.0" width="1.4" height="1.4" fill="#A89E93"/><rect x="11.2" y="10.0" width="1.2" height="1.2" fill="#FFFFFF"/><rect x="10.2" y="9.0" width="1.4" height="1.4" fill="#A89E93"/><rect x="8.2" y="10.0" width="1.2" height="1.2" fill="#FFFFFF"/><rect x="7.2" y="9.0" width="1.4" height="1.4" fill="#A89E93"/><rect x="5.2" y="10.0" width="1.2" height="1.2" fill="#FFFFFF"/><rect x="4.2" y="9.0" width="1.4" height="1.4" fill="#A89E93"/><rect x="2.2" y="10.0" width="1.2" height="1.2" fill="#FFFFFF"/><rect x="1.2" y="9.0" width="1.4" height="1.4" fill="#A89E93"/></svg>
</div>

<div id="bottompanel" style="position:absolute;left:0;top:874px;width:1440px;height:26px;background:#EEEBE7">
  <div style="position:absolute;left:0;top:0;width:1440px;height:1px;background:#B9AEA2"></div>
  <div style="position:absolute;left:0;top:1px;width:1440px;height:1px;background:#F8F6F4"></div>
  <div style="position:absolute;left:1px;top:3px;width:22px;height:22px;box-sizing:border-box;border:1px solid #B4ABA1;border-radius:3px;background:#EEEBE7">
    <svg style="position:absolute;left:3px;top:4px" width="15" height="12" viewBox="0 0 15 12"><rect x="0.5" y="0.5" width="14" height="11" fill="#fff" stroke="#000" stroke-width="1"/><rect x="2" y="2" width="11" height="8" fill="#9A4A1A"/><rect x="3" y="3" width="3" height="3" fill="#fff"/></svg>
  </div>
  <div style="position:absolute;left:27px;top:11px;width:4px;height:1px;background:#B9AEA2"></div>
  <div style="position:absolute;left:27px;top:14px;width:4px;height:1px;background:#B9AEA2"></div>
  <div style="position:absolute;left:27px;top:17px;width:4px;height:1px;background:#B9AEA2"></div>
  <div style="position:absolute;left:35px;top:3px;width:184px;height:22px;box-sizing:border-box;border:1px solid #B4ABA1;border-radius:3px;background:linear-gradient(#F4F2EF,#EAE6E1);box-shadow:inset 1px 1px 0 #FFFFFF">
  <svg style="position:absolute;left:7px;top:3px" width="16" height="15" viewBox="0 0 16 15"><rect x="0.5" y="0.5" width="15" height="14" rx="2" fill="#3A3C3A" stroke="#222"/><rect x="2" y="2" width="12" height="9" fill="#505250"/><path d="M4 4.5 L6.5 6 L4 7.8" stroke="#fff" stroke-width="0.9" fill="none"/><rect x="7" y="7.5" width="3" height="0.9" fill="#fff"/><rect x="2" y="12" width="2" height="1" fill="#4BD12B"/></svg>
  <div style="position:absolute;left:30px;top:3px;font:13px 'Liberation Sans', sans-serif;letter-spacing:0.45px;color:#1A1A1A;white-space:nowrap">kaklik@kaklik-kolej-u...</div></div>
  <div style="position:absolute;left:221px;top:3px;width:184px;height:22px;box-sizing:border-box;border:1px solid #B4ABA1;border-radius:3px;background:linear-gradient(#F4F2EF,#EAE6E1);box-shadow:inset 1px 1px 0 #FFFFFF">
  <svg style="position:absolute;left:7px;top:3px" width="16" height="16" viewBox="0 0 16 16"><path d="M2.5 1 L13.5 1 L13.5 5 L15 6.5 L15 15 L1 15 L1 6.5 L2.5 5 Z" fill="#F2F2F0" stroke="#8A8A88" stroke-width="0.8"/><rect x="2.5" y="8.3" width="11" height="5.5" fill="#6A6A6A"/><path d="M3 10.2 H13 M3 12 H13 M8 8.5 V13.5" stroke="#BDBDBD" stroke-width="0.7"/></svg>
  <div style="position:absolute;left:30px;top:3px;font:13px 'Liberation Sans', sans-serif;letter-spacing:0.45px;color:#1A1A1A;white-space:nowrap">SW - Prohlížeč souborů</div></div>
  <div style="position:absolute;left:407px;top:3px;width:184px;height:22px;box-sizing:border-box;border:1px solid #B4ABA1;border-radius:3px;background:linear-gradient(#F4F2EF,#EAE6E1);box-shadow:inset 1px 1px 0 #FFFFFF">
  <svg style="position:absolute;left:7px;top:2px" width="17" height="17" viewBox="0 0 18 18"><path d="M1 10 C3 8 5 8 7 8 L11 8 C13 8 15 8 17 10 L15 12 L14 11 L14 17 L4 17 L4 11 L3 12 Z" fill="#5DB832" stroke="#3F8A1E" stroke-width="0.8"/><circle cx="9" cy="4.8" r="3.6" fill="#F6E45A" stroke="#C9B21E" stroke-width="0.6"/><rect x="7.5" y="8" width="3" height="2" fill="#3A6FC0"/></svg>
  <div style="position:absolute;left:30px;top:3px;font:13px 'Liberation Sans', sans-serif;letter-spacing:0.45px;color:#1A1A1A;white-space:nowrap">Gajim</div></div>
  <div style="position:absolute;left:593px;top:3px;width:185px;height:22px;box-sizing:border-box;border:1px solid #A59B90;border-radius:3px;background:linear-gradient(#D9D2CA,#E2DCD5);box-shadow:inset 1px 1px 0 #C9C1B8">
  <svg style="position:absolute;left:7px;top:3px" width="16" height="16" viewBox="0 0 16 16"><rect x="0.6" y="0.6" width="14.8" height="14.8" fill="#fff" stroke="#000" stroke-width="1.2"/><path d="M6.5 1 V15 M10 1 V15 M1 3 H15 M1 6.5 H15 M1 10 H15" stroke="#CFCFCF" stroke-width="0.7"/><path d="M3.3 1 V15 M1 12.5 H15" stroke="#000" stroke-width="1"/><path d="M1.2 10.4 L12 1" stroke="#22DD44" stroke-width="1.1"/><path d="M2 15 C4 12 7 7.5 9.5 7.1 C11 6.9 11.8 9.4 12.8 9.2 C13.8 9 14.3 8.2 14.9 7.9" stroke="#3333FF" stroke-width="1.1" fill="none"/><path d="M1.2 5 L3.25 8.75 C4.5 11 5.5 13.75 6.6 13.75 C8 13.75 8.5 10 9.5 10 C10.5 10 11 10.5 12 10.8 C13.5 11.5 14.5 14 14.9 14.6" stroke="#FF4444" stroke-width="1.1" fill="none"/></svg>
  <div style="position:absolute;left:30px;top:3px;font:13px 'Liberation Sans', sans-serif;letter-spacing:0.45px;color:#1A1A1A;white-space:nowrap">Gnuplot (window id : 0)</div></div>
  <div style="position:absolute;left:1248px;top:7px;font:13px 'Liberation Sans', sans-serif;letter-spacing:1.0px;color:#1A1A1A">USA</div>
  <div style="position:absolute;left:1280px;top:3px;width:133px;height:22px;background:#B0A597;border-radius:3px"></div>
  <div style="position:absolute;left:1281px;top:3px;width:32px;height:22px;box-sizing:border-box;border:1.5px solid #141414;background:#EFECE8">
    <svg style="position:absolute;left:6px;top:3px" width="18" height="13" viewBox="0 0 18 13"><rect x="0.6" y="0.6" width="16.8" height="11.3" rx="1.5" fill="#F2F2F0" stroke="#8C8C8A" stroke-width="1"/><path d="M1.5 1.5 L9 7.2 L16.5 1.5 M1.5 11.3 L7 6.2 M16.5 11.3 L11 6.2" stroke="#9A9A98" stroke-width="0.9" fill="none"/></svg>
  </div>
  <div style="position:absolute;left:1314px;top:3px;width:32px;height:22px;box-sizing:border-box;border:1.5px solid #141414;border-top:2px solid #D08A30;background:#FCEEDC">
    <svg style="position:absolute;left:7px;top:1px" width="15" height="17" viewBox="0 0 15 17"><rect x="0.8" y="0.8" width="13.4" height="15.4" fill="#fff" stroke="#000" stroke-width="1.6"/><path d="M5 1 V16 M10 1 V16 M1 5.5 H14 M1 11 H14" stroke="#B8B8B8" stroke-width="0.6"/><path d="M2 14 L12 3" stroke="#22DD22" stroke-width="1.2"/><path d="M2 13 C5 8 8 9 10 11 C12 12 13 9 14 9" stroke="#2233EE" stroke-width="1.2" fill="none"/><path d="M2 7 C4 13 7 13 9 12 C11 10 12 13 14 13" stroke="#EE2222" stroke-width="1.2" fill="none"/></svg>
  </div>
  <div style="position:absolute;left:1378px;top:3px;width:1px;height:22px;background:#F2EFEA"></div>
  <svg style="position:absolute;left:1417px;top:3px" width="20" height="22" viewBox="0 0 20 22">
    <defs><linearGradient id="trb" x1="0" y1="0" x2="0" y2="1"><stop offset="0" stop-color="#F88A30"/><stop offset="1" stop-color="#E86A10"/></linearGradient></defs>
    <path d="M2.5 8.5 L17.5 8.5 L16.3 21 L3.7 21 Z" fill="url(#trb)" stroke="#B05010" stroke-width="0.5"/>
    <path d="M1.2 8 L3.5 3 C5 1 7 0.6 9 0.8 L11 0.8 C13 0.6 15 1 16.5 3 L18.8 8 Z" fill="#E4E4E2" stroke="#9A9A98" stroke-width="0.6"/>
    <path d="M6 7.5 L11.5 1.2 L14 2 L9 7.5 Z" fill="#9C9C9A"/>
    <rect x="1" y="7.6" width="18" height="1.6" rx="0.6" fill="#F6F6F4" stroke="#B8B8B6" stroke-width="0.4"/>
    <path d="M10 12.2 L12.6 16.8 L7.4 16.8 Z" fill="#D8540A" stroke="#FFFFFF" stroke-width="1.6" stroke-linejoin="round"/>
  </svg>

</div>
</body></html>
